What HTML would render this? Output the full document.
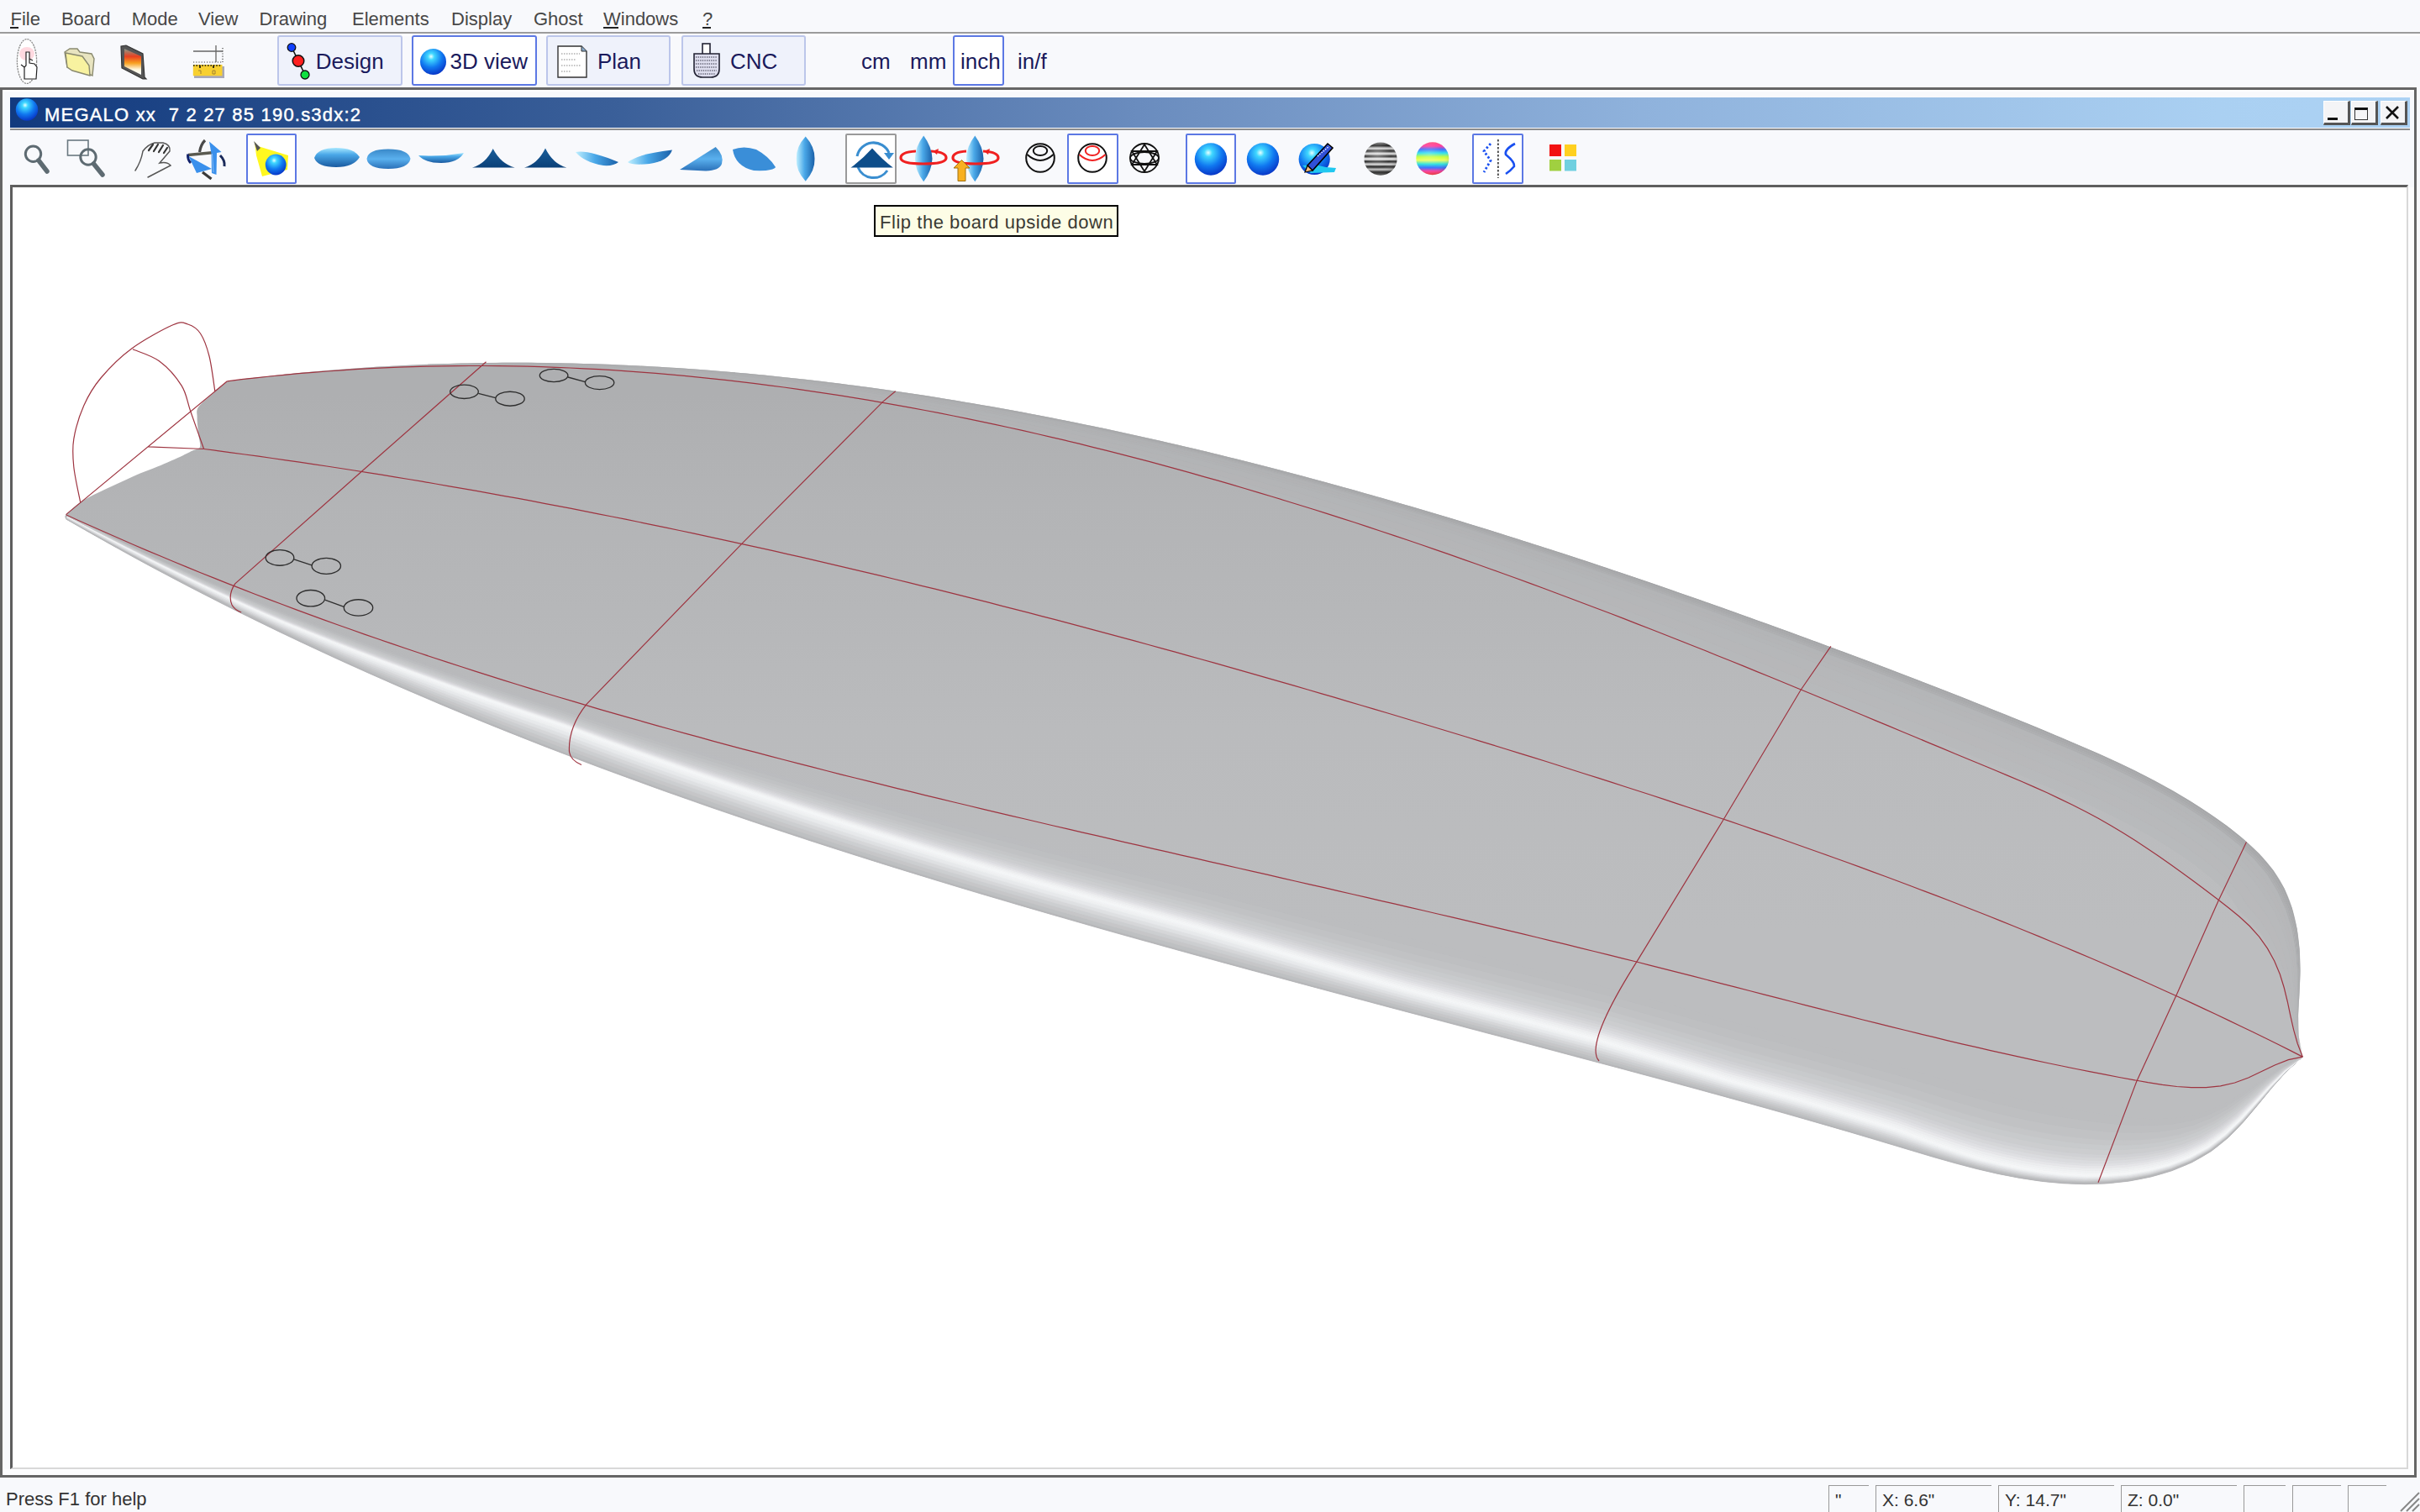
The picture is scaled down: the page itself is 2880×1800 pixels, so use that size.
<!DOCTYPE html>
<html><head><meta charset="utf-8"><style>
html,body{margin:0;padding:0;}
body{width:2880px;height:1800px;overflow:hidden;position:relative;background:#f8f9fc;font-family:"Liberation Sans", sans-serif;}
.t{position:absolute;white-space:pre;font-family:"Liberation Sans", sans-serif;}
</style></head><body>
<div class="t" style="left:12.5px;top:11.9px;font-size:22px;line-height:22px;color:#474747;">File</div><div class="t" style="left:72.9px;top:11.9px;font-size:22px;line-height:22px;color:#474747;">Board</div><div class="t" style="left:156.8px;top:11.9px;font-size:22px;line-height:22px;color:#474747;">Mode</div><div class="t" style="left:236px;top:11.9px;font-size:22px;line-height:22px;color:#474747;">View</div><div class="t" style="left:308.5px;top:11.9px;font-size:22px;line-height:22px;color:#474747;">Drawing</div><div class="t" style="left:419px;top:11.9px;font-size:22px;line-height:22px;color:#474747;">Elements</div><div class="t" style="left:537px;top:11.9px;font-size:22px;line-height:22px;color:#474747;">Display</div><div class="t" style="left:635px;top:11.9px;font-size:22px;line-height:22px;color:#474747;">Ghost</div><div class="t" style="left:718px;top:11.9px;font-size:22px;line-height:22px;color:#474747;">Windows</div><div class="t" style="left:836px;top:11.9px;font-size:22px;line-height:22px;color:#474747;">?</div><div style="position:absolute;left:12px;top:32px;width:10px;height:2px;background:#222"></div><div style="position:absolute;left:718px;top:32px;width:18px;height:2px;background:#222"></div><div style="position:absolute;left:836px;top:32px;width:10px;height:2px;background:#222"></div><div style="position:absolute;left:0;top:38px;width:2880px;height:2px;background:#9c9c9c"></div><div style="position:absolute;left:0;top:40px;width:2880px;height:3px;background:#fdfdfe"></div><div style="position:absolute;left:330px;top:42px;width:145px;height:56px;border:2px solid #bcc6ea;border-radius:3px;background:#eff2fb"></div><div style="position:absolute;left:490px;top:42px;width:145px;height:56px;border:2px solid #5c78e4;border-radius:3px;background:#ffffff"></div><div style="position:absolute;left:650px;top:42px;width:144px;height:56px;border:2px solid #bcc6ea;border-radius:3px;background:#eff2fb"></div><div style="position:absolute;left:811px;top:42px;width:144px;height:56px;border:2px solid #bcc6ea;border-radius:3px;background:#eff2fb"></div><div style="position:absolute;left:1134px;top:42px;width:57px;height:56px;border:2px solid #5c78e4;border-radius:3px;background:#ffffff"></div><div class="t" style="left:375.8px;top:60.0px;font-size:26px;line-height:26px;color:#1a1a5c;">Design</div><div class="t" style="left:535.5px;top:60.0px;font-size:26px;line-height:26px;color:#1a1a5c;">3D view</div><div class="t" style="left:711px;top:60.0px;font-size:26px;line-height:26px;color:#1a1a5c;">Plan</div><div class="t" style="left:869px;top:60.0px;font-size:26px;line-height:26px;color:#1a1a5c;">CNC</div><div class="t" style="left:1025px;top:60.0px;font-size:26px;line-height:26px;color:#1a1a5c;">cm</div><div class="t" style="left:1083px;top:60.0px;font-size:26px;line-height:26px;color:#1a1a5c;">mm</div><div class="t" style="left:1143px;top:60.0px;font-size:26px;line-height:26px;color:#1a1a5c;">inch</div><div class="t" style="left:1211px;top:60.0px;font-size:26px;line-height:26px;color:#1a1a5c;">in/f</div><div style="position:absolute;left:0;top:104px;width:2876px;height:3px;background:#666"></div><div style="position:absolute;left:0;top:104px;width:3px;height:1655px;background:#666"></div><div style="position:absolute;left:2873px;top:104px;width:3px;height:1655px;background:#666"></div><div style="position:absolute;left:0;top:1756px;width:2876px;height:3px;background:#666"></div><div style="position:absolute;left:3px;top:107px;width:2870px;height:2px;background:#fff"></div><div style="position:absolute;left:3px;top:107px;width:2px;height:1649px;background:#fff"></div><div style="position:absolute;left:3px;top:1749px;width:2870px;height:7px;background:#fdfdfe"></div><div style="position:absolute;left:2866px;top:223px;width:7px;height:1533px;background:#fdfdfe"></div><div style="position:absolute;left:12px;top:116px;width:2856px;height:36px;background:linear-gradient(to right,#123a7e 0%,#3a5f99 25%,#6a8cbe 47%,#8fb2dc 68%,#aad0f2 92%,#acd2f4 100%)"></div><div class="t" style="left:53px;top:125.7px;font-size:22px;line-height:22px;color:#ffffff;letter-spacing:1.2px;-webkit-text-stroke:0.45px #fff;">MEGALO xx&nbsp; 7 2 27 85 190.s3dx:2</div><div style="position:absolute;left:2765px;top:120px;width:28px;height:25px;background:#f4f4f6;border-right:3px solid #555;border-bottom:3px solid #555;border-top:1px solid #fff;border-left:1px solid #fff"></div><div style="position:absolute;left:2798px;top:120px;width:28px;height:25px;background:#f4f4f6;border-right:3px solid #555;border-bottom:3px solid #555;border-top:1px solid #fff;border-left:1px solid #fff"></div><div style="position:absolute;left:2833px;top:120px;width:28px;height:25px;background:#f4f4f6;border-right:3px solid #555;border-bottom:3px solid #555;border-top:1px solid #fff;border-left:1px solid #fff"></div><div style="position:absolute;left:2770px;top:140px;width:12px;height:3px;background:#111"></div><div style="position:absolute;left:2802px;top:128px;width:16px;height:15px;border:1.5px solid #333;border-top:3px solid #111;box-sizing:border-box"></div><svg style="position:absolute;left:2838px;top:125px" width="18" height="18"><path d="M2,2 L16,16 M16,2 L2,16" stroke="#111" stroke-width="2.6"/></svg><div style="position:absolute;left:12px;top:153px;width:2856px;height:2px;background:#8e8e8e"></div><div style="position:absolute;left:293px;top:159px;width:56px;height:56px;border:2px solid #5c78e4;border-radius:2px;background:#fff"></div><div style="position:absolute;left:1006px;top:159px;width:57px;height:56px;border:2px solid #9a9a9a;border-radius:2px;background:#fff"></div><div style="position:absolute;left:1270px;top:159px;width:57px;height:56px;border:2px solid #5c78e4;border-radius:2px;background:#fff"></div><div style="position:absolute;left:1411px;top:159px;width:56px;height:56px;border:2px solid #5c78e4;border-radius:2px;background:#fff"></div><div style="position:absolute;left:1752px;top:159px;width:57px;height:56px;border:2px solid #5c78e4;border-radius:2px;background:#fff"></div><div style="position:absolute;left:12px;top:220px;width:2854px;height:1529px;background:#fff;border-top:3px solid #5e5e5e;border-left:3px solid #5e5e5e;border-right:2px solid #d8d8d8;border-bottom:2px solid #d8d8d8;box-sizing:border-box"></div><div class="t" style="left:7px;top:1774.4px;font-size:22px;line-height:22px;color:#333;">Press F1 for help</div><div style="position:absolute;left:2176px;top:1768px;width:48px;height:32px;border-left:1.5px solid #999;border-top:1.5px solid #999;box-sizing:border-box"></div><div class="t" style="left:2184px;top:1775.2px;font-size:21px;line-height:21px;color:#333;">"</div><div style="position:absolute;left:2232px;top:1768px;width:138px;height:32px;border-left:1.5px solid #999;border-top:1.5px solid #999;box-sizing:border-box"></div><div class="t" style="left:2240px;top:1775.2px;font-size:21px;line-height:21px;color:#333;">X: 6.6"</div><div style="position:absolute;left:2378px;top:1768px;width:138px;height:32px;border-left:1.5px solid #999;border-top:1.5px solid #999;box-sizing:border-box"></div><div class="t" style="left:2386px;top:1775.2px;font-size:21px;line-height:21px;color:#333;">Y: 14.7"</div><div style="position:absolute;left:2524px;top:1768px;width:138px;height:32px;border-left:1.5px solid #999;border-top:1.5px solid #999;box-sizing:border-box"></div><div class="t" style="left:2532px;top:1775.2px;font-size:21px;line-height:21px;color:#333;">Z: 0.0"</div><div style="position:absolute;left:2670px;top:1768px;width:50px;height:32px;border-left:1.5px solid #999;border-top:1.5px solid #999;box-sizing:border-box"></div><div style="position:absolute;left:2728px;top:1768px;width:58px;height:32px;border-left:1.5px solid #999;border-top:1.5px solid #999;box-sizing:border-box"></div><div style="position:absolute;left:2794px;top:1768px;width:46px;height:32px;border-left:1.5px solid #999;border-top:1.5px solid #999;box-sizing:border-box"></div><svg style="position:absolute;left:2852px;top:1772px" width="28" height="28"><path d="M27,5 L5,27 M27,12 L12,27 M27,19 L19,27" stroke="#888" stroke-width="2"/></svg>
<svg style="position:absolute;left:0;top:0" width="2880" height="1800" viewBox="0 0 2880 1800">
<clipPath id="vp"><rect x="15" y="223" width="2849" height="1524"/></clipPath>
<g clip-path="url(#vp)"><defs><linearGradient id="deck" gradientUnits="userSpaceOnUse" x1="0" y1="470" x2="0" y2="1110"><stop offset="0" stop-color="#aeafb1"/><stop offset="0.2" stop-color="#b3b4b6"/><stop offset="0.4" stop-color="#b6b7b9"/><stop offset="0.62" stop-color="#babbbd"/><stop offset="1" stop-color="#bcbdbf"/></linearGradient></defs><path d="M270.4,453.8 277.4,452.9 284.3,452.0 291.3,451.1 298.3,450.3 305.3,449.5 312.2,448.7 319.2,447.9 326.2,447.1 333.1,446.4 340.1,445.6 347.1,444.9 354.1,444.2 361.0,443.6 368.0,442.9 375.0,442.3 381.9,441.7 388.9,441.1 395.9,440.5 402.8,439.9 409.8,439.4 416.8,438.9 423.7,438.4 430.7,437.9 437.7,437.4 444.6,437.0 451.6,436.6 458.5,436.2 465.5,435.8 472.5,435.4 479.4,435.1 486.4,434.7 493.3,434.4 500.3,434.1 507.3,433.8 514.2,433.6 521.2,433.3 528.1,433.1 535.1,432.9 542.0,432.7 549.0,432.5 555.9,432.4 562.9,432.2 569.8,432.1 576.8,432.0 583.7,431.9 590.7,431.9 597.6,431.8 604.6,431.8 611.5,431.8 618.5,431.8 625.4,431.8 632.4,431.8 639.3,431.9 646.2,432.0 653.2,432.0 660.1,432.2 667.1,432.3 674.0,432.4 680.9,432.6 687.9,432.7 694.8,432.9 701.7,433.1 708.7,433.3 715.6,433.6 722.5,433.8 729.5,434.1 736.4,434.4 743.3,434.7 750.3,435.0 757.2,435.3 764.1,435.7 771.0,436.1 778.0,436.4 784.9,436.8 791.8,437.2 798.7,437.7 805.6,438.1 812.6,438.6 819.5,439.1 826.4,439.5 833.3,440.0 840.2,440.6 847.1,441.1 854.0,441.7 860.9,442.2 867.9,442.8 874.8,443.4 881.7,444.0 888.6,444.6 895.5,445.3 902.4,445.9 909.3,446.6 916.2,447.3 923.1,448.0 930.0,448.7 936.9,449.4 943.8,450.2 950.7,450.9 957.6,451.7 964.5,452.5 971.3,453.3 978.2,454.1 985.1,454.9 992.0,455.8 998.9,456.6 1005.8,457.5 1012.7,458.4 1019.5,459.3 1026.4,460.2 1033.3,461.1 1040.2,462.1 1047.1,463.0 1053.9,464.0 1060.8,465.0 1067.7,466.0 1074.5,467.0 1081.4,468.0 1088.3,469.0 1095.1,470.1 1102.0,471.1 1108.9,472.2 1115.7,473.3 1122.6,474.4 1129.4,475.5 1136.3,476.6 1143.2,477.7 1150.0,478.9 1156.9,480.1 1163.7,481.2 1170.6,482.4 1177.4,483.6 1184.3,484.8 1191.1,486.1 1197.9,487.3 1204.8,488.5 1211.6,489.8 1218.5,491.1 1225.3,492.4 1232.1,493.7 1239.0,495.0 1245.8,496.3 1252.6,497.6 1259.4,499.0 1266.3,500.3 1273.1,501.7 1279.9,503.1 1286.7,504.5 1293.6,505.9 1300.4,507.3 1307.2,508.7 1314.0,510.1 1320.8,511.6 1327.6,513.0 1334.4,514.5 1341.2,516.0 1348.0,517.5 1354.8,519.0 1361.6,520.5 1368.4,522.0 1375.2,523.6 1382.0,525.1 1388.8,526.7 1395.6,528.2 1402.4,529.8 1409.2,531.4 1416.0,533.0 1422.8,534.6 1429.5,536.2 1436.3,537.8 1443.1,539.5 1449.9,541.1 1456.7,542.8 1463.4,544.5 1470.2,546.1 1477.0,547.8 1483.7,549.5 1490.5,551.2 1497.3,553.0 1504.0,554.7 1510.8,556.4 1517.5,558.2 1524.3,559.9 1531.0,561.7 1537.8,563.5 1544.5,565.3 1551.3,567.1 1558.0,568.9 1564.8,570.7 1571.5,572.5 1578.2,574.3 1585.0,576.2 1591.7,578.0 1598.4,579.9 1605.2,581.7 1611.9,583.6 1618.6,585.5 1625.3,587.4 1632.1,589.3 1638.8,591.2 1645.5,593.1 1652.2,595.1 1658.9,597.0 1665.6,598.9 1672.3,600.9 1679.0,602.8 1685.7,604.8 1692.4,606.8 1699.1,608.8 1705.8,610.8 1712.5,612.8 1719.2,614.8 1725.9,616.8 1732.6,618.8 1739.3,620.8 1745.9,622.9 1752.6,624.9 1759.3,627.0 1766.0,629.0 1772.6,631.1 1779.3,633.2 1786.0,635.3 1792.6,637.4 1799.3,639.5 1806.0,641.6 1812.6,643.7 1819.3,645.8 1825.9,647.9 1832.6,650.0 1839.2,652.2 1845.9,654.3 1852.5,656.5 1859.1,658.6 1865.8,660.8 1872.4,663.0 1879.0,665.2 1885.7,667.3 1892.3,669.5 1898.9,671.7 1905.5,673.9 1912.2,676.1 1918.8,678.4 1925.4,680.6 1932.0,682.8 1938.6,685.0 1945.2,687.3 1951.8,689.5 1958.4,691.8 1965.0,694.0 1971.6,696.3 1978.2,698.6 1984.8,700.8 1991.4,703.1 1998.0,705.4 2004.5,707.7 2011.1,710.0 2017.7,712.3 2024.3,714.6 2030.8,716.9 2037.4,719.2 2044.0,721.5 2050.5,723.8 2057.1,726.2 2063.6,728.5 2070.2,730.9 2076.7,733.2 2083.3,735.5 2089.8,737.9 2096.4,740.3 2102.9,742.6 2109.5,745.0 2116.0,747.4 2122.5,749.7 2129.0,752.1 2135.6,754.5 2142.1,756.9 2148.6,759.3 2155.1,761.7 2161.6,764.1 2168.1,766.5 2174.7,768.9 2181.2,771.3 2187.7,773.7 2194.2,776.1 2200.6,778.5 2207.1,781.0 2213.6,783.4 2220.1,785.8 2226.6,788.3 2233.1,790.7 2239.6,793.2 2246.0,795.6 2252.5,798.1 2259.0,800.5 2265.4,803.0 2271.9,805.5 2278.4,808.0 2284.8,810.5 2291.3,813.0 2297.7,815.5 2304.2,818.0 2310.6,820.5 2317.1,823.0 2323.5,825.5 2329.9,828.0 2336.4,830.6 2342.8,833.1 2349.2,835.7 2355.7,838.2 2362.1,840.8 2368.5,843.4 2374.9,845.9 2381.4,848.5 2387.8,851.1 2394.2,853.7 2400.6,856.3 2407.0,859.0 2413.4,861.6 2419.8,864.2 2426.2,866.9 2432.6,869.5 2439.0,872.2 2445.4,874.9 2451.8,877.5 2458.2,880.2 2464.5,882.9 2470.9,885.7 2477.3,888.4 2483.6,891.2 2490.0,893.9 2496.3,896.7 2502.7,899.6 2509.0,902.5 2515.3,905.4 2521.6,908.3 2527.9,911.3 2534.2,914.3 2540.4,917.3 2546.7,920.4 2552.9,923.6 2559.1,926.8 2565.3,930.0 2571.4,933.3 2577.6,936.7 2583.7,940.1 2589.8,943.6 2595.9,947.2 2601.9,950.8 2607.9,954.5 2613.9,958.2 2619.9,962.1 2625.8,966.0 2631.7,970.0 2637.6,974.1 2643.4,978.2 2649.2,982.5 2655.0,986.8 2660.7,991.3 2666.3,995.8 2671.7,1000.4 2677.1,1005.2 2682.3,1010.0 2687.4,1015.0 2692.2,1020.1 2696.9,1025.3 2701.3,1030.7 2705.5,1036.2 2709.4,1041.8 2713.1,1047.6 2716.4,1053.5 2719.5,1059.6 2722.3,1065.8 2724.8,1072.1 2727.0,1078.5 2729.0,1085.1 2730.8,1091.7 2732.3,1098.4 2733.6,1105.2 2734.7,1112.0 2735.6,1118.9 2736.3,1125.9 2736.9,1132.9 2737.2,1139.9 2737.4,1147.0 2737.5,1154.0 2737.4,1161.1 2737.2,1168.1 2736.9,1175.2 2736.5,1182.2 2736.1,1189.2 2735.7,1196.1 2735.3,1203.1 2735.0,1210.0 2734.9,1216.9 2735.0,1223.8 2735.3,1230.7 2736.0,1237.6 2737.0,1244.4 2738.4,1251.3 2740.3,1258.1 2734.8,1262.5 2729.5,1267.3 2724.4,1272.2 2719.4,1277.3 2714.5,1282.5 2709.7,1287.9 2705.1,1293.3 2700.4,1298.9 2695.8,1304.4 2691.3,1310.1 2686.7,1315.7 2682.2,1321.3 2677.6,1326.8 2672.9,1332.3 2668.2,1337.6 2663.4,1342.9 2658.4,1348.0 2653.4,1352.9 2648.2,1357.6 2642.8,1362.1 2637.2,1366.4 2631.5,1370.5 2625.7,1374.3 2619.6,1377.9 2613.5,1381.3 2607.2,1384.4 2600.8,1387.4 2594.2,1390.1 2587.6,1392.7 2580.9,1395.1 2574.1,1397.2 2567.2,1399.2 2560.2,1401.0 2553.2,1402.6 2546.1,1404.0 2539.0,1405.3 2531.8,1406.4 2524.6,1407.3 2517.4,1408.1 2510.2,1408.7 2503.0,1409.2 2495.8,1409.5 2488.6,1409.7 2481.4,1409.7 2474.2,1409.7 2467.1,1409.4 2459.9,1409.1 2452.8,1408.6 2445.7,1408.1 2438.6,1407.4 2431.5,1406.6 2424.4,1405.7 2417.4,1404.7 2410.3,1403.6 2403.3,1402.4 2396.2,1401.1 2389.2,1399.8 2382.2,1398.4 2375.2,1396.9 2368.2,1395.3 2361.2,1393.7 2354.2,1392.0 2347.2,1390.2 2340.3,1388.4 2333.3,1386.6 2326.4,1384.7 2319.4,1382.7 2312.5,1380.8 2305.5,1378.8 2298.6,1376.8 2291.7,1374.7 2284.8,1372.7 2277.8,1370.6 2270.9,1368.5 2264.0,1366.4 2257.1,1364.3 2250.2,1362.2 2243.3,1360.2 2236.4,1358.1 2229.5,1356.1 2222.6,1354.0 2215.7,1352.0 2208.8,1349.9 2201.9,1347.9 2195.0,1345.9 2188.1,1343.9 2181.2,1341.9 2174.3,1339.9 2167.5,1337.9 2160.6,1335.9 2153.7,1333.9 2146.8,1332.0 2139.9,1330.0 2133.0,1328.0 2126.2,1326.1 2119.3,1324.1 2112.4,1322.2 2105.5,1320.3 2098.6,1318.3 2091.8,1316.4 2084.9,1314.5 2078.0,1312.6 2071.1,1310.7 2064.3,1308.8 2057.4,1306.9 2050.5,1305.0 2043.6,1303.1 2036.8,1301.2 2029.9,1299.3 2023.0,1297.5 2016.1,1295.6 2009.3,1293.7 2002.4,1291.9 1995.5,1290.0 1988.6,1288.1 1981.8,1286.3 1974.9,1284.4 1968.0,1282.6 1961.1,1280.7 1954.2,1278.9 1947.4,1277.0 1940.5,1275.2 1933.6,1273.3 1926.7,1271.5 1919.8,1269.7 1913.0,1267.8 1906.1,1266.0 1899.2,1264.2 1892.3,1262.3 1885.4,1260.5 1878.5,1258.7 1871.6,1256.8 1864.7,1255.0 1857.8,1253.2 1851.0,1251.3 1844.1,1249.5 1837.2,1247.7 1830.3,1245.9 1823.4,1244.0 1816.5,1242.2 1809.6,1240.4 1802.7,1238.6 1795.8,1236.7 1788.9,1234.9 1782.0,1233.1 1775.1,1231.3 1768.2,1229.4 1761.2,1227.6 1754.3,1225.8 1747.4,1224.0 1740.5,1222.1 1733.6,1220.3 1726.7,1218.5 1719.8,1216.7 1712.9,1214.8 1706.0,1213.0 1699.1,1211.2 1692.2,1209.3 1685.3,1207.5 1678.3,1205.7 1671.4,1203.9 1664.5,1202.0 1657.6,1200.2 1650.7,1198.4 1643.8,1196.5 1636.9,1194.7 1630.0,1192.8 1623.0,1191.0 1616.1,1189.2 1609.2,1187.3 1602.3,1185.5 1595.4,1183.6 1588.5,1181.8 1581.6,1179.9 1574.6,1178.1 1567.7,1176.2 1560.8,1174.4 1553.9,1172.5 1547.0,1170.7 1540.1,1168.8 1533.2,1167.0 1526.3,1165.1 1519.3,1163.2 1512.4,1161.4 1505.5,1159.5 1498.6,1157.6 1491.7,1155.8 1484.8,1153.9 1477.9,1152.0 1471.0,1150.1 1464.1,1148.3 1457.1,1146.4 1450.2,1144.5 1443.3,1142.6 1436.4,1140.7 1429.5,1138.8 1422.6,1136.9 1415.7,1135.0 1408.8,1133.1 1401.9,1131.2 1395.0,1129.3 1388.1,1127.4 1381.2,1125.5 1374.3,1123.5 1367.4,1121.6 1360.5,1119.7 1353.6,1117.8 1346.7,1115.8 1339.8,1113.9 1332.9,1111.9 1326.0,1110.0 1319.1,1108.1 1312.2,1106.1 1305.3,1104.2 1298.4,1102.2 1291.5,1100.2 1284.7,1098.3 1277.8,1096.3 1270.9,1094.3 1264.0,1092.3 1257.1,1090.4 1250.2,1088.4 1243.4,1086.4 1236.5,1084.4 1229.6,1082.4 1222.7,1080.4 1215.9,1078.4 1209.0,1076.4 1202.1,1074.3 1195.2,1072.3 1188.4,1070.3 1181.5,1068.3 1174.6,1066.2 1167.8,1064.2 1160.9,1062.1 1154.1,1060.1 1147.2,1058.0 1140.3,1056.0 1133.5,1053.9 1126.6,1051.8 1119.8,1049.7 1112.9,1047.7 1106.1,1045.6 1099.2,1043.5 1092.4,1041.4 1085.6,1039.3 1078.7,1037.2 1071.9,1035.0 1065.0,1032.9 1058.2,1030.8 1051.4,1028.7 1044.5,1026.5 1037.7,1024.4 1030.9,1022.2 1024.1,1020.1 1017.3,1017.9 1010.4,1015.7 1003.6,1013.6 996.8,1011.4 990.0,1009.2 983.2,1007.0 976.4,1004.8 969.6,1002.6 962.8,1000.4 956.0,998.1 949.2,995.9 942.4,993.7 935.6,991.4 928.8,989.2 922.0,986.9 915.2,984.7 908.5,982.4 901.7,980.1 894.9,977.9 888.1,975.6 881.4,973.3 874.6,971.0 867.8,968.6 861.1,966.3 854.3,964.0 847.5,961.7 840.8,959.3 834.0,957.0 827.3,954.6 820.6,952.3 813.8,949.9 807.1,947.5 800.3,945.1 793.6,942.7 786.9,940.3 780.2,937.9 773.4,935.5 766.7,933.0 760.0,930.6 753.3,928.2 746.6,925.7 739.9,923.2 733.2,920.8 726.5,918.3 719.8,915.8 713.1,913.3 706.4,910.8 699.7,908.3 693.0,905.8 686.4,903.2 679.7,900.7 673.0,898.1 666.4,895.6 659.7,893.0 653.0,890.4 646.4,887.9 639.7,885.3 633.1,882.7 626.4,880.0 619.8,877.4 613.2,874.8 606.5,872.2 599.9,869.5 593.3,866.8 586.6,864.2 580.0,861.5 573.4,858.8 566.8,856.1 560.2,853.4 553.6,850.7 547.0,847.9 540.4,845.2 533.8,842.4 527.2,839.7 520.7,836.9 514.1,834.1 507.5,831.3 501.0,828.5 494.4,825.7 487.8,822.9 481.3,820.1 474.7,817.2 468.2,814.4 461.6,811.5 455.1,808.6 448.6,805.8 442.1,802.9 435.5,799.9 429.0,797.0 422.5,794.1 416.0,791.2 409.5,788.2 403.0,785.2 396.5,782.3 390.0,779.3 383.5,776.3 377.1,773.3 370.6,770.2 364.1,767.2 357.6,764.2 351.2,761.1 344.7,758.0 338.3,755.0 331.8,751.9 325.4,748.8 319.0,745.7 312.5,742.5 306.1,739.4 299.7,736.2 293.3,733.1 286.9,729.9 280.5,726.7 274.1,723.5 267.7,720.3 261.3,717.1 254.9,713.8 248.5,710.6 242.2,707.3 235.8,704.0 229.4,700.7 223.1,697.4 216.7,694.1 210.4,690.8 204.1,687.5 197.7,684.1 191.4,680.7 185.1,677.4 178.8,674.0 172.4,670.6 166.1,667.1 159.8,663.7 153.6,660.3 147.3,656.8 141.0,653.3 134.7,649.9 128.4,646.4 122.2,642.8 115.9,639.3 109.7,635.8 103.4,632.2 97.2,628.6 91.0,625.1 84.7,621.5 78.5,617.9 78.3,617.5 77.9,616.9 77.5,616.1 77.3,615.1 77.6,614.0 78.5,612.6 80.4,610.7 83.3,607.9 86.9,604.8 90.8,601.6 94.7,598.6 98.2,596.1 102.0,593.9 106.7,591.4 112.0,588.8 117.4,586.3 122.6,583.8 127.3,581.6 132.3,579.2 138.2,576.4 144.8,573.4 151.3,570.4 157.2,567.7 162.2,565.5 166.8,563.6 172.0,561.5 177.3,559.4 182.5,557.4 187.3,555.5 191.3,553.9 195.1,552.3 199.3,550.5 203.7,548.6 207.9,546.7 211.6,545.1 214.6,543.7 217.2,542.5 219.9,541.1 222.6,539.8 225.2,538.5 227.4,537.3 229.2,536.4 230.9,535.7 232.7,535.2 234.4,534.6 236.0,534.0 237.3,533.2 238.0,532.0 238.2,530.2 238.0,527.7 237.5,524.8 236.9,521.7 236.4,518.7 236.0,516.0 235.7,513.2 235.4,509.7 235.1,506.0 234.8,502.2 234.6,498.9 234.6,496.2 234.5,494.1 234.3,492.0 234.2,490.0 234.5,487.9 235.5,485.5 237.3,482.9 241.1,479.1 247.0,473.7 254.0,467.7 260.9,461.8 266.7,456.9 270.4,453.8Z" fill="url(#deck)"/><path d="M78.5,617.9 101.2,630.9 124.0,643.8 146.9,656.6 169.8,669.2 192.9,681.5 216.1,693.8 239.3,705.8 262.6,717.7 286.0,729.5 309.5,741.0 333.1,752.5 356.7,763.7 380.4,774.8 404.2,785.8 428.1,796.6 452.0,807.2 476.0,817.8 500.0,828.1 524.1,838.4 548.3,848.5 572.5,858.4 596.7,868.2 621.1,877.9 645.4,887.5 669.9,896.9 694.3,906.3 718.8,915.5 743.4,924.5 768.0,933.5 792.6,942.4 817.3,951.1 842.0,959.8 866.8,968.3 891.6,976.7 916.4,985.1 941.3,993.3 966.1,1001.5 991.0,1009.5 1016.0,1017.5 1041.0,1025.4 1065.9,1033.2 1091.0,1040.9 1116.0,1048.6 1141.1,1056.2 1166.1,1063.7 1191.2,1071.1 1216.4,1078.5 1241.5,1085.8 1266.7,1093.1 1291.8,1100.3 1317.0,1107.5 1342.2,1114.6 1367.4,1121.6 1392.7,1128.6 1417.9,1135.6 1443.2,1142.5 1468.4,1149.4 1493.7,1156.3 1519.0,1163.1 1544.2,1169.9 1569.5,1176.7 1594.8,1183.5 1620.1,1190.2 1645.4,1197.0 1670.7,1203.7 1696.1,1210.4 1721.4,1217.1 1746.7,1223.8 1772.0,1230.5 1797.3,1237.1 1822.6,1243.8 1847.9,1250.5 1873.2,1257.3 1898.5,1264.0 1923.8,1270.7 1949.1,1277.5 1974.4,1284.3 1999.7,1291.1 2025.0,1298.0 2050.2,1304.9 2075.5,1311.9 2100.7,1318.9 2125.9,1326.0 2151.1,1333.2 2176.2,1340.4 2201.4,1347.7 2226.5,1355.2 2251.6,1362.7 2276.6,1370.2 2301.7,1377.7 2326.9,1384.8 2352.3,1391.5 2377.8,1397.4 2403.5,1402.4 2429.3,1406.3 2455.4,1408.8 2481.6,1409.7 2507.7,1408.9 2533.8,1406.1 2559.5,1401.1 2584.6,1393.8 2608.7,1383.7 2631.4,1370.6 2651.8,1354.3 2670.0,1335.5 2686.9,1315.5 2703.5,1295.2 2720.9,1275.7 2740.3,1258.1 2740.3,1258.1 2720.8,1275.6 2703.3,1295.0 2686.6,1315.2 2669.7,1335.2 2651.4,1353.9 2631.0,1370.0 2608.4,1383.0 2584.3,1393.0 2559.3,1400.3 2533.6,1405.3 2507.7,1408.0 2481.6,1408.9 2455.5,1408.0 2429.4,1405.5 2403.6,1401.6 2377.9,1396.6 2352.5,1390.7 2327.1,1384.0 2302.0,1376.9 2276.9,1369.4 2251.8,1361.9 2226.7,1354.4 2201.6,1346.9 2176.5,1339.6 2151.3,1332.4 2126.1,1325.2 2100.9,1318.1 2075.7,1311.1 2050.4,1304.1 2025.2,1297.2 1999.9,1290.3 1974.6,1283.5 1949.4,1276.7 1924.1,1269.9 1898.8,1263.2 1873.5,1256.5 1848.1,1249.7 1822.8,1243.0 1797.5,1236.3 1772.2,1229.7 1746.9,1223.0 1721.6,1216.3 1696.3,1209.6 1671.0,1202.9 1645.6,1196.2 1620.3,1189.4 1595.0,1182.7 1569.7,1175.9 1544.5,1169.1 1519.2,1162.3 1493.9,1155.5 1468.6,1148.6 1443.4,1141.7 1418.1,1134.8 1392.9,1127.8 1367.7,1120.8 1342.5,1113.8 1317.3,1106.7 1292.1,1099.5 1266.9,1092.3 1241.7,1085.0 1216.6,1077.7 1191.5,1070.3 1166.4,1062.9 1141.3,1055.4 1116.2,1047.8 1091.2,1040.1 1066.2,1032.4 1041.2,1024.6 1016.2,1016.7 991.3,1008.7 966.4,1000.7 941.5,992.5 916.7,984.3 891.8,975.9 867.1,967.5 842.3,959.0 817.6,950.3 792.9,941.6 768.3,932.7 743.7,923.8 719.1,914.7 694.6,905.5 670.2,896.2 645.7,886.7 621.4,877.2 597.1,867.5 572.8,857.6 548.6,847.7 524.4,837.6 500.3,827.4 476.3,817.0 452.3,806.5 428.4,795.8 404.6,785.0 380.8,774.1 357.1,763.0 333.4,751.7 309.9,740.3 286.4,728.7 263.0,717.0 239.7,705.1 216.4,693.0 193.3,680.9 170.2,668.5 147.2,656.0 124.3,643.4 101.4,630.5 78.7,617.6Z" fill="#b4b4b6" stroke="#b4b4b6" stroke-width="0.8"/><path d="M78.7,617.6 101.4,630.5 124.3,643.4 147.2,656.0 170.2,668.5 193.3,680.9 216.4,693.0 239.7,705.1 263.0,717.0 286.4,728.7 309.9,740.3 333.4,751.7 357.1,763.0 380.8,774.1 404.6,785.0 428.4,795.8 452.3,806.5 476.3,817.0 500.3,827.4 524.4,837.6 548.6,847.7 572.8,857.6 597.1,867.5 621.4,877.2 645.7,886.7 670.2,896.2 694.6,905.5 719.1,914.7 743.7,923.8 768.3,932.7 792.9,941.6 817.6,950.3 842.3,959.0 867.1,967.5 891.8,975.9 916.7,984.3 941.5,992.5 966.4,1000.7 991.3,1008.7 1016.2,1016.7 1041.2,1024.6 1066.2,1032.4 1091.2,1040.1 1116.2,1047.8 1141.3,1055.4 1166.4,1062.9 1191.5,1070.3 1216.6,1077.7 1241.7,1085.0 1266.9,1092.3 1292.1,1099.5 1317.3,1106.7 1342.5,1113.8 1367.7,1120.8 1392.9,1127.8 1418.1,1134.8 1443.4,1141.7 1468.6,1148.6 1493.9,1155.5 1519.2,1162.3 1544.5,1169.1 1569.7,1175.9 1595.0,1182.7 1620.3,1189.4 1645.6,1196.2 1671.0,1202.9 1696.3,1209.6 1721.6,1216.3 1746.9,1223.0 1772.2,1229.7 1797.5,1236.3 1822.8,1243.0 1848.1,1249.7 1873.5,1256.5 1898.8,1263.2 1924.1,1269.9 1949.4,1276.7 1974.6,1283.5 1999.9,1290.3 2025.2,1297.2 2050.4,1304.1 2075.7,1311.1 2100.9,1318.1 2126.1,1325.2 2151.3,1332.4 2176.5,1339.6 2201.6,1346.9 2226.7,1354.4 2251.8,1361.9 2276.9,1369.4 2302.0,1376.9 2327.1,1384.0 2352.5,1390.7 2377.9,1396.6 2403.6,1401.6 2429.4,1405.5 2455.5,1408.0 2481.6,1408.9 2507.7,1408.0 2533.6,1405.3 2559.3,1400.3 2584.3,1393.0 2608.4,1383.0 2631.0,1370.0 2651.4,1353.9 2669.7,1335.2 2686.6,1315.2 2703.3,1295.0 2720.8,1275.6 2740.3,1258.1 2740.3,1258.1 2720.7,1275.5 2703.1,1294.8 2686.3,1315.0 2669.3,1334.9 2651.0,1353.4 2630.6,1369.5 2608.1,1382.4 2584.0,1392.3 2559.1,1399.5 2533.5,1404.4 2507.6,1407.2 2481.6,1408.1 2455.5,1407.1 2429.5,1404.7 2403.7,1400.8 2378.1,1395.8 2352.7,1389.9 2327.4,1383.2 2302.2,1376.1 2277.1,1368.6 2252.1,1361.1 2227.0,1353.6 2201.8,1346.1 2176.7,1338.8 2151.5,1331.6 2126.3,1324.4 2101.1,1317.3 2075.9,1310.3 2050.7,1303.3 2025.4,1296.4 2000.1,1289.5 1974.9,1282.7 1949.6,1275.9 1924.3,1269.1 1899.0,1262.4 1873.7,1255.7 1848.4,1248.9 1823.0,1242.2 1797.7,1235.5 1772.4,1228.8 1747.1,1222.2 1721.8,1215.5 1696.5,1208.8 1671.2,1202.1 1645.9,1195.3 1620.6,1188.6 1595.3,1181.9 1570.0,1175.1 1544.7,1168.3 1519.4,1161.5 1494.1,1154.7 1468.9,1147.8 1443.6,1140.9 1418.3,1134.0 1393.1,1127.0 1367.9,1120.0 1342.7,1113.0 1317.5,1105.9 1292.3,1098.7 1267.1,1091.5 1242.0,1084.2 1216.8,1076.9 1191.7,1069.5 1166.6,1062.1 1141.5,1054.6 1116.5,1047.0 1091.5,1039.3 1066.4,1031.6 1041.5,1023.8 1016.5,1015.9 991.6,1007.9 966.7,999.9 941.8,991.7 916.9,983.5 892.1,975.2 867.3,966.7 842.6,958.2 817.9,949.5 793.2,940.8 768.6,931.9 744.0,923.0 719.4,913.9 694.9,904.7 670.5,895.4 646.0,885.9 621.7,876.4 597.4,866.7 573.1,856.9 548.9,846.9 524.7,836.8 500.6,826.6 476.6,816.2 452.6,805.7 428.7,795.1 404.9,784.3 381.1,773.3 357.4,762.2 333.8,751.0 310.2,739.5 286.8,728.0 263.4,716.2 240.1,704.4 216.8,692.3 193.6,680.2 170.5,667.9 147.5,655.5 124.5,642.9 101.7,630.1 78.9,617.2Z" fill="#b6b8ba" stroke="#b6b8ba" stroke-width="0.8"/><path d="M78.9,617.2 101.7,630.1 124.5,642.9 147.5,655.5 170.5,667.9 193.6,680.2 216.8,692.3 240.1,704.4 263.4,716.2 286.8,728.0 310.2,739.5 333.8,751.0 357.4,762.2 381.1,773.3 404.9,784.3 428.7,795.1 452.6,805.7 476.6,816.2 500.6,826.6 524.7,836.8 548.9,846.9 573.1,856.9 597.4,866.7 621.7,876.4 646.0,885.9 670.5,895.4 694.9,904.7 719.4,913.9 744.0,923.0 768.6,931.9 793.2,940.8 817.9,949.5 842.6,958.2 867.3,966.7 892.1,975.2 916.9,983.5 941.8,991.7 966.7,999.9 991.6,1007.9 1016.5,1015.9 1041.5,1023.8 1066.4,1031.6 1091.5,1039.3 1116.5,1047.0 1141.5,1054.6 1166.6,1062.1 1191.7,1069.5 1216.8,1076.9 1242.0,1084.2 1267.1,1091.5 1292.3,1098.7 1317.5,1105.9 1342.7,1113.0 1367.9,1120.0 1393.1,1127.0 1418.3,1134.0 1443.6,1140.9 1468.9,1147.8 1494.1,1154.7 1519.4,1161.5 1544.7,1168.3 1570.0,1175.1 1595.3,1181.9 1620.6,1188.6 1645.9,1195.3 1671.2,1202.1 1696.5,1208.8 1721.8,1215.5 1747.1,1222.2 1772.4,1228.8 1797.7,1235.5 1823.0,1242.2 1848.4,1248.9 1873.7,1255.7 1899.0,1262.4 1924.3,1269.1 1949.6,1275.9 1974.9,1282.7 2000.1,1289.5 2025.4,1296.4 2050.7,1303.3 2075.9,1310.3 2101.1,1317.3 2126.3,1324.4 2151.5,1331.6 2176.7,1338.8 2201.8,1346.1 2227.0,1353.6 2252.1,1361.1 2277.1,1368.6 2302.2,1376.1 2327.4,1383.2 2352.7,1389.9 2378.1,1395.8 2403.7,1400.8 2429.5,1404.7 2455.5,1407.1 2481.6,1408.1 2507.6,1407.2 2533.5,1404.4 2559.1,1399.5 2584.0,1392.3 2608.1,1382.4 2630.6,1369.5 2651.0,1353.4 2669.3,1334.9 2686.3,1315.0 2703.1,1294.8 2720.7,1275.5 2740.3,1258.1 2740.3,1258.1 2720.6,1275.4 2702.9,1294.7 2686.0,1314.7 2669.0,1334.5 2650.7,1353.0 2630.3,1369.0 2607.7,1381.7 2583.8,1391.5 2558.9,1398.7 2533.4,1403.6 2507.6,1406.4 2481.6,1407.2 2455.6,1406.3 2429.6,1403.8 2403.9,1400.0 2378.3,1395.0 2352.9,1389.0 2327.6,1382.4 2302.4,1375.3 2277.4,1367.8 2252.3,1360.3 2227.2,1352.8 2202.1,1345.3 2176.9,1338.0 2151.8,1330.8 2126.6,1323.6 2101.4,1316.5 2076.1,1309.5 2050.9,1302.5 2025.6,1295.6 2000.4,1288.7 1975.1,1281.9 1949.8,1275.1 1924.5,1268.3 1899.2,1261.6 1873.9,1254.8 1848.6,1248.1 1823.3,1241.4 1797.9,1234.7 1772.6,1228.0 1747.3,1221.3 1722.0,1214.7 1696.7,1208.0 1671.4,1201.3 1646.1,1194.5 1620.8,1187.8 1595.5,1181.1 1570.2,1174.3 1544.9,1167.5 1519.6,1160.7 1494.3,1153.9 1469.1,1147.0 1443.8,1140.1 1418.6,1133.2 1393.3,1126.2 1368.1,1119.2 1342.9,1112.2 1317.7,1105.1 1292.5,1097.9 1267.4,1090.7 1242.2,1083.4 1217.1,1076.1 1192.0,1068.7 1166.9,1061.3 1141.8,1053.8 1116.7,1046.2 1091.7,1038.5 1066.7,1030.8 1041.7,1023.0 1016.7,1015.1 991.8,1007.1 966.9,999.1 942.0,990.9 917.2,982.7 892.4,974.4 867.6,965.9 842.9,957.4 818.2,948.8 793.5,940.0 768.9,931.2 744.3,922.2 719.7,913.1 695.2,903.9 670.8,894.6 646.3,885.2 622.0,875.6 597.7,865.9 573.4,856.1 549.2,846.1 525.1,836.1 501.0,825.8 476.9,815.5 453.0,805.0 429.1,794.3 405.2,783.5 381.5,772.6 357.8,761.5 334.2,750.2 310.6,738.8 287.1,727.2 263.7,715.5 240.4,703.6 217.2,691.6 194.0,679.5 170.8,667.3 147.8,654.9 124.8,642.4 101.9,629.7 79.1,616.9Z" fill="#bababc" stroke="#bababc" stroke-width="0.8"/><path d="M79.1,616.9 101.9,629.7 124.8,642.4 147.8,654.9 170.8,667.3 194.0,679.5 217.2,691.6 240.4,703.6 263.7,715.5 287.1,727.2 310.6,738.8 334.2,750.2 357.8,761.5 381.5,772.6 405.2,783.5 429.1,794.3 453.0,805.0 476.9,815.5 501.0,825.8 525.1,836.1 549.2,846.1 573.4,856.1 597.7,865.9 622.0,875.6 646.3,885.2 670.8,894.6 695.2,903.9 719.7,913.1 744.3,922.2 768.9,931.2 793.5,940.0 818.2,948.8 842.9,957.4 867.6,965.9 892.4,974.4 917.2,982.7 942.0,990.9 966.9,999.1 991.8,1007.1 1016.7,1015.1 1041.7,1023.0 1066.7,1030.8 1091.7,1038.5 1116.7,1046.2 1141.8,1053.8 1166.9,1061.3 1192.0,1068.7 1217.1,1076.1 1242.2,1083.4 1267.4,1090.7 1292.5,1097.9 1317.7,1105.1 1342.9,1112.2 1368.1,1119.2 1393.3,1126.2 1418.6,1133.2 1443.8,1140.1 1469.1,1147.0 1494.3,1153.9 1519.6,1160.7 1544.9,1167.5 1570.2,1174.3 1595.5,1181.1 1620.8,1187.8 1646.1,1194.5 1671.4,1201.3 1696.7,1208.0 1722.0,1214.7 1747.3,1221.3 1772.6,1228.0 1797.9,1234.7 1823.3,1241.4 1848.6,1248.1 1873.9,1254.8 1899.2,1261.6 1924.5,1268.3 1949.8,1275.1 1975.1,1281.9 2000.4,1288.7 2025.6,1295.6 2050.9,1302.5 2076.1,1309.5 2101.4,1316.5 2126.6,1323.6 2151.8,1330.8 2176.9,1338.0 2202.1,1345.3 2227.2,1352.8 2252.3,1360.3 2277.4,1367.8 2302.4,1375.3 2327.6,1382.4 2352.9,1389.0 2378.3,1395.0 2403.9,1400.0 2429.6,1403.8 2455.6,1406.3 2481.6,1407.2 2507.6,1406.4 2533.4,1403.6 2558.9,1398.7 2583.8,1391.5 2607.7,1381.7 2630.3,1369.0 2650.7,1353.0 2669.0,1334.5 2686.0,1314.7 2702.9,1294.7 2720.6,1275.4 2740.3,1258.1 2740.3,1258.1 2720.6,1275.3 2702.8,1294.6 2685.9,1314.6 2668.8,1334.4 2650.5,1352.8 2630.1,1368.7 2607.6,1381.4 2583.6,1391.1 2558.8,1398.3 2533.3,1403.1 2507.5,1405.7 2481.6,1406.5 2455.6,1405.5 2429.8,1403.0 2404.0,1399.0 2378.5,1394.0 2353.1,1388.0 2327.9,1381.2 2302.9,1373.8 2277.9,1366.1 2252.9,1358.4 2227.8,1350.8 2202.7,1343.3 2177.5,1336.0 2152.4,1328.7 2127.2,1321.5 2101.9,1314.4 2076.7,1307.4 2051.5,1300.4 2026.2,1293.3 2001.0,1286.3 1975.8,1279.4 1950.5,1272.4 1925.2,1265.5 1900.0,1258.6 1874.7,1251.9 1849.4,1245.2 1824.0,1238.5 1798.7,1231.8 1773.4,1225.1 1748.1,1218.4 1722.8,1211.7 1697.5,1205.0 1672.2,1198.3 1646.9,1191.5 1621.6,1184.7 1596.3,1177.8 1571.1,1171.0 1545.8,1164.1 1520.6,1157.2 1495.3,1150.3 1470.1,1143.3 1444.9,1136.3 1419.7,1129.3 1394.4,1122.3 1369.2,1115.3 1344.0,1108.2 1318.8,1101.2 1293.6,1094.0 1268.5,1086.8 1243.3,1079.6 1218.2,1072.3 1193.1,1064.9 1168.0,1057.5 1142.9,1050.0 1117.9,1042.4 1092.9,1034.7 1067.9,1027.0 1042.9,1019.2 1018.0,1011.3 993.1,1003.3 968.2,995.2 943.3,987.0 918.5,978.8 893.7,970.5 868.9,962.1 844.2,953.5 819.5,944.9 794.8,936.2 770.2,927.4 745.7,918.4 721.1,909.4 696.6,900.2 672.2,890.9 647.7,881.6 623.3,872.2 599.0,862.7 574.6,853.1 550.4,843.3 526.2,833.4 502.0,823.4 477.9,813.2 453.9,802.9 429.9,792.5 406.0,781.9 382.1,771.2 358.3,760.3 334.6,749.2 311.0,738.0 287.5,726.5 264.1,714.9 240.7,703.1 217.4,691.2 194.2,679.1 171.0,667.0 147.9,654.7 124.9,642.2 102.0,629.5 79.2,616.7Z" fill="#bec0c2" stroke="#bec0c2" stroke-width="0.8"/><path d="M79.2,616.7 102.0,629.5 124.9,642.2 147.9,654.7 171.0,667.0 194.2,679.1 217.4,691.2 240.7,703.1 264.1,714.9 287.5,726.5 311.0,738.0 334.6,749.2 358.3,760.3 382.1,771.2 406.0,781.9 429.9,792.5 453.9,802.9 477.9,813.2 502.0,823.4 526.2,833.4 550.4,843.3 574.6,853.1 599.0,862.7 623.3,872.2 647.7,881.6 672.2,890.9 696.6,900.2 721.1,909.4 745.7,918.4 770.2,927.4 794.8,936.2 819.5,944.9 844.2,953.5 868.9,962.1 893.7,970.5 918.5,978.8 943.3,987.0 968.2,995.2 993.1,1003.3 1018.0,1011.3 1042.9,1019.2 1067.9,1027.0 1092.9,1034.7 1117.9,1042.4 1142.9,1050.0 1168.0,1057.5 1193.1,1064.9 1218.2,1072.3 1243.3,1079.6 1268.5,1086.8 1293.6,1094.0 1318.8,1101.2 1344.0,1108.2 1369.2,1115.3 1394.4,1122.3 1419.7,1129.3 1444.9,1136.3 1470.1,1143.3 1495.3,1150.3 1520.6,1157.2 1545.8,1164.1 1571.1,1171.0 1596.3,1177.8 1621.6,1184.7 1646.9,1191.5 1672.2,1198.3 1697.5,1205.0 1722.8,1211.7 1748.1,1218.4 1773.4,1225.1 1798.7,1231.8 1824.0,1238.5 1849.4,1245.2 1874.7,1251.9 1900.0,1258.6 1925.2,1265.5 1950.5,1272.4 1975.8,1279.4 2001.0,1286.3 2026.2,1293.3 2051.5,1300.4 2076.7,1307.4 2101.9,1314.4 2127.2,1321.5 2152.4,1328.7 2177.5,1336.0 2202.7,1343.3 2227.8,1350.8 2252.9,1358.4 2277.9,1366.1 2302.9,1373.8 2327.9,1381.2 2353.1,1388.0 2378.5,1394.0 2404.0,1399.0 2429.8,1403.0 2455.6,1405.5 2481.6,1406.5 2507.5,1405.7 2533.3,1403.1 2558.8,1398.3 2583.6,1391.1 2607.6,1381.4 2630.1,1368.7 2650.5,1352.8 2668.8,1334.4 2685.9,1314.6 2702.8,1294.6 2720.6,1275.3 2740.3,1258.1 2740.3,1258.1 2720.5,1275.3 2702.7,1294.5 2685.7,1314.5 2668.6,1334.2 2650.3,1352.5 2629.9,1368.4 2607.4,1381.1 2583.5,1390.8 2558.6,1397.8 2533.2,1402.5 2507.5,1405.1 2481.6,1405.8 2455.7,1404.7 2429.9,1402.1 2404.2,1398.1 2378.7,1393.0 2353.4,1386.9 2328.3,1379.9 2303.3,1372.3 2278.4,1364.5 2253.4,1356.5 2228.4,1348.8 2203.3,1341.3 2178.1,1333.9 2153.0,1326.6 2127.8,1319.4 2102.5,1312.3 2077.3,1305.3 2052.0,1298.3 2026.9,1291.1 2001.7,1283.9 1976.4,1276.8 1951.2,1269.7 1926.0,1262.7 1900.8,1255.6 1875.5,1248.9 1850.1,1242.2 1824.8,1235.5 1799.5,1228.8 1774.2,1222.1 1748.9,1215.4 1723.6,1208.7 1698.3,1202.0 1673.0,1195.3 1647.7,1188.5 1622.4,1181.6 1597.2,1174.6 1572.0,1167.7 1546.7,1160.7 1521.5,1153.7 1496.3,1146.6 1471.1,1139.6 1445.9,1132.5 1420.7,1125.3 1395.5,1118.3 1370.3,1111.3 1345.1,1104.3 1319.9,1097.3 1294.7,1090.1 1269.6,1083.0 1244.4,1075.7 1219.3,1068.5 1194.2,1061.1 1169.1,1053.7 1144.1,1046.1 1119.1,1038.5 1094.1,1030.9 1069.1,1023.1 1044.1,1015.3 1019.2,1007.4 994.3,999.4 969.4,991.3 944.6,983.2 919.8,974.9 895.0,966.6 870.3,958.2 845.5,949.7 820.9,941.1 796.2,932.4 771.6,923.6 747.0,914.6 722.5,905.6 698.0,896.5 673.6,887.2 649.1,878.0 624.7,868.8 600.2,859.5 575.9,850.1 551.5,840.5 527.3,830.8 503.0,821.0 478.9,811.0 454.8,800.9 430.7,790.7 406.7,780.3 382.8,769.8 358.9,759.1 335.1,748.2 311.4,737.1 287.8,725.8 264.4,714.3 241.0,702.6 217.6,690.8 194.4,678.8 171.2,666.7 148.1,654.4 125.1,641.9 102.2,629.3 79.3,616.5Z" fill="#c6c6c8" stroke="#c6c6c8" stroke-width="0.8"/><path d="M79.3,616.5 102.2,629.3 125.1,641.9 148.1,654.4 171.2,666.7 194.4,678.8 217.6,690.8 241.0,702.6 264.4,714.3 287.8,725.8 311.4,737.1 335.1,748.2 358.9,759.1 382.8,769.8 406.7,780.3 430.7,790.7 454.8,800.9 478.9,811.0 503.0,821.0 527.3,830.8 551.5,840.5 575.9,850.1 600.2,859.5 624.7,868.8 649.1,878.0 673.6,887.2 698.0,896.5 722.5,905.6 747.0,914.6 771.6,923.6 796.2,932.4 820.9,941.1 845.5,949.7 870.3,958.2 895.0,966.6 919.8,974.9 944.6,983.2 969.4,991.3 994.3,999.4 1019.2,1007.4 1044.1,1015.3 1069.1,1023.1 1094.1,1030.9 1119.1,1038.5 1144.1,1046.1 1169.1,1053.7 1194.2,1061.1 1219.3,1068.5 1244.4,1075.7 1269.6,1083.0 1294.7,1090.1 1319.9,1097.3 1345.1,1104.3 1370.3,1111.3 1395.5,1118.3 1420.7,1125.3 1445.9,1132.5 1471.1,1139.6 1496.3,1146.6 1521.5,1153.7 1546.7,1160.7 1572.0,1167.7 1597.2,1174.6 1622.4,1181.6 1647.7,1188.5 1673.0,1195.3 1698.3,1202.0 1723.6,1208.7 1748.9,1215.4 1774.2,1222.1 1799.5,1228.8 1824.8,1235.5 1850.1,1242.2 1875.5,1248.9 1900.8,1255.6 1926.0,1262.7 1951.2,1269.7 1976.4,1276.8 2001.7,1283.9 2026.9,1291.1 2052.0,1298.3 2077.3,1305.3 2102.5,1312.3 2127.8,1319.4 2153.0,1326.6 2178.1,1333.9 2203.3,1341.3 2228.4,1348.8 2253.4,1356.5 2278.4,1364.5 2303.3,1372.3 2328.3,1379.9 2353.4,1386.9 2378.7,1393.0 2404.2,1398.1 2429.9,1402.1 2455.7,1404.7 2481.6,1405.8 2507.5,1405.1 2533.2,1402.5 2558.6,1397.8 2583.5,1390.8 2607.4,1381.1 2629.9,1368.4 2650.3,1352.5 2668.6,1334.2 2685.7,1314.5 2702.7,1294.5 2720.5,1275.3 2740.3,1258.1 2740.3,1258.1 2720.5,1275.2 2702.6,1294.4 2685.6,1314.4 2668.4,1334.1 2650.1,1352.3 2629.7,1368.1 2607.3,1380.7 2583.4,1390.4 2558.5,1397.3 2533.1,1401.9 2507.4,1404.5 2481.6,1405.1 2455.7,1403.9 2430.0,1401.2 2404.4,1397.2 2378.9,1392.0 2353.7,1385.8 2328.6,1378.7 2303.7,1370.9 2278.9,1362.8 2254.0,1354.6 2229.0,1346.9 2203.8,1339.3 2178.7,1331.9 2153.5,1324.5 2128.3,1317.3 2103.1,1310.2 2077.9,1303.2 2052.6,1296.2 2027.5,1288.9 2002.3,1281.6 1977.1,1274.3 1951.9,1267.1 1926.8,1259.8 1901.6,1252.7 1876.2,1246.0 1850.9,1239.2 1825.6,1232.5 1800.3,1225.8 1775.0,1219.1 1749.7,1212.5 1724.4,1205.8 1699.0,1199.1 1673.7,1192.4 1648.5,1185.5 1623.3,1178.4 1598.1,1171.4 1572.9,1164.3 1547.7,1157.2 1522.5,1150.1 1497.3,1143.0 1472.1,1135.8 1447.0,1128.6 1421.8,1121.4 1396.6,1114.4 1371.4,1107.4 1346.2,1100.4 1321.0,1093.4 1295.8,1086.3 1270.7,1079.1 1245.6,1071.9 1220.4,1064.6 1195.3,1057.3 1170.3,1049.9 1145.2,1042.3 1120.2,1034.7 1095.2,1027.0 1070.3,1019.3 1045.3,1011.4 1020.4,1003.5 995.6,995.5 970.7,987.4 945.9,979.3 921.1,971.0 896.3,962.7 871.6,954.3 846.9,945.8 822.2,937.3 797.6,928.6 773.0,919.8 748.4,910.9 723.9,901.9 699.4,892.7 675.0,883.5 650.5,874.4 626.0,865.4 601.5,856.3 577.1,847.1 552.7,837.7 528.4,828.2 504.1,818.6 479.9,808.8 455.7,798.9 431.5,788.9 407.4,778.7 383.4,768.4 359.5,757.9 335.6,747.2 311.8,736.3 288.2,725.1 264.7,713.7 241.2,702.1 217.8,690.4 194.6,678.4 171.3,666.4 148.2,654.1 125.2,641.7 102.3,629.1 79.4,616.3Z" fill="#ccced0" stroke="#ccced0" stroke-width="0.8"/><path d="M79.4,616.3 102.3,629.1 125.2,641.7 148.2,654.1 171.3,666.4 194.6,678.4 217.8,690.4 241.2,702.1 264.7,713.7 288.2,725.1 311.8,736.3 335.6,747.2 359.5,757.9 383.4,768.4 407.4,778.7 431.5,788.9 455.7,798.9 479.9,808.8 504.1,818.6 528.4,828.2 552.7,837.7 577.1,847.1 601.5,856.3 626.0,865.4 650.5,874.4 675.0,883.5 699.4,892.7 723.9,901.9 748.4,910.9 773.0,919.8 797.6,928.6 822.2,937.3 846.9,945.8 871.6,954.3 896.3,962.7 921.1,971.0 945.9,979.3 970.7,987.4 995.6,995.5 1020.4,1003.5 1045.3,1011.4 1070.3,1019.3 1095.2,1027.0 1120.2,1034.7 1145.2,1042.3 1170.3,1049.9 1195.3,1057.3 1220.4,1064.6 1245.6,1071.9 1270.7,1079.1 1295.8,1086.3 1321.0,1093.4 1346.2,1100.4 1371.4,1107.4 1396.6,1114.4 1421.8,1121.4 1447.0,1128.6 1472.1,1135.8 1497.3,1143.0 1522.5,1150.1 1547.7,1157.2 1572.9,1164.3 1598.1,1171.4 1623.3,1178.4 1648.5,1185.5 1673.7,1192.4 1699.0,1199.1 1724.4,1205.8 1749.7,1212.5 1775.0,1219.1 1800.3,1225.8 1825.6,1232.5 1850.9,1239.2 1876.2,1246.0 1901.6,1252.7 1926.8,1259.8 1951.9,1267.1 1977.1,1274.3 2002.3,1281.6 2027.5,1288.9 2052.6,1296.2 2077.9,1303.2 2103.1,1310.2 2128.3,1317.3 2153.5,1324.5 2178.7,1331.9 2203.8,1339.3 2229.0,1346.9 2254.0,1354.6 2278.9,1362.8 2303.7,1370.9 2328.6,1378.7 2353.7,1385.8 2378.9,1392.0 2404.4,1397.2 2430.0,1401.2 2455.7,1403.9 2481.6,1405.1 2507.4,1404.5 2533.1,1401.9 2558.5,1397.3 2583.4,1390.4 2607.3,1380.7 2629.7,1368.1 2650.1,1352.3 2668.4,1334.1 2685.6,1314.4 2702.6,1294.4 2720.5,1275.2 2740.3,1258.1 2740.3,1258.1 2720.4,1275.1 2702.3,1294.2 2685.2,1314.1 2668.0,1333.7 2649.6,1351.8 2629.3,1367.5 2606.9,1380.0 2583.1,1389.5 2558.3,1396.3 2533.0,1400.9 2507.3,1403.3 2481.6,1403.9 2455.8,1402.7 2430.1,1399.9 2404.6,1395.8 2379.2,1390.5 2354.0,1384.4 2329.1,1377.1 2304.2,1369.1 2279.4,1360.9 2254.6,1352.5 2229.6,1344.7 2204.5,1337.2 2179.3,1329.7 2154.2,1322.3 2129.0,1315.1 2103.7,1308.0 2078.5,1301.0 2053.2,1294.0 2028.1,1286.5 2003.0,1279.1 1977.8,1271.7 1952.7,1264.3 1927.5,1257.0 1902.3,1249.8 1877.0,1243.0 1851.7,1236.3 1826.4,1229.6 1801.1,1222.9 1775.8,1216.2 1750.4,1209.5 1725.1,1202.8 1699.8,1196.1 1674.5,1189.4 1649.3,1182.5 1624.1,1175.4 1598.9,1168.3 1573.7,1161.1 1548.5,1153.9 1523.4,1146.8 1498.2,1139.5 1473.1,1132.3 1448.0,1125.0 1422.8,1117.7 1397.6,1110.7 1372.4,1103.7 1347.2,1096.7 1322.1,1089.7 1296.9,1082.6 1271.7,1075.5 1246.6,1068.3 1221.5,1061.0 1196.4,1053.7 1171.3,1046.3 1146.3,1038.7 1121.3,1031.1 1096.3,1023.4 1071.4,1015.7 1046.5,1007.8 1021.6,999.9 996.7,991.9 971.9,983.8 947.1,975.6 922.3,967.4 897.6,959.0 872.8,950.7 848.1,942.2 823.5,933.7 798.8,925.0 774.3,916.2 749.7,907.3 725.2,898.3 700.8,889.2 676.4,880.0 651.9,871.0 627.3,862.2 602.8,853.3 578.3,844.2 553.9,835.0 529.5,825.6 505.1,816.1 480.9,806.5 456.6,796.7 432.4,786.9 408.3,776.9 384.2,766.7 360.2,756.4 336.2,745.9 312.4,735.1 288.8,723.9 265.2,712.6 241.7,701.1 218.3,689.5 195.0,677.6 171.7,665.6 148.6,653.5 125.5,641.1 102.5,628.6 79.6,615.9Z" fill="#d5d6d8" stroke="#d5d6d8" stroke-width="0.8"/><path d="M79.6,615.9 102.5,628.6 125.5,641.1 148.6,653.5 171.7,665.6 195.0,677.6 218.3,689.5 241.7,701.1 265.2,712.6 288.8,723.9 312.4,735.1 336.2,745.9 360.2,756.4 384.2,766.7 408.3,776.9 432.4,786.9 456.6,796.7 480.9,806.5 505.1,816.1 529.5,825.6 553.9,835.0 578.3,844.2 602.8,853.3 627.3,862.2 651.9,871.0 676.4,880.0 700.8,889.2 725.2,898.3 749.7,907.3 774.3,916.2 798.8,925.0 823.5,933.7 848.1,942.2 872.8,950.7 897.6,959.0 922.3,967.4 947.1,975.6 971.9,983.8 996.7,991.9 1021.6,999.9 1046.5,1007.8 1071.4,1015.7 1096.3,1023.4 1121.3,1031.1 1146.3,1038.7 1171.3,1046.3 1196.4,1053.7 1221.5,1061.0 1246.6,1068.3 1271.7,1075.5 1296.9,1082.6 1322.1,1089.7 1347.2,1096.7 1372.4,1103.7 1397.6,1110.7 1422.8,1117.7 1448.0,1125.0 1473.1,1132.3 1498.2,1139.5 1523.4,1146.8 1548.5,1153.9 1573.7,1161.1 1598.9,1168.3 1624.1,1175.4 1649.3,1182.5 1674.5,1189.4 1699.8,1196.1 1725.1,1202.8 1750.4,1209.5 1775.8,1216.2 1801.1,1222.9 1826.4,1229.6 1851.7,1236.3 1877.0,1243.0 1902.3,1249.8 1927.5,1257.0 1952.7,1264.3 1977.8,1271.7 2003.0,1279.1 2028.1,1286.5 2053.2,1294.0 2078.5,1301.0 2103.7,1308.0 2129.0,1315.1 2154.2,1322.3 2179.3,1329.7 2204.5,1337.2 2229.6,1344.7 2254.6,1352.5 2279.4,1360.9 2304.2,1369.1 2329.1,1377.1 2354.0,1384.4 2379.2,1390.5 2404.6,1395.8 2430.1,1399.9 2455.8,1402.7 2481.6,1403.9 2507.3,1403.3 2533.0,1400.9 2558.3,1396.3 2583.1,1389.5 2606.9,1380.0 2629.3,1367.5 2649.6,1351.8 2668.0,1333.7 2685.2,1314.1 2702.3,1294.2 2720.4,1275.1 2740.3,1258.1 2740.3,1258.1 2720.2,1275.0 2702.1,1294.0 2684.9,1313.8 2667.6,1333.3 2649.1,1351.3 2628.8,1366.9 2606.5,1379.2 2582.7,1388.6 2558.1,1395.4 2532.8,1399.8 2507.3,1402.2 2481.6,1402.7 2455.9,1401.4 2430.3,1398.6 2404.8,1394.4 2379.5,1389.1 2354.4,1382.9 2329.5,1375.5 2304.7,1367.3 2280.0,1358.9 2255.3,1350.4 2230.2,1342.6 2205.1,1335.0 2180.0,1327.5 2154.8,1320.1 2129.6,1312.9 2104.4,1305.8 2079.1,1298.7 2053.9,1291.7 2028.8,1284.2 2003.6,1276.6 1978.5,1269.1 1953.4,1261.6 1928.3,1254.2 1903.1,1246.8 1877.8,1240.1 1852.5,1233.4 1827.2,1226.7 1801.9,1220.0 1776.5,1213.3 1751.2,1206.6 1725.9,1199.9 1700.6,1193.2 1675.3,1186.5 1650.1,1179.5 1624.9,1172.3 1599.7,1165.1 1574.6,1157.9 1549.4,1150.7 1524.3,1143.4 1499.2,1136.1 1474.0,1128.8 1448.9,1121.4 1423.9,1114.0 1398.7,1107.0 1373.5,1100.0 1348.3,1093.1 1323.1,1086.0 1297.9,1079.0 1272.8,1071.8 1247.6,1064.7 1222.5,1057.4 1197.4,1050.1 1172.4,1042.7 1147.4,1035.1 1122.4,1027.5 1097.5,1019.8 1072.5,1012.1 1047.6,1004.2 1022.7,996.3 997.9,988.3 973.1,980.2 948.3,972.0 923.5,963.7 898.8,955.4 874.1,947.0 849.4,938.6 824.7,930.1 800.1,921.4 775.6,912.7 751.0,903.8 726.5,894.8 702.1,885.7 677.7,876.5 653.2,867.6 628.6,859.0 604.0,850.2 579.5,841.2 555.0,832.2 530.6,823.0 506.2,813.6 481.9,804.1 457.6,794.6 433.3,784.9 409.1,775.0 385.0,765.0 360.9,754.9 336.9,744.5 313.0,733.9 289.3,722.8 265.7,711.6 242.2,700.2 218.8,688.6 195.4,676.8 172.1,664.9 148.9,652.8 125.8,640.6 102.8,628.1 79.9,615.5Z" fill="#dee0e2" stroke="#dee0e2" stroke-width="0.8"/><path d="M79.9,615.5 102.8,628.1 125.8,640.6 148.9,652.8 172.1,664.9 195.4,676.8 218.8,688.6 242.2,700.2 265.7,711.6 289.3,722.8 313.0,733.9 336.9,744.5 360.9,754.9 385.0,765.0 409.1,775.0 433.3,784.9 457.6,794.6 481.9,804.1 506.2,813.6 530.6,823.0 555.0,832.2 579.5,841.2 604.0,850.2 628.6,859.0 653.2,867.6 677.7,876.5 702.1,885.7 726.5,894.8 751.0,903.8 775.6,912.7 800.1,921.4 824.7,930.1 849.4,938.6 874.1,947.0 898.8,955.4 923.5,963.7 948.3,972.0 973.1,980.2 997.9,988.3 1022.7,996.3 1047.6,1004.2 1072.5,1012.1 1097.5,1019.8 1122.4,1027.5 1147.4,1035.1 1172.4,1042.7 1197.4,1050.1 1222.5,1057.4 1247.6,1064.7 1272.8,1071.8 1297.9,1079.0 1323.1,1086.0 1348.3,1093.1 1373.5,1100.0 1398.7,1107.0 1423.9,1114.0 1448.9,1121.4 1474.0,1128.8 1499.2,1136.1 1524.3,1143.4 1549.4,1150.7 1574.6,1157.9 1599.7,1165.1 1624.9,1172.3 1650.1,1179.5 1675.3,1186.5 1700.6,1193.2 1725.9,1199.9 1751.2,1206.6 1776.5,1213.3 1801.9,1220.0 1827.2,1226.7 1852.5,1233.4 1877.8,1240.1 1903.1,1246.8 1928.3,1254.2 1953.4,1261.6 1978.5,1269.1 2003.6,1276.6 2028.8,1284.2 2053.9,1291.7 2079.1,1298.7 2104.4,1305.8 2129.6,1312.9 2154.8,1320.1 2180.0,1327.5 2205.1,1335.0 2230.2,1342.6 2255.3,1350.4 2280.0,1358.9 2304.7,1367.3 2329.5,1375.5 2354.4,1382.9 2379.5,1389.1 2404.8,1394.4 2430.3,1398.6 2455.9,1401.4 2481.6,1402.7 2507.3,1402.2 2532.8,1399.8 2558.1,1395.4 2582.7,1388.6 2606.5,1379.2 2628.8,1366.9 2649.1,1351.3 2667.6,1333.3 2684.9,1313.8 2702.1,1294.0 2720.2,1275.0 2740.3,1258.1 2740.3,1258.1 2720.1,1274.9 2701.8,1293.8 2684.6,1313.5 2667.2,1332.9 2648.7,1350.8 2628.4,1366.2 2606.1,1378.5 2582.4,1387.8 2557.8,1394.4 2532.7,1398.7 2507.2,1401.0 2481.6,1401.4 2456.0,1400.1 2430.5,1397.3 2405.1,1393.1 2379.8,1387.7 2354.7,1381.5 2329.9,1373.9 2305.3,1365.6 2280.6,1357.0 2255.9,1348.3 2230.9,1340.4 2205.8,1332.8 2180.6,1325.3 2155.5,1317.8 2130.2,1310.6 2105.0,1303.5 2079.7,1296.5 2054.5,1289.5 2029.4,1281.8 2004.3,1274.1 1979.2,1266.5 1954.1,1258.9 1929.0,1251.4 1903.9,1243.9 1878.6,1237.2 1853.3,1230.4 1827.9,1223.7 1802.6,1217.0 1777.3,1210.3 1752.0,1203.7 1726.7,1197.0 1701.4,1190.3 1676.1,1183.6 1650.9,1176.5 1625.7,1169.3 1600.6,1162.0 1575.4,1154.7 1550.3,1147.4 1525.2,1140.0 1500.1,1132.6 1475.0,1125.2 1449.9,1117.8 1424.9,1110.3 1399.7,1103.3 1374.5,1096.3 1349.3,1089.4 1324.1,1082.4 1299.0,1075.3 1273.8,1068.2 1248.7,1061.0 1223.6,1053.8 1198.5,1046.5 1173.5,1039.1 1148.5,1031.6 1123.5,1023.9 1098.6,1016.2 1073.6,1008.4 1048.7,1000.6 1023.9,992.7 999.1,984.6 974.3,976.5 949.5,968.4 924.7,960.1 900.0,951.7 875.3,943.4 850.6,935.0 826.0,926.5 801.4,917.8 776.8,909.1 752.3,900.2 727.9,891.3 703.4,882.2 679.0,873.0 654.5,864.2 629.8,855.7 605.2,847.1 580.7,838.3 556.2,829.4 531.7,820.3 507.3,811.1 482.9,801.8 458.5,792.4 434.2,782.9 410.0,773.2 385.8,763.4 361.6,753.3 337.5,743.2 313.6,732.6 289.9,721.7 266.3,710.5 242.7,699.2 219.2,687.7 195.8,676.0 172.5,664.2 149.3,652.2 126.2,640.0 103.1,627.6 80.1,615.1Z" fill="#e7e9eb" stroke="#e7e9eb" stroke-width="0.8"/><path d="M80.1,615.1 103.1,627.6 126.2,640.0 149.3,652.2 172.5,664.2 195.8,676.0 219.2,687.7 242.7,699.2 266.3,710.5 289.9,721.7 313.6,732.6 337.5,743.2 361.6,753.3 385.8,763.4 410.0,773.2 434.2,782.9 458.5,792.4 482.9,801.8 507.3,811.1 531.7,820.3 556.2,829.4 580.7,838.3 605.2,847.1 629.8,855.7 654.5,864.2 679.0,873.0 703.4,882.2 727.9,891.3 752.3,900.2 776.8,909.1 801.4,917.8 826.0,926.5 850.6,935.0 875.3,943.4 900.0,951.7 924.7,960.1 949.5,968.4 974.3,976.5 999.1,984.6 1023.9,992.7 1048.7,1000.6 1073.6,1008.4 1098.6,1016.2 1123.5,1023.9 1148.5,1031.6 1173.5,1039.1 1198.5,1046.5 1223.6,1053.8 1248.7,1061.0 1273.8,1068.2 1299.0,1075.3 1324.1,1082.4 1349.3,1089.4 1374.5,1096.3 1399.7,1103.3 1424.9,1110.3 1449.9,1117.8 1475.0,1125.2 1500.1,1132.6 1525.2,1140.0 1550.3,1147.4 1575.4,1154.7 1600.6,1162.0 1625.7,1169.3 1650.9,1176.5 1676.1,1183.6 1701.4,1190.3 1726.7,1197.0 1752.0,1203.7 1777.3,1210.3 1802.6,1217.0 1827.9,1223.7 1853.3,1230.4 1878.6,1237.2 1903.9,1243.9 1929.0,1251.4 1954.1,1258.9 1979.2,1266.5 2004.3,1274.1 2029.4,1281.8 2054.5,1289.5 2079.7,1296.5 2105.0,1303.5 2130.2,1310.6 2155.5,1317.8 2180.6,1325.3 2205.8,1332.8 2230.9,1340.4 2255.9,1348.3 2280.6,1357.0 2305.3,1365.6 2329.9,1373.9 2354.7,1381.5 2379.8,1387.7 2405.1,1393.1 2430.5,1397.3 2456.0,1400.1 2481.6,1401.4 2507.2,1401.0 2532.7,1398.7 2557.8,1394.4 2582.4,1387.8 2606.1,1378.5 2628.4,1366.2 2648.7,1350.8 2667.2,1332.9 2684.6,1313.5 2701.8,1293.8 2720.1,1274.9 2740.3,1258.1 2740.3,1258.1 2720.1,1274.8 2701.7,1293.7 2684.4,1313.4 2667.0,1332.7 2648.4,1350.5 2628.2,1365.9 2605.9,1378.0 2582.3,1387.3 2557.7,1393.8 2532.6,1398.1 2507.1,1400.4 2481.6,1400.8 2456.0,1399.4 2430.5,1396.5 2405.2,1392.3 2380.0,1386.9 2354.9,1380.6 2330.2,1372.9 2305.5,1364.6 2280.9,1355.9 2256.3,1347.1 2231.2,1339.2 2206.1,1331.6 2181.0,1324.0 2155.8,1316.5 2130.6,1309.3 2105.4,1302.2 2080.1,1295.2 2054.8,1288.2 2029.8,1280.4 2004.7,1272.7 1979.6,1265.0 1954.5,1257.4 1929.4,1249.8 1904.3,1242.2 1879.0,1235.5 1853.7,1228.8 1828.4,1222.1 1803.1,1215.4 1777.8,1208.7 1752.4,1202.0 1727.1,1195.3 1701.8,1188.6 1676.5,1181.9 1651.3,1174.8 1626.2,1167.5 1601.0,1160.2 1575.9,1152.8 1550.8,1145.5 1525.7,1138.1 1500.6,1130.7 1475.6,1123.2 1450.5,1115.7 1425.4,1108.2 1400.3,1101.1 1375.1,1094.2 1349.9,1087.3 1324.7,1080.3 1299.6,1073.2 1274.4,1066.1 1249.3,1059.0 1224.2,1051.8 1199.1,1044.5 1174.1,1037.1 1149.1,1029.5 1124.1,1021.9 1099.2,1014.2 1074.3,1006.4 1049.4,998.5 1024.5,990.6 999.7,982.6 974.9,974.5 950.2,966.3 925.4,958.0 900.7,949.7 876.0,941.3 851.4,932.9 826.7,924.4 802.1,915.8 777.6,907.1 753.1,898.2 728.6,889.3 704.2,880.2 679.8,871.0 655.3,862.3 630.6,853.9 605.9,845.3 581.4,836.6 556.8,827.8 532.3,818.8 507.9,809.7 483.5,800.5 459.1,791.2 434.7,781.8 410.4,772.2 386.2,762.4 362.0,752.5 337.9,742.4 314.0,731.9 290.2,721.0 266.6,709.9 243.0,698.6 219.5,687.2 196.1,675.6 172.7,663.8 149.5,651.8 126.3,639.7 103.3,627.3 80.2,614.9Z" fill="#eef0f1" stroke="#eef0f1" stroke-width="0.8"/><path d="M80.2,614.9 103.3,627.3 126.3,639.7 149.5,651.8 172.7,663.8 196.1,675.6 219.5,687.2 243.0,698.6 266.6,709.9 290.2,721.0 314.0,731.9 337.9,742.4 362.0,752.5 386.2,762.4 410.4,772.2 434.7,781.8 459.1,791.2 483.5,800.5 507.9,809.7 532.3,818.8 556.8,827.8 581.4,836.6 605.9,845.3 630.6,853.9 655.3,862.3 679.8,871.0 704.2,880.2 728.6,889.3 753.1,898.2 777.6,907.1 802.1,915.8 826.7,924.4 851.4,932.9 876.0,941.3 900.7,949.7 925.4,958.0 950.2,966.3 974.9,974.5 999.7,982.6 1024.5,990.6 1049.4,998.5 1074.3,1006.4 1099.2,1014.2 1124.1,1021.9 1149.1,1029.5 1174.1,1037.1 1199.1,1044.5 1224.2,1051.8 1249.3,1059.0 1274.4,1066.1 1299.6,1073.2 1324.7,1080.3 1349.9,1087.3 1375.1,1094.2 1400.3,1101.1 1425.4,1108.2 1450.5,1115.7 1475.6,1123.2 1500.6,1130.7 1525.7,1138.1 1550.8,1145.5 1575.9,1152.8 1601.0,1160.2 1626.2,1167.5 1651.3,1174.8 1676.5,1181.9 1701.8,1188.6 1727.1,1195.3 1752.4,1202.0 1777.8,1208.7 1803.1,1215.4 1828.4,1222.1 1853.7,1228.8 1879.0,1235.5 1904.3,1242.2 1929.4,1249.8 1954.5,1257.4 1979.6,1265.0 2004.7,1272.7 2029.8,1280.4 2054.8,1288.2 2080.1,1295.2 2105.4,1302.2 2130.6,1309.3 2155.8,1316.5 2181.0,1324.0 2206.1,1331.6 2231.2,1339.2 2256.3,1347.1 2280.9,1355.9 2305.5,1364.6 2330.2,1372.9 2354.9,1380.6 2380.0,1386.9 2405.2,1392.3 2430.5,1396.5 2456.0,1399.4 2481.6,1400.8 2507.1,1400.4 2532.6,1398.1 2557.7,1393.8 2582.3,1387.3 2605.9,1378.0 2628.2,1365.9 2648.4,1350.5 2667.0,1332.7 2684.4,1313.4 2701.7,1293.7 2720.1,1274.8 2740.3,1258.1 2740.3,1258.1 2720.0,1274.7 2701.5,1293.5 2684.2,1313.2 2666.7,1332.5 2648.1,1350.2 2627.9,1365.5 2605.7,1377.6 2582.1,1386.8 2557.5,1393.2 2532.5,1397.5 2507.1,1399.7 2481.6,1400.1 2456.1,1398.7 2430.6,1395.7 2405.3,1391.5 2380.2,1386.1 2355.1,1379.8 2330.4,1372.0 2305.8,1363.6 2281.3,1354.8 2256.6,1345.9 2231.6,1338.0 2206.5,1330.3 2181.4,1322.7 2156.2,1315.2 2131.0,1308.0 2105.7,1300.9 2080.5,1293.9 2055.2,1286.9 2030.1,1279.1 2005.1,1271.3 1980.0,1263.5 1955.0,1255.8 1929.9,1248.1 1904.8,1240.5 1879.5,1233.8 1854.2,1227.1 1828.8,1220.4 1803.5,1213.7 1778.2,1207.0 1752.9,1200.3 1727.6,1193.6 1702.3,1186.9 1677.0,1180.2 1651.8,1173.1 1626.6,1165.8 1601.5,1158.4 1576.4,1151.0 1551.3,1143.6 1526.2,1136.2 1501.2,1128.7 1476.1,1121.2 1451.1,1113.7 1426.0,1106.1 1400.9,1099.0 1375.7,1092.1 1350.5,1085.2 1325.3,1078.2 1300.2,1071.2 1275.0,1064.1 1249.9,1056.9 1224.8,1049.7 1199.7,1042.4 1174.7,1035.0 1149.7,1027.5 1124.8,1019.8 1099.8,1012.1 1074.9,1004.3 1050.0,996.5 1025.2,988.5 1000.4,980.5 975.6,972.4 950.9,964.2 926.1,955.9 901.4,947.6 876.7,939.3 852.1,930.9 827.4,922.4 802.9,913.8 778.3,905.0 753.8,896.2 729.4,887.3 704.9,878.2 680.6,869.0 656.0,860.4 631.3,852.0 606.7,843.6 582.0,835.0 557.5,826.2 533.0,817.3 508.5,808.3 484.0,799.1 459.6,790.0 435.2,780.6 410.9,771.1 386.6,761.4 362.4,751.6 338.3,741.6 314.3,731.2 290.6,720.4 266.9,709.3 243.3,698.1 219.8,686.7 196.3,675.1 173.0,663.4 149.7,651.4 126.5,639.4 103.4,627.1 80.4,614.6Z" fill="#f1f2f4" stroke="#f1f2f4" stroke-width="0.8"/><path d="M80.4,614.6 103.4,627.1 126.5,639.4 149.7,651.4 173.0,663.4 196.3,675.1 219.8,686.7 243.3,698.1 266.9,709.3 290.6,720.4 314.3,731.2 338.3,741.6 362.4,751.6 386.6,761.4 410.9,771.1 435.2,780.6 459.6,790.0 484.0,799.1 508.5,808.3 533.0,817.3 557.5,826.2 582.0,835.0 606.7,843.6 631.3,852.0 656.0,860.4 680.6,869.0 704.9,878.2 729.4,887.3 753.8,896.2 778.3,905.0 802.9,913.8 827.4,922.4 852.1,930.9 876.7,939.3 901.4,947.6 926.1,955.9 950.9,964.2 975.6,972.4 1000.4,980.5 1025.2,988.5 1050.0,996.5 1074.9,1004.3 1099.8,1012.1 1124.8,1019.8 1149.7,1027.5 1174.7,1035.0 1199.7,1042.4 1224.8,1049.7 1249.9,1056.9 1275.0,1064.1 1300.2,1071.2 1325.3,1078.2 1350.5,1085.2 1375.7,1092.1 1400.9,1099.0 1426.0,1106.1 1451.1,1113.7 1476.1,1121.2 1501.2,1128.7 1526.2,1136.2 1551.3,1143.6 1576.4,1151.0 1601.5,1158.4 1626.6,1165.8 1651.8,1173.1 1677.0,1180.2 1702.3,1186.9 1727.6,1193.6 1752.9,1200.3 1778.2,1207.0 1803.5,1213.7 1828.8,1220.4 1854.2,1227.1 1879.5,1233.8 1904.8,1240.5 1929.9,1248.1 1955.0,1255.8 1980.0,1263.5 2005.1,1271.3 2030.1,1279.1 2055.2,1286.9 2080.5,1293.9 2105.7,1300.9 2131.0,1308.0 2156.2,1315.2 2181.4,1322.7 2206.5,1330.3 2231.6,1338.0 2256.6,1345.9 2281.3,1354.8 2305.8,1363.6 2330.4,1372.0 2355.1,1379.8 2380.2,1386.1 2405.3,1391.5 2430.6,1395.7 2456.1,1398.7 2481.6,1400.1 2507.1,1399.7 2532.5,1397.5 2557.5,1393.2 2582.1,1386.8 2605.7,1377.6 2627.9,1365.5 2648.1,1350.2 2666.7,1332.5 2684.2,1313.2 2701.5,1293.5 2720.0,1274.7 2740.3,1258.1 2740.3,1258.1 2719.9,1274.7 2701.4,1293.4 2684.0,1313.0 2666.5,1332.3 2647.9,1349.9 2627.7,1365.2 2605.5,1377.2 2581.9,1386.3 2557.4,1392.7 2532.4,1396.9 2507.0,1399.1 2481.6,1399.4 2456.1,1397.9 2430.7,1395.0 2405.5,1390.7 2380.4,1385.3 2355.4,1379.0 2330.7,1371.1 2306.1,1362.6 2281.6,1353.7 2257.0,1344.7 2232.0,1336.7 2206.9,1329.1 2181.7,1321.5 2156.6,1314.0 2131.3,1306.8 2106.1,1299.7 2080.8,1292.6 2055.5,1285.6 2030.5,1277.7 2005.5,1269.9 1980.4,1262.1 1955.4,1254.3 1930.3,1246.5 1905.2,1238.9 1879.9,1232.1 1854.6,1225.4 1829.3,1218.7 1804.0,1212.0 1778.6,1205.3 1753.3,1198.6 1728.0,1191.9 1702.7,1185.2 1677.4,1178.5 1652.2,1171.4 1627.1,1164.0 1602.0,1156.6 1576.9,1149.2 1551.8,1141.7 1526.8,1134.2 1501.7,1126.7 1476.7,1119.2 1451.6,1111.6 1426.6,1104.0 1401.5,1096.9 1376.3,1090.0 1351.1,1083.1 1325.9,1076.1 1300.7,1069.1 1275.6,1062.0 1250.5,1054.9 1225.4,1047.7 1200.3,1040.4 1175.3,1033.0 1150.3,1025.4 1125.4,1017.8 1100.5,1010.0 1075.6,1002.3 1050.7,994.4 1025.9,986.4 1001.1,978.4 976.3,970.3 951.5,962.1 926.8,953.8 902.1,945.5 877.4,937.2 852.8,928.8 828.2,920.3 803.6,911.7 779.1,903.0 754.6,894.2 730.1,885.2 705.7,876.2 681.3,867.0 656.8,858.4 632.0,850.2 607.4,841.8 582.7,833.3 558.1,824.6 533.6,815.8 509.1,806.9 484.6,797.8 460.2,788.7 435.7,779.5 411.4,770.1 387.1,760.5 362.8,750.8 338.6,740.9 314.6,730.5 290.9,719.7 267.2,708.7 243.6,697.5 220.0,686.2 196.6,674.7 173.2,663.0 149.9,651.1 126.7,639.0 103.6,626.8 80.5,614.4Z" fill="#f4f6f7" stroke="#f4f6f7" stroke-width="0.8"/><path d="M80.5,614.4 103.6,626.8 126.7,639.0 149.9,651.1 173.2,663.0 196.6,674.7 220.0,686.2 243.6,697.5 267.2,708.7 290.9,719.7 314.6,730.5 338.6,740.9 362.8,750.8 387.1,760.5 411.4,770.1 435.7,779.5 460.2,788.7 484.6,797.8 509.1,806.9 533.6,815.8 558.1,824.6 582.7,833.3 607.4,841.8 632.0,850.2 656.8,858.4 681.3,867.0 705.7,876.2 730.1,885.2 754.6,894.2 779.1,903.0 803.6,911.7 828.2,920.3 852.8,928.8 877.4,937.2 902.1,945.5 926.8,953.8 951.5,962.1 976.3,970.3 1001.1,978.4 1025.9,986.4 1050.7,994.4 1075.6,1002.3 1100.5,1010.0 1125.4,1017.8 1150.3,1025.4 1175.3,1033.0 1200.3,1040.4 1225.4,1047.7 1250.5,1054.9 1275.6,1062.0 1300.7,1069.1 1325.9,1076.1 1351.1,1083.1 1376.3,1090.0 1401.5,1096.9 1426.6,1104.0 1451.6,1111.6 1476.7,1119.2 1501.7,1126.7 1526.8,1134.2 1551.8,1141.7 1576.9,1149.2 1602.0,1156.6 1627.1,1164.0 1652.2,1171.4 1677.4,1178.5 1702.7,1185.2 1728.0,1191.9 1753.3,1198.6 1778.6,1205.3 1804.0,1212.0 1829.3,1218.7 1854.6,1225.4 1879.9,1232.1 1905.2,1238.9 1930.3,1246.5 1955.4,1254.3 1980.4,1262.1 2005.5,1269.9 2030.5,1277.7 2055.5,1285.6 2080.8,1292.6 2106.1,1299.7 2131.3,1306.8 2156.6,1314.0 2181.7,1321.5 2206.9,1329.1 2232.0,1336.7 2257.0,1344.7 2281.6,1353.7 2306.1,1362.6 2330.7,1371.1 2355.4,1379.0 2380.4,1385.3 2405.5,1390.7 2430.7,1395.0 2456.1,1397.9 2481.6,1399.4 2507.0,1399.1 2532.4,1396.9 2557.4,1392.7 2581.9,1386.3 2605.5,1377.2 2627.7,1365.2 2647.9,1349.9 2666.5,1332.3 2684.0,1313.0 2701.4,1293.4 2719.9,1274.7 2740.3,1258.1 2740.3,1258.1 2719.8,1274.5 2701.2,1293.2 2683.6,1312.7 2666.0,1331.8 2647.3,1349.2 2627.0,1364.2 2604.9,1376.0 2581.4,1384.8 2557.0,1391.0 2532.1,1395.0 2506.9,1397.1 2481.6,1397.3 2456.3,1395.8 2431.0,1392.9 2405.8,1388.6 2380.8,1383.2 2355.9,1376.9 2331.2,1369.1 2306.7,1360.6 2282.2,1351.8 2257.5,1342.8 2232.5,1334.9 2207.4,1327.2 2182.2,1319.7 2157.1,1312.2 2131.8,1305.0 2106.6,1297.9 2081.3,1290.8 2056.0,1283.9 2031.0,1276.0 2005.9,1268.2 1980.9,1260.4 1955.8,1252.6 1930.8,1244.9 1905.7,1237.2 1880.3,1230.5 1855.0,1223.8 1829.7,1217.1 1804.4,1210.4 1779.1,1203.7 1753.7,1197.0 1728.4,1190.4 1703.1,1183.7 1677.8,1177.0 1652.6,1169.9 1627.5,1162.5 1602.4,1155.1 1577.3,1147.7 1552.2,1140.3 1527.1,1132.8 1502.1,1125.4 1477.0,1117.8 1452.0,1110.3 1427.0,1102.7 1401.8,1095.7 1376.6,1088.8 1351.4,1081.9 1326.2,1074.9 1301.1,1067.9 1275.9,1060.8 1250.8,1053.7 1225.7,1046.5 1200.6,1039.3 1175.6,1031.9 1150.6,1024.4 1125.7,1016.7 1100.8,1009.1 1075.9,1001.3 1051.0,993.5 1026.1,985.6 1001.3,977.6 976.6,969.5 951.8,961.3 927.1,953.0 902.4,944.8 877.7,936.5 853.0,928.1 828.4,919.6 803.8,911.1 779.3,902.4 754.8,893.6 730.3,884.7 705.9,875.7 681.5,866.5 656.9,858.0 632.2,849.7 607.5,841.4 582.9,832.9 558.3,824.2 533.8,815.4 509.2,806.5 484.8,797.5 460.3,788.4 435.9,779.1 411.5,769.7 387.2,760.2 363.0,750.5 338.8,740.6 314.8,730.3 291.0,719.5 267.3,708.5 243.7,697.3 220.1,686.0 196.6,674.5 173.3,662.8 150.0,651.0 126.7,639.0 103.6,626.8 80.5,614.4Z" fill="#f5f6f7" stroke="#f5f6f7" stroke-width="0.8"/><path d="M80.5,614.4 103.6,626.8 126.7,639.0 150.0,651.0 173.3,662.8 196.6,674.5 220.1,686.0 243.7,697.3 267.3,708.5 291.0,719.5 314.8,730.3 338.8,740.6 363.0,750.5 387.2,760.2 411.5,769.7 435.9,779.1 460.3,788.4 484.8,797.5 509.2,806.5 533.8,815.4 558.3,824.2 582.9,832.9 607.5,841.4 632.2,849.7 656.9,858.0 681.5,866.5 705.9,875.7 730.3,884.7 754.8,893.6 779.3,902.4 803.8,911.1 828.4,919.6 853.0,928.1 877.7,936.5 902.4,944.8 927.1,953.0 951.8,961.3 976.6,969.5 1001.3,977.6 1026.1,985.6 1051.0,993.5 1075.9,1001.3 1100.8,1009.1 1125.7,1016.7 1150.6,1024.4 1175.6,1031.9 1200.6,1039.3 1225.7,1046.5 1250.8,1053.7 1275.9,1060.8 1301.1,1067.9 1326.2,1074.9 1351.4,1081.9 1376.6,1088.8 1401.8,1095.7 1427.0,1102.7 1452.0,1110.3 1477.0,1117.8 1502.1,1125.4 1527.1,1132.8 1552.2,1140.3 1577.3,1147.7 1602.4,1155.1 1627.5,1162.5 1652.6,1169.9 1677.8,1177.0 1703.1,1183.7 1728.4,1190.4 1753.7,1197.0 1779.1,1203.7 1804.4,1210.4 1829.7,1217.1 1855.0,1223.8 1880.3,1230.5 1905.7,1237.2 1930.8,1244.9 1955.8,1252.6 1980.9,1260.4 2005.9,1268.2 2031.0,1276.0 2056.0,1283.9 2081.3,1290.8 2106.6,1297.9 2131.8,1305.0 2157.1,1312.2 2182.2,1319.7 2207.4,1327.2 2232.5,1334.9 2257.5,1342.8 2282.2,1351.8 2306.7,1360.6 2331.2,1369.1 2355.9,1376.9 2380.8,1383.2 2405.8,1388.6 2431.0,1392.9 2456.3,1395.8 2481.6,1397.3 2506.9,1397.1 2532.1,1395.0 2557.0,1391.0 2581.4,1384.8 2604.9,1376.0 2627.0,1364.2 2647.3,1349.2 2666.0,1331.8 2683.6,1312.7 2701.2,1293.2 2719.8,1274.5 2740.3,1258.1 2740.3,1258.1 2719.7,1274.4 2700.9,1293.0 2683.2,1312.4 2665.4,1331.3 2646.6,1348.5 2626.4,1363.2 2604.3,1374.7 2580.9,1383.4 2556.6,1389.4 2531.8,1393.2 2506.8,1395.2 2481.6,1395.3 2456.4,1393.8 2431.3,1390.8 2406.2,1386.5 2381.3,1381.1 2356.4,1374.8 2331.8,1367.1 2307.3,1358.6 2282.7,1349.8 2258.1,1340.9 2233.1,1333.0 2207.9,1325.4 2182.8,1317.9 2157.6,1310.4 2132.3,1303.2 2107.1,1296.1 2081.8,1289.1 2056.5,1282.1 2031.5,1274.3 2006.4,1266.4 1981.3,1258.7 1956.3,1250.9 1931.2,1243.2 1906.1,1235.6 1880.8,1228.9 1855.5,1222.2 1830.1,1215.5 1804.8,1208.8 1779.5,1202.1 1754.2,1195.5 1728.8,1188.8 1703.5,1182.1 1678.2,1175.5 1653.0,1168.4 1627.9,1161.0 1602.8,1153.7 1577.7,1146.3 1552.6,1138.9 1527.5,1131.4 1502.4,1124.0 1477.4,1116.5 1452.3,1109.0 1427.3,1101.5 1402.2,1094.4 1376.9,1087.6 1351.8,1080.7 1326.6,1073.7 1301.4,1066.7 1276.3,1059.7 1251.2,1052.6 1226.0,1045.4 1201.0,1038.2 1175.9,1030.8 1151.0,1023.3 1126.0,1015.7 1101.1,1008.1 1076.2,1000.3 1051.3,992.5 1026.4,984.7 1001.6,976.7 976.8,968.6 952.1,960.5 927.4,952.3 902.6,944.0 877.9,935.8 853.3,927.4 828.6,919.0 804.0,910.4 779.5,901.8 755.0,893.0 730.5,884.2 706.1,875.2 681.7,866.1 657.1,857.5 632.4,849.3 607.7,840.9 583.1,832.4 558.5,823.8 533.9,815.0 509.4,806.1 484.9,797.1 460.5,788.0 436.1,778.8 411.7,769.4 387.4,759.9 363.1,750.2 338.9,740.3 314.9,730.0 291.1,719.2 267.4,708.3 243.8,697.1 220.2,685.8 196.7,674.4 173.3,662.7 150.0,650.9 126.8,638.9 103.6,626.7 80.5,614.4Z" fill="#f2f4f5" stroke="#f2f4f5" stroke-width="0.8"/><path d="M80.5,614.4 103.6,626.7 126.8,638.9 150.0,650.9 173.3,662.7 196.7,674.4 220.2,685.8 243.8,697.1 267.4,708.3 291.1,719.2 314.9,730.0 338.9,740.3 363.1,750.2 387.4,759.9 411.7,769.4 436.1,778.8 460.5,788.0 484.9,797.1 509.4,806.1 533.9,815.0 558.5,823.8 583.1,832.4 607.7,840.9 632.4,849.3 657.1,857.5 681.7,866.1 706.1,875.2 730.5,884.2 755.0,893.0 779.5,901.8 804.0,910.4 828.6,919.0 853.3,927.4 877.9,935.8 902.6,944.0 927.4,952.3 952.1,960.5 976.8,968.6 1001.6,976.7 1026.4,984.7 1051.3,992.5 1076.2,1000.3 1101.1,1008.1 1126.0,1015.7 1151.0,1023.3 1175.9,1030.8 1201.0,1038.2 1226.0,1045.4 1251.2,1052.6 1276.3,1059.7 1301.4,1066.7 1326.6,1073.7 1351.8,1080.7 1376.9,1087.6 1402.2,1094.4 1427.3,1101.5 1452.3,1109.0 1477.4,1116.5 1502.4,1124.0 1527.5,1131.4 1552.6,1138.9 1577.7,1146.3 1602.8,1153.7 1627.9,1161.0 1653.0,1168.4 1678.2,1175.5 1703.5,1182.1 1728.8,1188.8 1754.2,1195.5 1779.5,1202.1 1804.8,1208.8 1830.1,1215.5 1855.5,1222.2 1880.8,1228.9 1906.1,1235.6 1931.2,1243.2 1956.3,1250.9 1981.3,1258.7 2006.4,1266.4 2031.5,1274.3 2056.5,1282.1 2081.8,1289.1 2107.1,1296.1 2132.3,1303.2 2157.6,1310.4 2182.8,1317.9 2207.9,1325.4 2233.1,1333.0 2258.1,1340.9 2282.7,1349.8 2307.3,1358.6 2331.8,1367.1 2356.4,1374.8 2381.3,1381.1 2406.2,1386.5 2431.3,1390.8 2456.4,1393.8 2481.6,1395.3 2506.8,1395.2 2531.8,1393.2 2556.6,1389.4 2580.9,1383.4 2604.3,1374.7 2626.4,1363.2 2646.6,1348.5 2665.4,1331.3 2683.2,1312.4 2700.9,1293.0 2719.7,1274.4 2740.3,1258.1 2740.3,1258.1 2719.5,1274.3 2700.6,1292.8 2682.8,1312.1 2664.9,1330.9 2646.0,1347.8 2625.7,1362.3 2603.7,1373.5 2580.4,1381.9 2556.2,1387.7 2531.6,1391.4 2506.6,1393.2 2481.6,1393.3 2456.5,1391.7 2431.5,1388.6 2406.6,1384.4 2381.7,1379.0 2356.9,1372.7 2332.3,1365.0 2307.9,1356.6 2283.3,1347.9 2258.7,1339.1 2233.6,1331.2 2208.5,1323.6 2183.3,1316.1 2158.1,1308.6 2132.8,1301.4 2107.6,1294.3 2082.3,1287.3 2057.0,1280.4 2031.9,1272.5 2006.9,1264.7 1981.8,1257.0 1956.7,1249.3 1931.6,1241.6 1906.5,1234.0 1881.2,1227.3 1855.9,1220.6 1830.6,1213.9 1805.2,1207.2 1779.9,1200.5 1754.6,1193.9 1729.3,1187.2 1703.9,1180.6 1678.6,1173.9 1653.4,1166.9 1628.3,1159.5 1603.2,1152.2 1578.1,1144.8 1553.0,1137.5 1527.9,1130.1 1502.8,1122.6 1477.7,1115.2 1452.7,1107.7 1427.7,1100.2 1402.5,1093.2 1377.3,1086.3 1352.1,1079.4 1326.9,1072.5 1301.8,1065.5 1276.6,1058.5 1251.5,1051.5 1226.4,1044.3 1201.3,1037.1 1176.3,1029.8 1151.3,1022.3 1126.3,1014.7 1101.4,1007.1 1076.5,999.4 1051.6,991.6 1026.7,983.8 1001.9,975.8 977.1,967.8 952.3,959.7 927.6,951.5 902.9,943.3 878.2,935.0 853.5,926.7 828.9,918.3 804.3,909.8 779.7,901.2 755.2,892.5 730.7,883.6 706.3,874.7 681.9,865.6 657.3,857.1 632.6,848.8 607.9,840.5 583.2,832.0 558.6,823.4 534.1,814.6 509.6,805.7 485.1,796.7 460.6,787.7 436.2,778.4 411.8,769.1 387.5,759.5 363.3,749.9 339.1,740.0 315.0,729.7 291.2,719.0 267.5,708.1 243.9,696.9 220.3,685.7 196.8,674.2 173.4,662.6 150.1,650.8 126.8,638.8 103.6,626.7 80.5,614.4Z" fill="#f0f1f3" stroke="#f0f1f3" stroke-width="0.8"/><path d="M80.5,614.4 103.6,626.7 126.8,638.8 150.1,650.8 173.4,662.6 196.8,674.2 220.3,685.7 243.9,696.9 267.5,708.1 291.2,719.0 315.0,729.7 339.1,740.0 363.3,749.9 387.5,759.5 411.8,769.1 436.2,778.4 460.6,787.7 485.1,796.7 509.6,805.7 534.1,814.6 558.6,823.4 583.2,832.0 607.9,840.5 632.6,848.8 657.3,857.1 681.9,865.6 706.3,874.7 730.7,883.6 755.2,892.5 779.7,901.2 804.3,909.8 828.9,918.3 853.5,926.7 878.2,935.0 902.9,943.3 927.6,951.5 952.3,959.7 977.1,967.8 1001.9,975.8 1026.7,983.8 1051.6,991.6 1076.5,999.4 1101.4,1007.1 1126.3,1014.7 1151.3,1022.3 1176.3,1029.8 1201.3,1037.1 1226.4,1044.3 1251.5,1051.5 1276.6,1058.5 1301.8,1065.5 1326.9,1072.5 1352.1,1079.4 1377.3,1086.3 1402.5,1093.2 1427.7,1100.2 1452.7,1107.7 1477.7,1115.2 1502.8,1122.6 1527.9,1130.1 1553.0,1137.5 1578.1,1144.8 1603.2,1152.2 1628.3,1159.5 1653.4,1166.9 1678.6,1173.9 1703.9,1180.6 1729.3,1187.2 1754.6,1193.9 1779.9,1200.5 1805.2,1207.2 1830.6,1213.9 1855.9,1220.6 1881.2,1227.3 1906.5,1234.0 1931.6,1241.6 1956.7,1249.3 1981.8,1257.0 2006.9,1264.7 2031.9,1272.5 2057.0,1280.4 2082.3,1287.3 2107.6,1294.3 2132.8,1301.4 2158.1,1308.6 2183.3,1316.1 2208.5,1323.6 2233.6,1331.2 2258.7,1339.1 2283.3,1347.9 2307.9,1356.6 2332.3,1365.0 2356.9,1372.7 2381.7,1379.0 2406.6,1384.4 2431.5,1388.6 2456.5,1391.7 2481.6,1393.3 2506.6,1393.2 2531.6,1391.4 2556.2,1387.7 2580.4,1381.9 2603.7,1373.5 2625.7,1362.3 2646.0,1347.8 2664.9,1330.9 2682.8,1312.1 2700.6,1292.8 2719.5,1274.3 2740.3,1258.1 2740.3,1258.1 2719.3,1274.1 2700.3,1292.5 2682.3,1311.6 2664.2,1330.2 2645.1,1346.9 2624.8,1360.9 2602.8,1371.8 2579.6,1379.9 2555.6,1385.4 2531.2,1388.9 2506.4,1390.5 2481.6,1390.4 2456.7,1388.7 2431.9,1385.7 2407.1,1381.4 2382.3,1376.0 2357.6,1369.8 2333.1,1362.2 2308.7,1353.9 2284.1,1345.2 2259.5,1336.4 2234.4,1328.6 2209.2,1321.0 2184.0,1313.5 2158.8,1306.1 2133.6,1298.9 2108.3,1291.9 2083.0,1284.8 2057.7,1277.9 2032.6,1270.1 2007.5,1262.3 1982.4,1254.6 1957.3,1246.9 1932.3,1239.3 1907.1,1231.7 1881.8,1225.0 1856.5,1218.3 1831.1,1211.6 1805.8,1205.0 1780.5,1198.3 1755.2,1191.7 1729.8,1185.0 1704.5,1178.4 1679.2,1171.7 1654.0,1164.7 1628.9,1157.4 1603.7,1150.1 1578.6,1142.8 1553.5,1135.5 1528.4,1128.1 1503.3,1120.7 1478.3,1113.3 1453.2,1105.9 1428.2,1098.4 1403.0,1091.4 1377.8,1084.6 1352.6,1077.7 1327.4,1070.8 1302.2,1063.9 1277.1,1056.9 1251.9,1049.9 1226.8,1042.8 1201.7,1035.6 1176.7,1028.3 1151.7,1020.8 1126.7,1013.3 1101.8,1005.7 1076.9,998.1 1052.0,990.3 1027.1,982.5 1002.3,974.6 977.5,966.6 952.7,958.6 928.0,950.4 903.3,942.2 878.5,934.0 853.8,925.8 829.2,917.4 804.6,908.9 780.0,900.3 755.5,891.7 731.0,882.9 706.6,873.9 682.2,864.9 657.5,856.4 632.8,848.2 608.1,839.9 583.5,831.4 558.9,822.8 534.3,814.1 509.8,805.2 485.3,796.2 460.8,787.2 436.4,778.0 412.0,768.6 387.7,759.1 363.5,749.4 339.3,739.6 315.2,729.4 291.4,718.6 267.7,707.7 244.0,696.7 220.4,685.4 196.9,674.0 173.5,662.5 150.1,650.7 126.9,638.7 103.7,626.6 80.5,614.4Z" fill="#ecedef" stroke="#ecedef" stroke-width="0.8"/><path d="M80.5,614.4 103.7,626.6 126.9,638.7 150.1,650.7 173.5,662.5 196.9,674.0 220.4,685.4 244.0,696.7 267.7,707.7 291.4,718.6 315.2,729.4 339.3,739.6 363.5,749.4 387.7,759.1 412.0,768.6 436.4,778.0 460.8,787.2 485.3,796.2 509.8,805.2 534.3,814.1 558.9,822.8 583.5,831.4 608.1,839.9 632.8,848.2 657.5,856.4 682.2,864.9 706.6,873.9 731.0,882.9 755.5,891.7 780.0,900.3 804.6,908.9 829.2,917.4 853.8,925.8 878.5,934.0 903.3,942.2 928.0,950.4 952.7,958.6 977.5,966.6 1002.3,974.6 1027.1,982.5 1052.0,990.3 1076.9,998.1 1101.8,1005.7 1126.7,1013.3 1151.7,1020.8 1176.7,1028.3 1201.7,1035.6 1226.8,1042.8 1251.9,1049.9 1277.1,1056.9 1302.2,1063.9 1327.4,1070.8 1352.6,1077.7 1377.8,1084.6 1403.0,1091.4 1428.2,1098.4 1453.2,1105.9 1478.3,1113.3 1503.3,1120.7 1528.4,1128.1 1553.5,1135.5 1578.6,1142.8 1603.7,1150.1 1628.9,1157.4 1654.0,1164.7 1679.2,1171.7 1704.5,1178.4 1729.8,1185.0 1755.2,1191.7 1780.5,1198.3 1805.8,1205.0 1831.1,1211.6 1856.5,1218.3 1881.8,1225.0 1907.1,1231.7 1932.3,1239.3 1957.3,1246.9 1982.4,1254.6 2007.5,1262.3 2032.6,1270.1 2057.7,1277.9 2083.0,1284.8 2108.3,1291.9 2133.6,1298.9 2158.8,1306.1 2184.0,1313.5 2209.2,1321.0 2234.4,1328.6 2259.5,1336.4 2284.1,1345.2 2308.7,1353.9 2333.1,1362.2 2357.6,1369.8 2382.3,1376.0 2407.1,1381.4 2431.9,1385.7 2456.7,1388.7 2481.6,1390.4 2506.4,1390.5 2531.2,1388.9 2555.6,1385.4 2579.6,1379.9 2602.8,1371.8 2624.8,1360.9 2645.1,1346.9 2664.2,1330.2 2682.3,1311.6 2700.3,1292.5 2719.3,1274.1 2740.3,1258.1 2740.3,1258.1 2719.1,1273.9 2699.9,1292.2 2681.7,1311.2 2663.4,1329.5 2644.2,1345.9 2623.9,1359.6 2602.0,1370.1 2578.9,1377.8 2555.1,1383.1 2530.8,1386.3 2506.3,1387.8 2481.6,1387.6 2456.9,1385.8 2432.2,1382.7 2407.6,1378.4 2383.0,1373.1 2358.3,1366.9 2333.9,1359.4 2309.5,1351.1 2284.9,1342.6 2260.2,1333.8 2235.1,1326.0 2210.0,1318.5 2184.8,1311.0 2159.5,1303.6 2134.3,1296.4 2109.0,1289.4 2083.7,1282.4 2058.3,1275.4 2033.3,1267.7 2008.2,1259.9 1983.1,1252.2 1958.0,1244.6 1932.9,1237.0 1907.8,1229.4 1882.4,1222.7 1857.1,1216.0 1831.7,1209.4 1806.4,1202.7 1781.1,1196.1 1755.7,1189.5 1730.4,1182.8 1705.1,1176.2 1679.8,1169.6 1654.6,1162.6 1629.4,1155.3 1604.3,1148.1 1579.2,1140.8 1554.0,1133.5 1528.9,1126.2 1503.8,1118.8 1478.8,1111.4 1453.7,1104.1 1428.6,1096.6 1403.5,1089.7 1378.3,1082.9 1353.0,1076.0 1327.9,1069.2 1302.7,1062.3 1277.5,1055.3 1252.4,1048.3 1227.3,1041.2 1202.2,1034.1 1177.1,1026.8 1152.1,1019.4 1127.2,1011.9 1102.2,1004.3 1077.3,996.7 1052.4,989.0 1027.5,981.2 1002.7,973.4 977.9,965.4 953.1,957.4 928.3,949.3 903.6,941.2 878.9,933.0 854.2,924.8 829.5,916.5 804.9,908.0 780.3,899.5 755.8,890.9 731.3,882.1 706.8,873.2 682.4,864.2 657.8,855.8 633.1,847.6 608.4,839.3 583.7,830.8 559.1,822.3 534.5,813.5 510.0,804.7 485.5,795.7 461.1,786.7 436.6,777.5 412.3,768.2 387.9,758.7 363.7,749.0 339.4,739.2 315.4,729.0 291.6,718.3 267.8,707.4 244.1,696.4 220.5,685.2 197.0,673.8 173.6,662.3 150.2,650.5 126.9,638.7 103.7,626.6 80.5,614.3Z" fill="#e6e6e9" stroke="#e6e6e9" stroke-width="0.8"/><path d="M80.5,614.3 103.7,626.6 126.9,638.7 150.2,650.5 173.6,662.3 197.0,673.8 220.5,685.2 244.1,696.4 267.8,707.4 291.6,718.3 315.4,729.0 339.4,739.2 363.7,749.0 387.9,758.7 412.3,768.2 436.6,777.5 461.1,786.7 485.5,795.7 510.0,804.7 534.5,813.5 559.1,822.3 583.7,830.8 608.4,839.3 633.1,847.6 657.8,855.8 682.4,864.2 706.8,873.2 731.3,882.1 755.8,890.9 780.3,899.5 804.9,908.0 829.5,916.5 854.2,924.8 878.9,933.0 903.6,941.2 928.3,949.3 953.1,957.4 977.9,965.4 1002.7,973.4 1027.5,981.2 1052.4,989.0 1077.3,996.7 1102.2,1004.3 1127.2,1011.9 1152.1,1019.4 1177.1,1026.8 1202.2,1034.1 1227.3,1041.2 1252.4,1048.3 1277.5,1055.3 1302.7,1062.3 1327.9,1069.2 1353.0,1076.0 1378.3,1082.9 1403.5,1089.7 1428.6,1096.6 1453.7,1104.1 1478.8,1111.4 1503.8,1118.8 1528.9,1126.2 1554.0,1133.5 1579.2,1140.8 1604.3,1148.1 1629.4,1155.3 1654.6,1162.6 1679.8,1169.6 1705.1,1176.2 1730.4,1182.8 1755.7,1189.5 1781.1,1196.1 1806.4,1202.7 1831.7,1209.4 1857.1,1216.0 1882.4,1222.7 1907.8,1229.4 1932.9,1237.0 1958.0,1244.6 1983.1,1252.2 2008.2,1259.9 2033.3,1267.7 2058.3,1275.4 2083.7,1282.4 2109.0,1289.4 2134.3,1296.4 2159.5,1303.6 2184.8,1311.0 2210.0,1318.5 2235.1,1326.0 2260.2,1333.8 2284.9,1342.6 2309.5,1351.1 2333.9,1359.4 2358.3,1366.9 2383.0,1373.1 2407.6,1378.4 2432.2,1382.7 2456.9,1385.8 2481.6,1387.6 2506.3,1387.8 2530.8,1386.3 2555.1,1383.1 2578.9,1377.8 2602.0,1370.1 2623.9,1359.6 2644.2,1345.9 2663.4,1329.5 2681.7,1311.2 2699.9,1292.2 2719.1,1273.9 2740.3,1258.1 2740.3,1258.1 2719.0,1273.7 2699.6,1291.8 2681.2,1310.7 2662.7,1328.8 2643.3,1344.9 2623.0,1358.2 2601.1,1368.4 2578.2,1375.8 2554.5,1380.8 2530.4,1383.8 2506.1,1385.0 2481.6,1384.7 2457.1,1382.9 2432.6,1379.7 2408.1,1375.5 2383.6,1370.1 2359.1,1364.0 2334.7,1356.5 2310.3,1348.4 2285.7,1339.9 2261.0,1331.2 2235.9,1323.5 2210.7,1315.9 2185.5,1308.5 2160.3,1301.1 2135.0,1293.9 2109.7,1286.9 2084.3,1279.9 2059.0,1273.0 2033.9,1265.2 2008.8,1257.5 1983.7,1249.9 1958.6,1242.2 1933.5,1234.6 1908.4,1227.1 1883.0,1220.4 1857.7,1213.8 1832.3,1207.1 1807.0,1200.5 1781.7,1193.9 1756.3,1187.3 1731.0,1180.6 1705.7,1174.0 1680.4,1167.4 1655.1,1160.5 1630.0,1153.2 1604.8,1146.0 1579.7,1138.8 1554.6,1131.5 1529.5,1124.2 1504.4,1116.9 1479.3,1109.6 1454.2,1102.2 1429.1,1094.8 1404.0,1087.9 1378.7,1081.1 1353.5,1074.3 1328.3,1067.5 1303.2,1060.6 1278.0,1053.7 1252.9,1046.7 1227.7,1039.7 1202.6,1032.6 1177.6,1025.3 1152.6,1017.9 1127.6,1010.5 1102.6,1003.0 1077.7,995.4 1052.8,987.7 1027.9,980.0 1003.1,972.2 978.2,964.3 953.5,956.3 928.7,948.2 904.0,940.1 879.2,932.0 854.5,923.8 829.8,915.5 805.2,907.2 780.6,898.7 756.1,890.1 731.6,881.3 707.1,872.5 682.7,863.6 658.1,855.1 633.3,847.0 608.6,838.7 584.0,830.3 559.3,821.7 534.8,813.0 510.3,804.1 485.8,795.2 461.3,786.2 436.8,777.0 412.5,767.7 388.1,758.2 363.9,748.6 339.6,738.8 315.6,728.6 291.7,718.0 268.0,707.1 244.3,696.1 220.7,685.0 197.1,673.7 173.6,662.1 150.3,650.4 127.0,638.6 103.7,626.5 80.6,614.3Z" fill="#dfe0e3" stroke="#dfe0e3" stroke-width="0.8"/><path d="M80.6,614.3 103.7,626.5 127.0,638.6 150.3,650.4 173.6,662.1 197.1,673.7 220.7,685.0 244.3,696.1 268.0,707.1 291.7,718.0 315.6,728.6 339.6,738.8 363.9,748.6 388.1,758.2 412.5,767.7 436.8,777.0 461.3,786.2 485.8,795.2 510.3,804.1 534.8,813.0 559.3,821.7 584.0,830.3 608.6,838.7 633.3,847.0 658.1,855.1 682.7,863.6 707.1,872.5 731.6,881.3 756.1,890.1 780.6,898.7 805.2,907.2 829.8,915.5 854.5,923.8 879.2,932.0 904.0,940.1 928.7,948.2 953.5,956.3 978.2,964.3 1003.1,972.2 1027.9,980.0 1052.8,987.7 1077.7,995.4 1102.6,1003.0 1127.6,1010.5 1152.6,1017.9 1177.6,1025.3 1202.6,1032.6 1227.7,1039.7 1252.9,1046.7 1278.0,1053.7 1303.2,1060.6 1328.3,1067.5 1353.5,1074.3 1378.7,1081.1 1404.0,1087.9 1429.1,1094.8 1454.2,1102.2 1479.3,1109.6 1504.4,1116.9 1529.5,1124.2 1554.6,1131.5 1579.7,1138.8 1604.8,1146.0 1630.0,1153.2 1655.1,1160.5 1680.4,1167.4 1705.7,1174.0 1731.0,1180.6 1756.3,1187.3 1781.7,1193.9 1807.0,1200.5 1832.3,1207.1 1857.7,1213.8 1883.0,1220.4 1908.4,1227.1 1933.5,1234.6 1958.6,1242.2 1983.7,1249.9 2008.8,1257.5 2033.9,1265.2 2059.0,1273.0 2084.3,1279.9 2109.7,1286.9 2135.0,1293.9 2160.3,1301.1 2185.5,1308.5 2210.7,1315.9 2235.9,1323.5 2261.0,1331.2 2285.7,1339.9 2310.3,1348.4 2334.7,1356.5 2359.1,1364.0 2383.6,1370.1 2408.1,1375.5 2432.6,1379.7 2457.1,1382.9 2481.6,1384.7 2506.1,1385.0 2530.4,1383.8 2554.5,1380.8 2578.2,1375.8 2601.1,1368.4 2623.0,1358.2 2643.3,1344.9 2662.7,1328.8 2681.2,1310.7 2699.6,1291.8 2719.0,1273.7 2740.3,1258.1 2740.3,1258.1 2718.7,1273.5 2699.1,1291.4 2680.5,1310.1 2661.7,1328.0 2642.2,1343.7 2621.8,1356.5 2600.1,1366.2 2577.3,1373.2 2553.8,1377.8 2529.9,1380.5 2505.8,1381.5 2481.6,1381.0 2457.4,1379.1 2433.1,1375.9 2408.8,1371.6 2384.4,1366.4 2360.0,1360.3 2335.7,1352.9 2311.3,1344.8 2286.8,1336.4 2262.0,1327.8 2236.9,1320.1 2211.7,1312.6 2186.4,1305.2 2161.2,1297.9 2135.9,1290.7 2110.5,1283.7 2085.2,1276.7 2059.9,1269.8 2034.8,1262.1 2009.7,1254.4 1984.5,1246.8 1959.4,1239.2 1934.3,1231.7 1909.1,1224.2 1883.8,1217.5 1858.5,1210.9 1833.1,1204.2 1807.8,1197.6 1782.4,1191.0 1757.1,1184.4 1731.7,1177.8 1706.4,1171.2 1681.1,1164.6 1655.9,1157.7 1630.7,1150.5 1605.5,1143.3 1580.4,1136.2 1555.3,1128.9 1530.1,1121.7 1505.0,1114.5 1479.9,1107.2 1454.8,1099.9 1429.8,1092.6 1404.6,1085.7 1379.4,1078.9 1354.1,1072.2 1328.9,1065.4 1303.8,1058.5 1278.6,1051.6 1253.4,1044.7 1228.3,1037.7 1203.2,1030.6 1178.2,1023.4 1153.1,1016.1 1128.1,1008.7 1103.2,1001.2 1078.2,993.7 1053.3,986.1 1028.4,978.4 1003.6,970.6 978.7,962.8 953.9,954.8 929.2,946.8 904.4,938.8 879.7,930.7 854.9,922.6 830.3,914.4 805.6,906.0 781.0,897.6 756.4,889.0 731.9,880.4 707.4,871.6 683.0,862.7 658.4,854.3 633.6,846.2 608.9,837.9 584.3,829.5 559.7,821.0 535.1,812.3 510.6,803.5 486.1,794.5 461.6,785.5 437.1,776.4 412.7,767.1 388.4,757.7 364.1,748.1 339.9,738.3 315.8,728.1 292.0,717.5 268.2,706.8 244.5,695.8 220.8,684.7 197.2,673.4 173.7,661.9 150.4,650.2 127.0,638.5 103.7,626.5 80.6,614.3Z" fill="#dadbde" stroke="#dadbde" stroke-width="0.8"/><path d="M80.6,614.3 103.7,626.5 127.0,638.5 150.4,650.2 173.7,661.9 197.2,673.4 220.8,684.7 244.5,695.8 268.2,706.8 292.0,717.5 315.8,728.1 339.9,738.3 364.1,748.1 388.4,757.7 412.7,767.1 437.1,776.4 461.6,785.5 486.1,794.5 510.6,803.5 535.1,812.3 559.7,821.0 584.3,829.5 608.9,837.9 633.6,846.2 658.4,854.3 683.0,862.7 707.4,871.6 731.9,880.4 756.4,889.0 781.0,897.6 805.6,906.0 830.3,914.4 854.9,922.6 879.7,930.7 904.4,938.8 929.2,946.8 953.9,954.8 978.7,962.8 1003.6,970.6 1028.4,978.4 1053.3,986.1 1078.2,993.7 1103.2,1001.2 1128.1,1008.7 1153.1,1016.1 1178.2,1023.4 1203.2,1030.6 1228.3,1037.7 1253.4,1044.7 1278.6,1051.6 1303.8,1058.5 1328.9,1065.4 1354.1,1072.2 1379.4,1078.9 1404.6,1085.7 1429.8,1092.6 1454.8,1099.9 1479.9,1107.2 1505.0,1114.5 1530.1,1121.7 1555.3,1128.9 1580.4,1136.2 1605.5,1143.3 1630.7,1150.5 1655.9,1157.7 1681.1,1164.6 1706.4,1171.2 1731.7,1177.8 1757.1,1184.4 1782.4,1191.0 1807.8,1197.6 1833.1,1204.2 1858.5,1210.9 1883.8,1217.5 1909.1,1224.2 1934.3,1231.7 1959.4,1239.2 1984.5,1246.8 2009.7,1254.4 2034.8,1262.1 2059.9,1269.8 2085.2,1276.7 2110.5,1283.7 2135.9,1290.7 2161.2,1297.9 2186.4,1305.2 2211.7,1312.6 2236.9,1320.1 2262.0,1327.8 2286.8,1336.4 2311.3,1344.8 2335.7,1352.9 2360.0,1360.3 2384.4,1366.4 2408.8,1371.6 2433.1,1375.9 2457.4,1379.1 2481.6,1381.0 2505.8,1381.5 2529.9,1380.5 2553.8,1377.8 2577.3,1373.2 2600.1,1366.2 2621.8,1356.5 2642.2,1343.7 2661.7,1328.0 2680.5,1310.1 2699.1,1291.4 2718.7,1273.5 2740.3,1258.1 2740.3,1258.1 2718.5,1273.2 2698.6,1291.1 2679.8,1309.5 2660.8,1327.1 2641.1,1342.4 2620.6,1354.8 2599.0,1364.0 2576.3,1370.6 2553.1,1374.9 2529.4,1377.2 2505.6,1378.0 2481.6,1377.4 2457.6,1375.3 2433.5,1372.1 2409.4,1367.8 2385.2,1362.6 2360.9,1356.6 2336.7,1349.2 2312.3,1341.3 2287.8,1333.0 2263.0,1324.5 2237.9,1316.8 2212.6,1309.4 2187.4,1302.0 2162.1,1294.6 2136.8,1287.5 2111.4,1280.5 2086.1,1273.6 2060.8,1266.6 2035.6,1259.0 2010.5,1251.3 1985.4,1243.8 1960.2,1236.2 1935.1,1228.7 1909.9,1221.2 1884.6,1214.6 1859.2,1208.0 1833.9,1201.3 1808.5,1194.7 1783.2,1188.1 1757.8,1181.6 1732.5,1175.0 1707.2,1168.4 1681.8,1161.9 1656.6,1155.0 1631.4,1147.8 1606.2,1140.7 1581.1,1133.6 1555.9,1126.4 1530.8,1119.2 1505.7,1112.0 1480.6,1104.8 1455.5,1097.5 1430.4,1090.3 1405.2,1083.4 1380.0,1076.7 1354.8,1070.0 1329.5,1063.2 1304.4,1056.4 1279.2,1049.5 1254.0,1042.6 1228.9,1035.7 1203.8,1028.7 1178.7,1021.5 1153.7,1014.2 1128.7,1006.9 1103.7,999.4 1078.8,991.9 1053.8,984.4 1028.9,976.8 1004.1,969.0 979.2,961.2 954.4,953.4 929.6,945.4 904.9,937.4 880.1,929.4 855.4,921.4 830.7,913.2 806.0,904.9 781.4,896.5 756.8,888.0 732.3,879.4 707.8,870.7 683.3,861.8 658.7,853.5 634.0,845.4 609.3,837.1 584.6,828.7 560.0,820.2 535.4,811.6 510.8,802.8 486.3,793.9 461.8,784.9 437.4,775.8 413.0,766.5 388.7,757.1 364.4,747.5 340.1,737.8 316.0,727.7 292.2,717.1 268.4,706.4 244.6,695.4 221.0,684.4 197.4,673.2 173.9,661.7 150.5,650.1 127.1,638.3 103.8,626.4 80.6,614.3Z" fill="#d5d6d8" stroke="#d5d6d8" stroke-width="0.8"/><path d="M80.6,614.3 103.8,626.4 127.1,638.3 150.5,650.1 173.9,661.7 197.4,673.2 221.0,684.4 244.6,695.4 268.4,706.4 292.2,717.1 316.0,727.7 340.1,737.8 364.4,747.5 388.7,757.1 413.0,766.5 437.4,775.8 461.8,784.9 486.3,793.9 510.8,802.8 535.4,811.6 560.0,820.2 584.6,828.7 609.3,837.1 634.0,845.4 658.7,853.5 683.3,861.8 707.8,870.7 732.3,879.4 756.8,888.0 781.4,896.5 806.0,904.9 830.7,913.2 855.4,921.4 880.1,929.4 904.9,937.4 929.6,945.4 954.4,953.4 979.2,961.2 1004.1,969.0 1028.9,976.8 1053.8,984.4 1078.8,991.9 1103.7,999.4 1128.7,1006.9 1153.7,1014.2 1178.7,1021.5 1203.8,1028.7 1228.9,1035.7 1254.0,1042.6 1279.2,1049.5 1304.4,1056.4 1329.5,1063.2 1354.8,1070.0 1380.0,1076.7 1405.2,1083.4 1430.4,1090.3 1455.5,1097.5 1480.6,1104.8 1505.7,1112.0 1530.8,1119.2 1555.9,1126.4 1581.1,1133.6 1606.2,1140.7 1631.4,1147.8 1656.6,1155.0 1681.8,1161.9 1707.2,1168.4 1732.5,1175.0 1757.8,1181.6 1783.2,1188.1 1808.5,1194.7 1833.9,1201.3 1859.2,1208.0 1884.6,1214.6 1909.9,1221.2 1935.1,1228.7 1960.2,1236.2 1985.4,1243.8 2010.5,1251.3 2035.6,1259.0 2060.8,1266.6 2086.1,1273.6 2111.4,1280.5 2136.8,1287.5 2162.1,1294.6 2187.4,1302.0 2212.6,1309.4 2237.9,1316.8 2263.0,1324.5 2287.8,1333.0 2312.3,1341.3 2336.7,1349.2 2360.9,1356.6 2385.2,1362.6 2409.4,1367.8 2433.5,1372.1 2457.6,1375.3 2481.6,1377.4 2505.6,1378.0 2529.4,1377.2 2553.1,1374.9 2576.3,1370.6 2599.0,1364.0 2620.6,1354.8 2641.1,1342.4 2660.8,1327.1 2679.8,1309.5 2698.6,1291.1 2718.5,1273.2 2740.3,1258.1 2740.3,1258.1 2718.2,1273.0 2698.2,1290.7 2679.1,1309.0 2659.8,1326.3 2639.9,1341.2 2619.4,1353.1 2597.9,1361.8 2575.4,1368.0 2552.4,1371.9 2529.0,1374.0 2505.3,1374.5 2481.6,1373.7 2457.9,1371.6 2434.0,1368.3 2410.1,1364.0 2386.0,1358.8 2361.8,1352.8 2337.6,1345.6 2313.4,1337.7 2288.8,1329.5 2264.1,1321.1 2238.9,1313.5 2213.6,1306.1 2188.3,1298.7 2163.0,1291.4 2137.7,1284.3 2112.3,1277.3 2087.0,1270.4 2061.6,1263.5 2036.5,1255.8 2011.3,1248.3 1986.2,1240.7 1961.0,1233.2 1935.9,1225.7 1910.7,1218.3 1885.4,1211.7 1860.0,1205.0 1834.6,1198.4 1809.3,1191.9 1783.9,1185.3 1758.6,1178.7 1733.2,1172.2 1707.9,1165.6 1682.6,1159.1 1657.3,1152.2 1632.1,1145.1 1607.0,1138.0 1581.8,1130.9 1556.6,1123.8 1531.5,1116.7 1506.4,1109.5 1481.2,1102.4 1456.1,1095.2 1431.0,1088.0 1405.8,1081.1 1380.6,1074.5 1355.4,1067.8 1330.2,1061.1 1305.0,1054.3 1279.8,1047.5 1254.6,1040.6 1229.5,1033.7 1204.4,1026.7 1179.3,1019.6 1154.3,1012.3 1129.3,1005.0 1104.3,997.7 1079.3,990.2 1054.4,982.7 1029.5,975.1 1004.6,967.5 979.7,959.7 954.9,951.9 930.1,944.0 905.3,936.1 880.6,928.1 855.8,920.1 831.1,912.0 806.4,903.7 781.8,895.4 757.2,887.0 732.6,878.4 708.1,869.7 683.7,861.0 659.0,852.6 634.3,844.5 609.6,836.3 584.9,828.0 560.3,819.5 535.7,810.9 511.1,802.1 486.6,793.2 462.1,784.3 437.7,775.2 413.3,765.9 388.9,756.5 364.6,747.0 340.4,737.3 316.3,727.2 292.4,716.7 268.6,706.0 244.8,695.1 221.1,684.1 197.5,672.9 174.0,661.5 150.5,649.9 127.1,638.2 103.8,626.4 80.6,614.3Z" fill="#d0d1d4" stroke="#d0d1d4" stroke-width="0.8"/><path d="M80.6,614.3 103.8,626.4 127.1,638.2 150.5,649.9 174.0,661.5 197.5,672.9 221.1,684.1 244.8,695.1 268.6,706.0 292.4,716.7 316.3,727.2 340.4,737.3 364.6,747.0 388.9,756.5 413.3,765.9 437.7,775.2 462.1,784.3 486.6,793.2 511.1,802.1 535.7,810.9 560.3,819.5 584.9,828.0 609.6,836.3 634.3,844.5 659.0,852.6 683.7,861.0 708.1,869.7 732.6,878.4 757.2,887.0 781.8,895.4 806.4,903.7 831.1,912.0 855.8,920.1 880.6,928.1 905.3,936.1 930.1,944.0 954.9,951.9 979.7,959.7 1004.6,967.5 1029.5,975.1 1054.4,982.7 1079.3,990.2 1104.3,997.7 1129.3,1005.0 1154.3,1012.3 1179.3,1019.6 1204.4,1026.7 1229.5,1033.7 1254.6,1040.6 1279.8,1047.5 1305.0,1054.3 1330.2,1061.1 1355.4,1067.8 1380.6,1074.5 1405.8,1081.1 1431.0,1088.0 1456.1,1095.2 1481.2,1102.4 1506.4,1109.5 1531.5,1116.7 1556.6,1123.8 1581.8,1130.9 1607.0,1138.0 1632.1,1145.1 1657.3,1152.2 1682.6,1159.1 1707.9,1165.6 1733.2,1172.2 1758.6,1178.7 1783.9,1185.3 1809.3,1191.9 1834.6,1198.4 1860.0,1205.0 1885.4,1211.7 1910.7,1218.3 1935.9,1225.7 1961.0,1233.2 1986.2,1240.7 2011.3,1248.3 2036.5,1255.8 2061.6,1263.5 2087.0,1270.4 2112.3,1277.3 2137.7,1284.3 2163.0,1291.4 2188.3,1298.7 2213.6,1306.1 2238.9,1313.5 2264.1,1321.1 2288.8,1329.5 2313.4,1337.7 2337.6,1345.6 2361.8,1352.8 2386.0,1358.8 2410.1,1364.0 2434.0,1368.3 2457.9,1371.6 2481.6,1373.7 2505.3,1374.5 2529.0,1374.0 2552.4,1371.9 2575.4,1368.0 2597.9,1361.8 2619.4,1353.1 2639.9,1341.2 2659.8,1326.3 2679.1,1309.0 2698.2,1290.7 2718.2,1273.0 2740.3,1258.1 2740.3,1258.1 2717.8,1272.6 2697.4,1290.0 2677.9,1308.0 2658.2,1324.8 2638.1,1339.1 2617.5,1350.2 2596.1,1358.2 2573.9,1363.6 2551.2,1366.9 2528.1,1368.5 2504.9,1368.7 2481.6,1367.6 2458.3,1365.3 2434.8,1362.0 2411.2,1357.7 2387.4,1352.5 2363.4,1346.6 2339.3,1339.5 2315.1,1331.8 2290.6,1323.7 2265.7,1315.5 2240.5,1308.0 2215.2,1300.6 2189.9,1293.3 2164.6,1286.0 2139.2,1279.0 2113.8,1272.0 2088.4,1265.1 2063.1,1258.2 2037.9,1250.6 2012.7,1243.1 1987.5,1235.6 1962.4,1228.2 1937.2,1220.8 1912.0,1213.4 1886.6,1206.8 1861.3,1200.2 1835.9,1193.6 1810.6,1187.1 1785.2,1180.5 1759.8,1174.0 1734.5,1167.5 1709.1,1161.0 1683.8,1154.5 1658.5,1147.7 1633.3,1140.6 1608.1,1133.6 1583.0,1126.6 1557.8,1119.6 1532.6,1112.5 1507.5,1105.5 1482.3,1098.4 1457.2,1091.3 1432.1,1084.2 1406.9,1077.4 1381.6,1070.8 1356.4,1064.2 1331.2,1057.5 1306.0,1050.8 1280.8,1044.0 1255.6,1037.2 1230.5,1030.3 1205.3,1023.4 1180.2,1016.4 1155.2,1009.2 1130.2,1002.0 1105.2,994.7 1080.2,987.4 1055.2,979.9 1030.3,972.5 1005.4,964.9 980.5,957.2 955.7,949.5 930.9,941.7 906.1,933.8 881.3,926.0 856.5,918.0 831.8,910.0 807.1,901.8 782.5,893.6 757.8,885.3 733.3,876.8 708.7,868.2 684.2,859.5 659.6,851.3 634.8,843.2 610.1,835.0 585.4,826.7 560.8,818.3 536.2,809.7 511.6,800.9 487.1,792.1 462.6,783.2 438.1,774.2 413.7,764.9 389.4,755.6 365.0,746.1 340.8,736.4 316.7,726.4 292.7,716.0 268.9,705.3 245.1,694.5 221.4,683.6 197.7,672.5 174.2,661.2 150.7,649.6 127.3,638.0 103.9,626.2 80.6,614.2Z" fill="#cccdcf" stroke="#cccdcf" stroke-width="0.8"/><path d="M80.6,614.2 103.9,626.2 127.3,638.0 150.7,649.6 174.2,661.2 197.7,672.5 221.4,683.6 245.1,694.5 268.9,705.3 292.7,716.0 316.7,726.4 340.8,736.4 365.0,746.1 389.4,755.6 413.7,764.9 438.1,774.2 462.6,783.2 487.1,792.1 511.6,800.9 536.2,809.7 560.8,818.3 585.4,826.7 610.1,835.0 634.8,843.2 659.6,851.3 684.2,859.5 708.7,868.2 733.3,876.8 757.8,885.3 782.5,893.6 807.1,901.8 831.8,910.0 856.5,918.0 881.3,926.0 906.1,933.8 930.9,941.7 955.7,949.5 980.5,957.2 1005.4,964.9 1030.3,972.5 1055.2,979.9 1080.2,987.4 1105.2,994.7 1130.2,1002.0 1155.2,1009.2 1180.2,1016.4 1205.3,1023.4 1230.5,1030.3 1255.6,1037.2 1280.8,1044.0 1306.0,1050.8 1331.2,1057.5 1356.4,1064.2 1381.6,1070.8 1406.9,1077.4 1432.1,1084.2 1457.2,1091.3 1482.3,1098.4 1507.5,1105.5 1532.6,1112.5 1557.8,1119.6 1583.0,1126.6 1608.1,1133.6 1633.3,1140.6 1658.5,1147.7 1683.8,1154.5 1709.1,1161.0 1734.5,1167.5 1759.8,1174.0 1785.2,1180.5 1810.6,1187.1 1835.9,1193.6 1861.3,1200.2 1886.6,1206.8 1912.0,1213.4 1937.2,1220.8 1962.4,1228.2 1987.5,1235.6 2012.7,1243.1 2037.9,1250.6 2063.1,1258.2 2088.4,1265.1 2113.8,1272.0 2139.2,1279.0 2164.6,1286.0 2189.9,1293.3 2215.2,1300.6 2240.5,1308.0 2265.7,1315.5 2290.6,1323.7 2315.1,1331.8 2339.3,1339.5 2363.4,1346.6 2387.4,1352.5 2411.2,1357.7 2434.8,1362.0 2458.3,1365.3 2481.6,1367.6 2504.9,1368.7 2528.1,1368.5 2551.2,1366.9 2573.9,1363.6 2596.1,1358.2 2617.5,1350.2 2638.1,1339.1 2658.2,1324.8 2677.9,1308.0 2697.4,1290.0 2717.8,1272.6 2740.3,1258.1 2740.3,1258.1 2717.4,1272.2 2696.6,1289.3 2676.7,1307.0 2656.6,1323.4 2636.2,1337.0 2615.5,1347.3 2594.3,1354.5 2572.3,1359.3 2550.0,1362.0 2527.3,1363.1 2504.5,1362.8 2481.6,1361.5 2458.7,1359.0 2435.6,1355.6 2412.3,1351.3 2388.7,1346.2 2364.9,1340.4 2341.0,1333.4 2316.8,1325.9 2292.3,1318.0 2267.4,1309.9 2242.2,1302.4 2216.8,1295.1 2191.5,1287.9 2166.1,1280.7 2140.7,1273.7 2115.3,1266.7 2089.9,1259.8 2064.5,1252.9 2039.3,1245.4 2014.1,1238.0 1988.9,1230.5 1963.7,1223.2 1938.5,1215.8 1913.3,1208.5 1887.9,1201.9 1862.6,1195.3 1837.2,1188.8 1811.8,1182.3 1786.5,1175.7 1761.1,1169.2 1735.7,1162.8 1710.4,1156.3 1685.0,1149.8 1659.7,1143.1 1634.5,1136.1 1609.3,1129.2 1584.1,1122.3 1558.9,1115.3 1533.7,1108.4 1508.6,1101.4 1483.4,1094.4 1458.3,1087.4 1433.1,1080.3 1407.9,1073.6 1382.7,1067.1 1357.4,1060.5 1332.2,1053.9 1307.0,1047.2 1281.8,1040.5 1256.6,1033.8 1231.4,1027.0 1206.3,1020.2 1181.2,1013.2 1156.1,1006.1 1131.1,999.0 1106.1,991.8 1081.1,984.5 1056.1,977.2 1031.2,969.8 1006.3,962.3 981.4,954.7 956.5,947.1 931.7,939.4 906.8,931.6 882.0,923.8 857.2,916.0 832.5,908.0 807.8,899.9 783.1,891.8 758.5,883.5 733.9,875.2 709.3,866.7 684.8,858.1 660.1,849.9 635.3,841.9 610.6,833.7 585.9,825.4 561.3,817.0 536.7,808.5 512.1,799.8 487.6,791.0 463.1,782.2 438.6,773.1 414.2,764.0 389.8,754.7 365.5,745.2 341.2,735.5 317.1,725.6 293.1,715.2 269.2,704.7 245.4,693.9 221.7,683.1 197.9,672.1 174.3,660.8 150.9,649.4 127.4,637.8 103.9,626.1 80.6,614.2Z" fill="#c8cacc" stroke="#c8cacc" stroke-width="0.8"/><path d="M80.6,614.2 103.9,626.1 127.4,637.8 150.9,649.4 174.3,660.8 197.9,672.1 221.7,683.1 245.4,693.9 269.2,704.7 293.1,715.2 317.1,725.6 341.2,735.5 365.5,745.2 389.8,754.7 414.2,764.0 438.6,773.1 463.1,782.2 487.6,791.0 512.1,799.8 536.7,808.5 561.3,817.0 585.9,825.4 610.6,833.7 635.3,841.9 660.1,849.9 684.8,858.1 709.3,866.7 733.9,875.2 758.5,883.5 783.1,891.8 807.8,899.9 832.5,908.0 857.2,916.0 882.0,923.8 906.8,931.6 931.7,939.4 956.5,947.1 981.4,954.7 1006.3,962.3 1031.2,969.8 1056.1,977.2 1081.1,984.5 1106.1,991.8 1131.1,999.0 1156.1,1006.1 1181.2,1013.2 1206.3,1020.2 1231.4,1027.0 1256.6,1033.8 1281.8,1040.5 1307.0,1047.2 1332.2,1053.9 1357.4,1060.5 1382.7,1067.1 1407.9,1073.6 1433.1,1080.3 1458.3,1087.4 1483.4,1094.4 1508.6,1101.4 1533.7,1108.4 1558.9,1115.3 1584.1,1122.3 1609.3,1129.2 1634.5,1136.1 1659.7,1143.1 1685.0,1149.8 1710.4,1156.3 1735.7,1162.8 1761.1,1169.2 1786.5,1175.7 1811.8,1182.3 1837.2,1188.8 1862.6,1195.3 1887.9,1201.9 1913.3,1208.5 1938.5,1215.8 1963.7,1223.2 1988.9,1230.5 2014.1,1238.0 2039.3,1245.4 2064.5,1252.9 2089.9,1259.8 2115.3,1266.7 2140.7,1273.7 2166.1,1280.7 2191.5,1287.9 2216.8,1295.1 2242.2,1302.4 2267.4,1309.9 2292.3,1318.0 2316.8,1325.9 2341.0,1333.4 2364.9,1340.4 2388.7,1346.2 2412.3,1351.3 2435.6,1355.6 2458.7,1359.0 2481.6,1361.5 2504.5,1362.8 2527.3,1363.1 2550.0,1362.0 2572.3,1359.3 2594.3,1354.5 2615.5,1347.3 2636.2,1337.0 2656.6,1323.4 2676.7,1307.0 2696.6,1289.3 2717.4,1272.2 2740.3,1258.1 2740.3,1258.1 2717.0,1271.8 2695.9,1288.7 2675.5,1306.0 2655.1,1322.0 2634.3,1334.9 2613.6,1344.4 2592.5,1350.9 2570.8,1354.9 2548.8,1357.0 2526.5,1357.6 2504.1,1357.0 2481.6,1355.4 2459.1,1352.7 2436.3,1349.3 2413.4,1344.9 2390.1,1339.9 2366.4,1334.1 2342.6,1327.3 2318.5,1320.0 2294.0,1312.2 2269.1,1304.3 2243.8,1296.9 2218.4,1289.7 2193.0,1282.5 2167.6,1275.3 2142.2,1268.3 2116.8,1261.4 2091.4,1254.5 2066.0,1247.7 2040.7,1240.2 2015.5,1232.8 1990.3,1225.5 1965.1,1218.1 1939.8,1210.8 1914.6,1203.6 1889.2,1197.0 1863.9,1190.5 1838.5,1184.0 1813.1,1177.5 1787.7,1171.0 1762.3,1164.5 1737.0,1158.0 1711.6,1151.6 1686.2,1145.2 1661.0,1138.5 1635.7,1131.6 1610.5,1124.8 1585.3,1117.9 1560.1,1111.1 1534.9,1104.2 1509.7,1097.3 1484.5,1090.4 1459.3,1083.5 1434.2,1076.5 1408.9,1069.9 1383.7,1063.4 1358.4,1056.9 1333.2,1050.3 1308.0,1043.7 1282.8,1037.1 1257.6,1030.4 1232.4,1023.7 1207.3,1016.9 1182.2,1010.0 1157.1,1003.0 1132.0,995.9 1107.0,988.8 1082.0,981.6 1057.0,974.4 1032.0,967.1 1007.1,959.7 982.2,952.2 957.3,944.7 932.4,937.0 907.6,929.3 882.8,921.7 858.0,913.9 833.2,906.0 808.5,898.0 783.8,890.0 759.1,881.8 734.5,873.5 709.9,865.1 685.3,856.7 660.6,848.5 635.9,840.5 611.1,832.4 586.4,824.2 561.8,815.8 537.2,807.3 512.6,798.7 488.1,789.9 463.5,781.1 439.1,772.1 414.6,763.0 390.2,753.7 365.9,744.3 341.6,734.7 317.5,724.8 293.5,714.5 269.5,704.0 245.7,693.4 221.9,682.6 198.2,671.7 174.5,660.5 151.0,649.1 127.5,637.6 104.0,626.0 80.7,614.1Z" fill="#c5c6c8" stroke="#c5c6c8" stroke-width="0.8"/><path d="M80.7,614.1 104.0,626.0 127.5,637.6 151.0,649.1 174.5,660.5 198.2,671.7 221.9,682.6 245.7,693.4 269.5,704.0 293.5,714.5 317.5,724.8 341.6,734.7 365.9,744.3 390.2,753.7 414.6,763.0 439.1,772.1 463.5,781.1 488.1,789.9 512.6,798.7 537.2,807.3 561.8,815.8 586.4,824.2 611.1,832.4 635.9,840.5 660.6,848.5 685.3,856.7 709.9,865.1 734.5,873.5 759.1,881.8 783.8,890.0 808.5,898.0 833.2,906.0 858.0,913.9 882.8,921.7 907.6,929.3 932.4,937.0 957.3,944.7 982.2,952.2 1007.1,959.7 1032.0,967.1 1057.0,974.4 1082.0,981.6 1107.0,988.8 1132.0,995.9 1157.1,1003.0 1182.2,1010.0 1207.3,1016.9 1232.4,1023.7 1257.6,1030.4 1282.8,1037.1 1308.0,1043.7 1333.2,1050.3 1358.4,1056.9 1383.7,1063.4 1408.9,1069.9 1434.2,1076.5 1459.3,1083.5 1484.5,1090.4 1509.7,1097.3 1534.9,1104.2 1560.1,1111.1 1585.3,1117.9 1610.5,1124.8 1635.7,1131.6 1661.0,1138.5 1686.2,1145.2 1711.6,1151.6 1737.0,1158.0 1762.3,1164.5 1787.7,1171.0 1813.1,1177.5 1838.5,1184.0 1863.9,1190.5 1889.2,1197.0 1914.6,1203.6 1939.8,1210.8 1965.1,1218.1 1990.3,1225.5 2015.5,1232.8 2040.7,1240.2 2066.0,1247.7 2091.4,1254.5 2116.8,1261.4 2142.2,1268.3 2167.6,1275.3 2193.0,1282.5 2218.4,1289.7 2243.8,1296.9 2269.1,1304.3 2294.0,1312.2 2318.5,1320.0 2342.6,1327.3 2366.4,1334.1 2390.1,1339.9 2413.4,1344.9 2436.3,1349.3 2459.1,1352.7 2481.6,1355.4 2504.1,1357.0 2526.5,1357.6 2548.8,1357.0 2570.8,1354.9 2592.5,1350.9 2613.6,1344.4 2634.3,1334.9 2655.1,1322.0 2675.5,1306.0 2695.9,1288.7 2717.0,1271.8 2740.3,1258.1 2740.3,1258.1 2716.3,1271.1 2694.5,1287.5 2673.5,1304.3 2652.3,1319.5 2631.0,1331.3 2610.2,1339.4 2589.3,1344.5 2568.1,1347.4 2546.7,1348.5 2525.1,1348.2 2503.4,1346.9 2481.7,1344.8 2459.8,1341.9 2437.7,1338.2 2415.3,1333.9 2392.4,1328.9 2369.1,1323.4 2345.5,1316.8 2321.5,1309.7 2297.0,1302.2 2272.0,1294.5 2246.7,1287.3 2221.2,1280.2 2195.7,1273.1 2170.3,1266.0 2144.8,1259.1 2119.4,1252.2 2093.9,1245.3 2068.5,1238.5 2043.2,1231.2 2017.9,1223.9 1992.7,1216.6 1967.4,1209.4 1942.1,1202.2 1916.9,1195.1 1891.5,1188.6 1866.1,1182.1 1840.7,1175.6 1815.3,1169.1 1789.9,1162.7 1764.5,1156.3 1739.1,1149.9 1713.7,1143.5 1688.4,1137.2 1663.1,1130.6 1637.8,1123.9 1612.5,1117.1 1587.3,1110.4 1562.0,1103.7 1536.8,1097.0 1511.6,1090.2 1486.4,1083.4 1461.2,1076.7 1436.0,1069.9 1410.8,1063.4 1385.5,1057.0 1360.2,1050.6 1335.0,1044.1 1309.7,1037.6 1284.5,1031.1 1259.3,1024.5 1234.1,1017.9 1208.9,1011.2 1183.8,1004.5 1158.7,997.6 1133.6,990.7 1108.6,983.7 1083.5,976.7 1058.5,969.6 1033.5,962.4 1008.5,955.2 983.6,947.8 958.7,940.5 933.8,933.0 908.9,925.5 884.1,917.9 859.2,910.3 834.4,902.6 809.6,894.8 784.9,886.8 760.2,878.8 735.5,870.7 710.9,862.5 686.3,854.2 661.6,846.1 636.8,838.2 612.1,830.1 587.3,822.0 562.7,813.7 538.0,805.3 513.5,796.7 488.9,788.0 464.3,779.3 439.8,770.3 415.4,761.3 391.0,752.1 366.6,742.8 342.3,733.2 318.1,723.4 294.1,713.3 270.1,702.9 246.2,692.4 222.4,681.7 198.6,670.9 174.8,659.9 151.3,648.6 127.7,637.3 104.1,625.9 80.7,614.1Z" fill="#c2c3c5" fill-opacity="0.83"/><path d="M80.7,614.1 104.1,625.9 127.7,637.3 151.3,648.6 174.8,659.9 198.6,670.9 222.4,681.7 246.2,692.4 270.1,702.9 294.1,713.3 318.1,723.4 342.3,733.2 366.6,742.8 391.0,752.1 415.4,761.3 439.8,770.3 464.3,779.3 488.9,788.0 513.5,796.7 538.0,805.3 562.7,813.7 587.3,822.0 612.1,830.1 636.8,838.2 661.6,846.1 686.3,854.2 710.9,862.5 735.5,870.7 760.2,878.8 784.9,886.8 809.6,894.8 834.4,902.6 859.2,910.3 884.1,917.9 908.9,925.5 933.8,933.0 958.7,940.5 983.6,947.8 1008.5,955.2 1033.5,962.4 1058.5,969.6 1083.5,976.7 1108.6,983.7 1133.6,990.7 1158.7,997.6 1183.8,1004.5 1208.9,1011.2 1234.1,1017.9 1259.3,1024.5 1284.5,1031.1 1309.7,1037.6 1335.0,1044.1 1360.2,1050.6 1385.5,1057.0 1410.8,1063.4 1436.0,1069.9 1461.2,1076.7 1486.4,1083.4 1511.6,1090.2 1536.8,1097.0 1562.0,1103.7 1587.3,1110.4 1612.5,1117.1 1637.8,1123.9 1663.1,1130.6 1688.4,1137.2 1713.7,1143.5 1739.1,1149.9 1764.5,1156.3 1789.9,1162.7 1815.3,1169.1 1840.7,1175.6 1866.1,1182.1 1891.5,1188.6 1916.9,1195.1 1942.1,1202.2 1967.4,1209.4 1992.7,1216.6 2017.9,1223.9 2043.2,1231.2 2068.5,1238.5 2093.9,1245.3 2119.4,1252.2 2144.8,1259.1 2170.3,1266.0 2195.7,1273.1 2221.2,1280.2 2246.7,1287.3 2272.0,1294.5 2297.0,1302.2 2321.5,1309.7 2345.5,1316.8 2369.1,1323.4 2392.4,1328.9 2415.3,1333.9 2437.7,1338.2 2459.8,1341.9 2481.7,1344.8 2503.4,1346.9 2525.1,1348.2 2546.7,1348.5 2568.1,1347.4 2589.3,1344.5 2610.2,1339.4 2631.0,1331.3 2652.3,1319.5 2673.5,1304.3 2694.5,1287.5 2716.3,1271.1 2740.3,1258.1 2740.3,1258.1 2715.6,1270.4 2693.2,1286.4 2671.5,1302.7 2649.6,1317.0 2627.7,1327.7 2606.8,1334.4 2586.2,1338.2 2565.4,1339.8 2544.6,1339.9 2523.7,1338.7 2502.7,1336.8 2481.7,1334.2 2460.5,1331.0 2439.0,1327.2 2417.2,1322.9 2394.8,1318.0 2371.8,1312.6 2348.4,1306.3 2324.5,1299.4 2300.0,1292.3 2275.0,1284.8 2249.5,1277.7 2224.0,1270.7 2198.5,1263.7 2173.0,1256.7 2147.5,1249.8 2122.0,1243.0 2096.5,1236.2 2071.0,1229.4 2045.7,1222.1 2020.4,1215.0 1995.0,1207.8 1969.7,1200.7 1944.4,1193.7 1919.1,1186.7 1893.7,1180.1 1868.3,1173.7 1842.9,1167.2 1817.5,1160.8 1792.1,1154.4 1766.7,1148.1 1741.3,1141.7 1715.9,1135.4 1690.5,1129.1 1665.2,1122.7 1639.9,1116.1 1614.6,1109.5 1589.3,1102.9 1564.0,1096.3 1538.8,1089.7 1513.5,1083.1 1488.3,1076.5 1463.0,1069.9 1437.8,1063.3 1412.6,1056.9 1387.3,1050.6 1362.0,1044.3 1336.7,1037.9 1311.5,1031.5 1286.2,1025.1 1261.0,1018.6 1235.8,1012.1 1210.6,1005.6 1185.5,998.9 1160.3,992.2 1135.2,985.4 1110.1,978.6 1085.1,971.7 1060.0,964.8 1035.0,957.7 1010.0,950.6 985.0,943.5 960.1,936.3 935.1,928.9 910.2,921.6 885.3,914.2 860.5,906.7 835.6,899.1 810.8,891.5 786.0,883.7 761.3,875.9 736.6,867.9 711.9,859.8 687.2,851.7 662.5,843.7 637.7,835.9 613.0,827.9 588.2,819.8 563.5,811.6 538.9,803.2 514.3,794.7 489.7,786.1 465.1,777.4 440.6,768.6 416.2,759.6 391.7,750.5 367.4,741.2 343.0,731.7 318.8,722.0 294.7,712.0 270.7,701.8 246.7,691.4 222.8,680.8 198.9,670.2 175.2,659.3 151.5,648.1 127.8,637.0 104.2,625.7 80.7,614.0Z" fill="#c0c1c3" fill-opacity="0.50"/><path d="M80.7,614.0 104.2,625.7 127.8,637.0 151.5,648.1 175.2,659.3 198.9,670.2 222.8,680.8 246.7,691.4 270.7,701.8 294.7,712.0 318.8,722.0 343.0,731.7 367.4,741.2 391.7,750.5 416.2,759.6 440.6,768.6 465.1,777.4 489.7,786.1 514.3,794.7 538.9,803.2 563.5,811.6 588.2,819.8 613.0,827.9 637.7,835.9 662.5,843.7 687.2,851.7 711.9,859.8 736.6,867.9 761.3,875.9 786.0,883.7 810.8,891.5 835.6,899.1 860.5,906.7 885.3,914.2 910.2,921.6 935.1,928.9 960.1,936.3 985.0,943.5 1010.0,950.6 1035.0,957.7 1060.0,964.8 1085.1,971.7 1110.1,978.6 1135.2,985.4 1160.3,992.2 1185.5,998.9 1210.6,1005.6 1235.8,1012.1 1261.0,1018.6 1286.2,1025.1 1311.5,1031.5 1336.7,1037.9 1362.0,1044.3 1387.3,1050.6 1412.6,1056.9 1437.8,1063.3 1463.0,1069.9 1488.3,1076.5 1513.5,1083.1 1538.8,1089.7 1564.0,1096.3 1589.3,1102.9 1614.6,1109.5 1639.9,1116.1 1665.2,1122.7 1690.5,1129.1 1715.9,1135.4 1741.3,1141.7 1766.7,1148.1 1792.1,1154.4 1817.5,1160.8 1842.9,1167.2 1868.3,1173.7 1893.7,1180.1 1919.1,1186.7 1944.4,1193.7 1969.7,1200.7 1995.0,1207.8 2020.4,1215.0 2045.7,1222.1 2071.0,1229.4 2096.5,1236.2 2122.0,1243.0 2147.5,1249.8 2173.0,1256.7 2198.5,1263.7 2224.0,1270.7 2249.5,1277.7 2275.0,1284.8 2300.0,1292.3 2324.5,1299.4 2348.4,1306.3 2371.8,1312.6 2394.8,1318.0 2417.2,1322.9 2439.0,1327.2 2460.5,1331.0 2481.7,1334.2 2502.7,1336.8 2523.7,1338.7 2544.6,1339.9 2565.4,1339.8 2586.2,1338.2 2606.8,1334.4 2627.7,1327.7 2649.6,1317.0 2671.5,1302.7 2693.2,1286.4 2715.6,1270.4 2740.3,1258.1 2740.3,1258.1 2714.9,1269.7 2691.9,1285.3 2669.4,1301.0 2646.8,1314.5 2624.5,1324.1 2603.4,1329.5 2583.0,1331.8 2562.7,1332.3 2542.5,1331.3 2522.3,1329.3 2502.0,1326.6 2481.7,1323.6 2461.2,1320.1 2440.4,1316.2 2419.1,1311.9 2397.1,1307.1 2374.5,1301.8 2351.3,1295.7 2327.4,1289.2 2303.0,1282.3 2277.9,1275.1 2252.4,1268.1 2226.8,1261.2 2201.2,1254.3 2175.6,1247.4 2150.1,1240.5 2124.5,1233.8 2099.0,1227.0 2073.5,1220.2 2048.1,1213.1 2022.8,1206.0 1997.4,1199.0 1972.1,1192.0 1946.7,1185.1 1921.4,1178.2 1896.0,1171.7 1870.5,1165.3 1845.1,1158.9 1819.7,1152.5 1794.3,1146.2 1768.9,1139.9 1743.4,1133.6 1718.0,1127.3 1692.6,1121.1 1667.3,1114.7 1641.9,1108.3 1616.6,1101.8 1591.3,1095.4 1566.0,1088.9 1540.7,1082.5 1515.4,1076.0 1490.2,1069.6 1464.9,1063.1 1439.6,1056.7 1414.4,1050.4 1389.1,1044.2 1363.8,1037.9 1338.5,1031.7 1313.2,1025.4 1288.0,1019.1 1262.7,1012.7 1237.5,1006.4 1212.3,999.9 1187.1,993.4 1161.9,986.8 1136.8,980.2 1111.7,973.5 1086.6,966.7 1061.5,959.9 1036.5,953.1 1011.4,946.1 986.4,939.1 961.4,932.0 936.5,924.9 911.6,917.7 886.6,910.4 861.7,903.1 836.8,895.7 812.0,888.2 787.2,880.6 762.4,872.9 737.6,865.1 712.9,857.2 688.2,849.2 663.4,841.3 638.6,833.5 613.9,825.6 589.1,817.6 564.4,809.5 539.8,801.2 515.1,792.7 490.5,784.2 466.0,775.6 441.4,766.8 417.0,757.9 392.5,748.9 368.1,739.6 343.8,730.2 319.5,720.6 295.3,710.8 271.2,700.7 247.3,690.4 223.3,680.0 199.3,669.5 175.5,658.7 151.8,647.6 128.0,636.6 104.3,625.5 80.8,613.9Z" fill="#bebfc1" fill-opacity="0.17"/><path d="M270.4,453.8 295.7,450.6 321.0,447.7 346.4,445.0 371.7,442.6 397.1,440.4 422.6,438.5 448.0,436.8 473.4,435.4 498.9,434.2 524.4,433.2 549.9,432.5 575.3,432.0 600.8,431.8 626.3,431.8 651.8,432.0 677.3,432.5 702.8,433.2 728.3,434.1 753.7,435.2 779.2,436.5 804.6,438.1 830.1,439.8 855.5,441.8 880.9,443.9 906.3,446.3 931.6,448.9 957.0,451.6 982.3,454.6 1007.6,457.7 1032.8,461.1 1058.1,464.6 1083.3,468.3 1108.5,472.1 1133.7,476.2 1158.8,480.4 1183.9,484.8 1209.0,489.3 1234.1,494.0 1259.1,498.9 1284.1,503.9 1309.0,509.1 1334.0,514.4 1358.9,519.9 1383.7,525.5 1408.6,531.2 1433.4,537.1 1458.1,543.2 1482.9,549.3 1507.6,555.6 1532.3,562.0 1556.9,568.6 1581.5,575.2 1606.1,582.0 1630.6,588.9 1655.1,595.9 1679.6,603.0 1704.0,610.2 1728.5,617.6 1752.8,625.0 1777.2,632.5 1801.5,640.2 1825.8,647.9 1850.1,655.7 1874.3,663.6 1898.5,671.6 1922.7,679.7 1946.8,687.8 1971.0,696.1 1995.1,704.4 2019.1,712.8 2043.2,721.2 2067.2,729.8 2091.2,738.4 2115.2,747.1 2139.1,755.8 2163.0,764.6 2186.9,773.4 2210.8,782.3 2234.7,791.3 2258.5,800.4 2282.3,809.5 2306.1,818.7 2329.8,828.0 2353.5,837.4 2377.2,846.9 2400.8,856.4 2424.4,866.1 2447.9,875.9 2471.4,885.9 2494.8,896.1 2518.0,906.6 2541.0,917.6 2563.7,929.2 2586.0,941.5 2607.9,954.5 2629.3,968.4 2650.1,983.1 2670.0,999.0 2688.7,1016.4 2705.2,1035.8 2718.4,1057.5 2727.8,1081.2 2733.7,1105.9 2736.7,1131.2 2737.5,1156.7 2736.5,1182.2 2735.1,1207.6 2735.6,1233.1 2740.3,1258.1 2740.3,1258.1 2735.5,1233.1 2735.0,1207.6 2736.3,1182.2 2737.1,1156.7 2736.2,1131.3 2733.0,1106.1 2727.0,1081.4 2717.7,1057.9 2704.5,1036.3 2688.1,1017.0 2669.5,999.6 2649.6,983.8 2628.8,969.1 2607.5,955.2 2585.6,942.2 2563.3,929.9 2540.6,918.3 2517.6,907.3 2494.4,896.8 2471.1,886.6 2447.6,876.7 2424.1,866.9 2400.5,857.2 2376.9,847.6 2353.2,838.2 2329.5,828.8 2305.8,819.5 2282.0,810.3 2258.2,801.2 2234.4,792.1 2210.5,783.1 2186.7,774.2 2162.8,765.4 2138.8,756.6 2114.9,747.8 2090.9,739.2 2066.9,730.6 2042.9,722.0 2018.9,713.6 1994.8,705.2 1970.7,696.9 1946.6,688.6 1922.4,680.5 1898.3,672.4 1874.1,664.4 1849.8,656.4 1825.6,648.6 1801.3,640.9 1777.0,633.2 1752.6,625.7 1728.3,618.2 1703.9,610.9 1679.4,603.6 1654.9,596.5 1630.4,589.5 1605.9,582.6 1581.3,575.8 1556.7,569.1 1532.1,562.6 1507.4,556.1 1482.8,549.8 1458.0,543.7 1433.3,537.6 1408.5,531.7 1383.6,525.9 1358.8,520.3 1333.9,514.8 1309.0,509.5 1284.0,504.3 1259.0,499.3 1234.0,494.4 1209.0,489.7 1183.9,485.1 1158.8,480.7 1133.6,476.5 1108.5,472.4 1083.3,468.5 1058.1,464.8 1032.8,461.3 1007.5,458.0 982.3,454.8 956.9,451.8 931.6,449.1 906.2,446.5 880.9,444.1 855.5,441.9 830.0,440.0 804.6,438.2 779.2,436.6 753.7,435.3 728.3,434.2 702.8,433.3 677.3,432.6 651.8,432.1 626.3,431.9 600.8,431.9 575.3,432.1 549.9,432.6 524.4,433.3 498.9,434.2 473.4,435.4 448.0,436.8 422.6,438.5 397.1,440.4 371.7,442.6 346.4,445.0 321.0,447.7 295.7,450.6 270.4,453.8Z" fill="#a0a1a3" fill-opacity="1.0" stroke="none"/><path d="M270.4,453.8 295.7,450.6 321.0,447.7 346.4,445.0 371.7,442.6 397.1,440.4 422.6,438.5 448.0,436.8 473.4,435.4 498.9,434.2 524.4,433.3 549.9,432.6 575.3,432.1 600.8,431.9 626.3,431.9 651.8,432.1 677.3,432.6 702.8,433.3 728.3,434.2 753.7,435.3 779.2,436.6 804.6,438.2 830.0,440.0 855.5,441.9 880.9,444.1 906.2,446.5 931.6,449.1 956.9,451.8 982.3,454.8 1007.5,458.0 1032.8,461.3 1058.1,464.8 1083.3,468.5 1108.5,472.4 1133.6,476.5 1158.8,480.7 1183.9,485.1 1209.0,489.7 1234.0,494.4 1259.0,499.3 1284.0,504.3 1309.0,509.5 1333.9,514.8 1358.8,520.3 1383.6,525.9 1408.5,531.7 1433.3,537.6 1458.0,543.7 1482.8,549.8 1507.4,556.1 1532.1,562.6 1556.7,569.1 1581.3,575.8 1605.9,582.6 1630.4,589.5 1654.9,596.5 1679.4,603.6 1703.9,610.9 1728.3,618.2 1752.6,625.7 1777.0,633.2 1801.3,640.9 1825.6,648.6 1849.8,656.4 1874.1,664.4 1898.3,672.4 1922.4,680.5 1946.6,688.6 1970.7,696.9 1994.8,705.2 2018.9,713.6 2042.9,722.0 2066.9,730.6 2090.9,739.2 2114.9,747.8 2138.8,756.6 2162.8,765.4 2186.7,774.2 2210.5,783.1 2234.4,792.1 2258.2,801.2 2282.0,810.3 2305.8,819.5 2329.5,828.8 2353.2,838.2 2376.9,847.6 2400.5,857.2 2424.1,866.9 2447.6,876.7 2471.1,886.6 2494.4,896.8 2517.6,907.3 2540.6,918.3 2563.3,929.9 2585.6,942.2 2607.5,955.2 2628.8,969.1 2649.6,983.8 2669.5,999.6 2688.1,1017.0 2704.5,1036.3 2717.7,1057.9 2727.0,1081.4 2733.0,1106.1 2736.2,1131.3 2737.1,1156.7 2736.3,1182.2 2735.0,1207.6 2735.5,1233.1 2740.3,1258.1 2740.3,1258.1 2735.4,1233.1 2734.8,1207.6 2736.0,1182.2 2736.7,1156.7 2735.6,1131.3 2732.4,1106.2 2726.3,1081.7 2717.0,1058.2 2703.8,1036.7 2687.5,1017.5 2669.0,1000.2 2649.1,984.5 2628.4,969.7 2607.0,955.9 2585.2,942.9 2562.9,930.7 2540.2,919.1 2517.3,908.1 2494.1,897.6 2470.7,887.4 2447.3,877.5 2423.8,867.7 2400.2,858.0 2376.6,848.4 2352.9,838.9 2329.2,829.5 2305.5,820.3 2281.7,811.1 2257.9,801.9 2234.1,792.9 2210.2,783.9 2186.4,775.0 2162.5,766.1 2138.5,757.4 2114.6,748.6 2090.6,740.0 2066.6,731.4 2042.6,722.8 2018.6,714.4 1994.5,706.0 1970.4,697.6 1946.3,689.4 1922.2,681.2 1898.0,673.1 1873.8,665.1 1849.6,657.2 1825.4,649.3 1801.1,641.6 1776.8,633.9 1752.4,626.4 1728.1,618.9 1703.7,611.5 1679.2,604.3 1654.8,597.1 1630.3,590.1 1605.7,583.2 1581.2,576.4 1556.6,569.7 1532.0,563.1 1507.3,556.7 1482.6,550.3 1457.9,544.1 1433.1,538.1 1408.4,532.2 1383.5,526.4 1358.7,520.7 1333.8,515.2 1308.9,509.9 1283.9,504.7 1258.9,499.6 1233.9,494.7 1208.9,490.0 1183.8,485.4 1158.7,481.0 1133.6,476.8 1108.4,472.7 1083.2,468.8 1058.0,465.1 1032.8,461.6 1007.5,458.2 982.2,455.0 956.9,452.1 931.6,449.3 906.2,446.7 880.8,444.3 855.4,442.1 830.0,440.1 804.6,438.3 779.2,436.8 753.7,435.4 728.3,434.3 702.8,433.4 677.3,432.7 651.8,432.2 626.3,432.0 600.8,432.0 575.3,432.2 549.9,432.6 524.4,433.3 498.9,434.3 473.4,435.4 448.0,436.8 422.6,438.6 397.1,440.5 371.7,442.6 346.4,445.0 321.0,447.8 295.7,450.7 270.4,453.8Z" fill="#a3a4a6" fill-opacity="1.0" stroke="none"/><path d="M270.4,453.8 295.7,450.7 321.0,447.8 346.4,445.0 371.7,442.6 397.1,440.5 422.6,438.6 448.0,436.8 473.4,435.4 498.9,434.3 524.4,433.3 549.9,432.6 575.3,432.2 600.8,432.0 626.3,432.0 651.8,432.2 677.3,432.7 702.8,433.4 728.3,434.3 753.7,435.4 779.2,436.8 804.6,438.3 830.0,440.1 855.4,442.1 880.8,444.3 906.2,446.7 931.6,449.3 956.9,452.1 982.2,455.0 1007.5,458.2 1032.8,461.6 1058.0,465.1 1083.2,468.8 1108.4,472.7 1133.6,476.8 1158.7,481.0 1183.8,485.4 1208.9,490.0 1233.9,494.7 1258.9,499.6 1283.9,504.7 1308.9,509.9 1333.8,515.2 1358.7,520.7 1383.5,526.4 1408.4,532.2 1433.1,538.1 1457.9,544.1 1482.6,550.3 1507.3,556.7 1532.0,563.1 1556.6,569.7 1581.2,576.4 1605.7,583.2 1630.3,590.1 1654.8,597.1 1679.2,604.3 1703.7,611.5 1728.1,618.9 1752.4,626.4 1776.8,633.9 1801.1,641.6 1825.4,649.3 1849.6,657.2 1873.8,665.1 1898.0,673.1 1922.2,681.2 1946.3,689.4 1970.4,697.6 1994.5,706.0 2018.6,714.4 2042.6,722.8 2066.6,731.4 2090.6,740.0 2114.6,748.6 2138.5,757.4 2162.5,766.1 2186.4,775.0 2210.2,783.9 2234.1,792.9 2257.9,801.9 2281.7,811.1 2305.5,820.3 2329.2,829.5 2352.9,838.9 2376.6,848.4 2400.2,858.0 2423.8,867.7 2447.3,877.5 2470.7,887.4 2494.1,897.6 2517.3,908.1 2540.2,919.1 2562.9,930.7 2585.2,942.9 2607.0,955.9 2628.4,969.7 2649.1,984.5 2669.0,1000.2 2687.5,1017.5 2703.8,1036.7 2717.0,1058.2 2726.3,1081.7 2732.4,1106.2 2735.6,1131.3 2736.7,1156.7 2736.0,1182.2 2734.8,1207.6 2735.4,1233.1 2740.3,1258.1 2740.3,1258.1 2735.4,1233.1 2734.6,1207.6 2735.7,1182.1 2736.3,1156.7 2735.1,1131.4 2731.7,1106.3 2725.5,1081.9 2716.2,1058.6 2703.1,1037.2 2686.8,1018.1 2668.4,1000.9 2648.6,985.1 2627.9,970.4 2606.6,956.6 2584.8,943.6 2562.5,931.4 2539.9,919.8 2516.9,908.9 2493.8,898.3 2470.4,888.2 2447.0,878.2 2423.4,868.4 2399.9,858.8 2376.3,849.2 2352.6,839.7 2328.9,830.3 2305.2,821.0 2281.4,811.8 2257.6,802.7 2233.8,793.7 2210.0,784.7 2186.1,775.8 2162.2,766.9 2138.3,758.1 2114.3,749.4 2090.3,740.7 2066.4,732.1 2042.3,723.6 2018.3,715.1 1994.2,706.8 1970.2,698.4 1946.0,690.2 1921.9,682.0 1897.8,673.9 1873.6,665.9 1849.4,657.9 1825.1,650.0 1800.9,642.3 1776.6,634.6 1752.2,627.0 1727.9,619.5 1703.5,612.2 1679.0,604.9 1654.6,597.7 1630.1,590.7 1605.6,583.7 1581.0,576.9 1556.4,570.2 1531.8,563.6 1507.2,557.2 1482.5,550.8 1457.8,544.6 1433.0,538.6 1408.2,532.6 1383.4,526.8 1358.6,521.2 1333.7,515.7 1308.8,510.3 1283.8,505.1 1258.9,500.0 1233.9,495.1 1208.8,490.4 1183.8,485.8 1158.7,481.3 1133.5,477.1 1108.4,473.0 1083.2,469.1 1058.0,465.4 1032.7,461.8 1007.5,458.4 982.2,455.3 956.9,452.3 931.6,449.5 906.2,446.9 880.8,444.5 855.4,442.3 830.0,440.3 804.6,438.5 779.2,436.9 753.7,435.5 728.2,434.4 702.8,433.5 677.3,432.8 651.8,432.3 626.3,432.1 600.8,432.0 575.3,432.2 549.9,432.7 524.4,433.4 498.9,434.3 473.4,435.5 448.0,436.9 422.6,438.6 397.1,440.5 371.7,442.6 346.4,445.1 321.0,447.8 295.7,450.7 270.4,453.8Z" fill="#a6a7a9" fill-opacity="1.0" stroke="none"/><path d="M270.4,453.8 295.7,450.7 321.0,447.8 346.4,445.1 371.7,442.6 397.1,440.5 422.6,438.6 448.0,436.9 473.4,435.5 498.9,434.3 524.4,433.4 549.9,432.7 575.3,432.2 600.8,432.0 626.3,432.1 651.8,432.3 677.3,432.8 702.8,433.5 728.2,434.4 753.7,435.5 779.2,436.9 804.6,438.5 830.0,440.3 855.4,442.3 880.8,444.5 906.2,446.9 931.6,449.5 956.9,452.3 982.2,455.3 1007.5,458.4 1032.7,461.8 1058.0,465.4 1083.2,469.1 1108.4,473.0 1133.5,477.1 1158.7,481.3 1183.8,485.8 1208.8,490.4 1233.9,495.1 1258.9,500.0 1283.8,505.1 1308.8,510.3 1333.7,515.7 1358.6,521.2 1383.4,526.8 1408.2,532.6 1433.0,538.6 1457.8,544.6 1482.5,550.8 1507.2,557.2 1531.8,563.6 1556.4,570.2 1581.0,576.9 1605.6,583.7 1630.1,590.7 1654.6,597.7 1679.0,604.9 1703.5,612.2 1727.9,619.5 1752.2,627.0 1776.6,634.6 1800.9,642.3 1825.1,650.0 1849.4,657.9 1873.6,665.9 1897.8,673.9 1921.9,682.0 1946.0,690.2 1970.2,698.4 1994.2,706.8 2018.3,715.1 2042.3,723.6 2066.4,732.1 2090.3,740.7 2114.3,749.4 2138.3,758.1 2162.2,766.9 2186.1,775.8 2210.0,784.7 2233.8,793.7 2257.6,802.7 2281.4,811.8 2305.2,821.0 2328.9,830.3 2352.6,839.7 2376.3,849.2 2399.9,858.8 2423.4,868.4 2447.0,878.2 2470.4,888.2 2493.8,898.3 2516.9,908.9 2539.9,919.8 2562.5,931.4 2584.8,943.6 2606.6,956.6 2627.9,970.4 2648.6,985.1 2668.4,1000.9 2686.8,1018.1 2703.1,1037.2 2716.2,1058.6 2725.5,1081.9 2731.7,1106.3 2735.1,1131.4 2736.3,1156.7 2735.7,1182.1 2734.6,1207.6 2735.4,1233.1 2740.3,1258.1 2740.3,1258.1 2735.2,1233.1 2734.3,1207.6 2735.2,1182.1 2735.5,1156.7 2734.0,1131.4 2730.3,1106.5 2723.8,1082.4 2714.3,1059.6 2701.4,1038.5 2685.3,1019.6 2667.0,1002.5 2647.3,986.9 2626.7,972.2 2605.5,958.5 2583.7,945.5 2561.5,933.3 2538.9,921.8 2516.0,910.8 2492.9,900.3 2469.6,890.2 2446.1,880.2 2422.6,870.4 2399.1,860.8 2375.4,851.2 2351.8,841.7 2328.1,832.3 2304.4,823.1 2280.6,813.9 2256.9,804.7 2233.0,795.7 2209.2,786.7 2185.3,777.8 2161.4,768.9 2137.5,760.1 2113.6,751.3 2089.7,742.6 2065.7,734.0 2041.7,725.4 2017.7,716.9 1993.7,708.5 1969.6,700.1 1945.5,691.8 1921.4,683.6 1897.2,675.4 1873.1,667.4 1848.9,659.4 1824.7,651.5 1800.4,643.7 1776.1,636.0 1751.8,628.4 1727.5,620.9 1703.1,613.5 1678.7,606.2 1654.2,599.0 1629.8,591.9 1605.3,584.9 1580.7,578.1 1556.2,571.3 1531.5,564.7 1506.9,558.2 1482.2,551.9 1457.5,545.6 1432.8,539.5 1408.0,533.6 1383.2,527.7 1358.4,522.0 1333.5,516.5 1308.6,511.1 1283.7,505.8 1258.7,500.7 1233.7,495.8 1208.7,491.0 1183.6,486.4 1158.6,482.0 1133.4,477.7 1108.3,473.6 1083.1,469.6 1057.9,465.9 1032.7,462.3 1007.4,458.9 982.1,455.7 956.8,452.7 931.5,449.9 906.2,447.2 880.8,444.8 855.4,442.6 830.0,440.6 804.6,438.8 779.1,437.2 753.7,435.8 728.2,434.7 702.8,433.7 677.3,432.9 651.8,432.4 626.3,432.2 600.8,432.2 575.4,432.3 549.9,432.8 524.4,433.5 498.9,434.5 473.5,435.5 448.0,436.9 422.6,438.7 397.2,440.6 371.7,442.7 346.4,445.1 321.0,447.9 295.7,450.8 270.4,453.8Z" fill="#a8a9ab" fill-opacity="1.0" stroke="none"/><path d="M270.4,453.8 295.7,450.8 321.0,447.9 346.4,445.1 371.7,442.7 397.2,440.6 422.6,438.7 448.0,436.9 473.5,435.5 498.9,434.5 524.4,433.5 549.9,432.8 575.4,432.3 600.8,432.2 626.3,432.2 651.8,432.4 677.3,432.9 702.8,433.7 728.2,434.7 753.7,435.8 779.1,437.2 804.6,438.8 830.0,440.6 855.4,442.6 880.8,444.8 906.2,447.2 931.5,449.9 956.8,452.7 982.1,455.7 1007.4,458.9 1032.7,462.3 1057.9,465.9 1083.1,469.6 1108.3,473.6 1133.4,477.7 1158.6,482.0 1183.6,486.4 1208.7,491.0 1233.7,495.8 1258.7,500.7 1283.7,505.8 1308.6,511.1 1333.5,516.5 1358.4,522.0 1383.2,527.7 1408.0,533.6 1432.8,539.5 1457.5,545.6 1482.2,551.9 1506.9,558.2 1531.5,564.7 1556.2,571.3 1580.7,578.1 1605.3,584.9 1629.8,591.9 1654.2,599.0 1678.7,606.2 1703.1,613.5 1727.5,620.9 1751.8,628.4 1776.1,636.0 1800.4,643.7 1824.7,651.5 1848.9,659.4 1873.1,667.4 1897.2,675.4 1921.4,683.6 1945.5,691.8 1969.6,700.1 1993.7,708.5 2017.7,716.9 2041.7,725.4 2065.7,734.0 2089.7,742.6 2113.6,751.3 2137.5,760.1 2161.4,768.9 2185.3,777.8 2209.2,786.7 2233.0,795.7 2256.9,804.7 2280.6,813.9 2304.4,823.1 2328.1,832.3 2351.8,841.7 2375.4,851.2 2399.1,860.8 2422.6,870.4 2446.1,880.2 2469.6,890.2 2492.9,900.3 2516.0,910.8 2538.9,921.8 2561.5,933.3 2583.7,945.5 2605.5,958.5 2626.7,972.2 2647.3,986.9 2667.0,1002.5 2685.3,1019.6 2701.4,1038.5 2714.3,1059.6 2723.8,1082.4 2730.3,1106.5 2734.0,1131.4 2735.5,1156.7 2735.2,1182.1 2734.3,1207.6 2735.2,1233.1 2740.3,1258.1 2740.3,1258.1 2735.1,1233.2 2734.0,1207.6 2734.7,1182.1 2734.7,1156.7 2732.9,1131.5 2728.9,1106.8 2722.1,1083.0 2712.3,1060.5 2699.6,1039.8 2683.7,1021.1 2665.6,1004.2 2646.0,988.6 2625.5,974.0 2604.3,960.3 2582.6,947.4 2560.5,935.2 2537.9,923.7 2515.1,912.8 2492.0,902.3 2468.7,892.1 2445.3,882.2 2421.8,872.4 2398.2,862.8 2374.6,853.2 2351.0,843.7 2327.3,834.4 2303.6,825.1 2279.9,815.9 2256.1,806.8 2232.3,797.7 2208.4,788.7 2184.6,779.8 2160.7,771.0 2136.8,762.1 2112.9,753.3 2089.0,744.5 2065.0,735.8 2041.1,727.2 2017.1,718.6 1993.1,710.2 1969.0,701.7 1944.9,693.4 1920.9,685.2 1896.7,677.0 1872.6,668.9 1848.4,660.9 1824.2,652.9 1800.0,645.1 1775.7,637.4 1751.4,629.7 1727.1,622.2 1702.7,614.7 1678.3,607.4 1653.9,600.2 1629.4,593.1 1604.9,586.1 1580.4,579.2 1555.9,572.4 1531.3,565.8 1506.6,559.3 1482.0,552.9 1457.3,546.6 1432.6,540.5 1407.8,534.5 1383.0,528.6 1358.2,522.9 1333.3,517.3 1308.5,511.9 1283.5,506.6 1258.6,501.5 1233.6,496.5 1208.6,491.7 1183.5,487.1 1158.4,482.6 1133.3,478.3 1108.2,474.2 1083.0,470.2 1057.8,466.4 1032.6,462.8 1007.4,459.4 982.1,456.1 956.8,453.1 931.5,450.3 906.1,447.6 880.8,445.2 855.4,442.9 830.0,440.9 804.6,439.1 779.1,437.4 753.7,436.0 728.2,434.9 702.8,433.9 677.3,433.1 651.8,432.6 626.3,432.4 600.8,432.4 575.4,432.5 549.9,432.9 524.4,433.6 498.9,434.6 473.5,435.6 448.0,437.0 422.6,438.8 397.2,440.7 371.7,442.7 346.4,445.1 321.1,448.0 295.7,450.8 270.4,453.8Z" fill="#abacae" fill-opacity="1.0" stroke="none"/><path d="M270.4,453.8 295.7,450.8 321.1,448.0 346.4,445.1 371.7,442.7 397.2,440.7 422.6,438.8 448.0,437.0 473.5,435.6 498.9,434.6 524.4,433.6 549.9,432.9 575.4,432.5 600.8,432.4 626.3,432.4 651.8,432.6 677.3,433.1 702.8,433.9 728.2,434.9 753.7,436.0 779.1,437.4 804.6,439.1 830.0,440.9 855.4,442.9 880.8,445.2 906.1,447.6 931.5,450.3 956.8,453.1 982.1,456.1 1007.4,459.4 1032.6,462.8 1057.8,466.4 1083.0,470.2 1108.2,474.2 1133.3,478.3 1158.4,482.6 1183.5,487.1 1208.6,491.7 1233.6,496.5 1258.6,501.5 1283.5,506.6 1308.5,511.9 1333.3,517.3 1358.2,522.9 1383.0,528.6 1407.8,534.5 1432.6,540.5 1457.3,546.6 1482.0,552.9 1506.6,559.3 1531.3,565.8 1555.9,572.4 1580.4,579.2 1604.9,586.1 1629.4,593.1 1653.9,600.2 1678.3,607.4 1702.7,614.7 1727.1,622.2 1751.4,629.7 1775.7,637.4 1800.0,645.1 1824.2,652.9 1848.4,660.9 1872.6,668.9 1896.7,677.0 1920.9,685.2 1944.9,693.4 1969.0,701.7 1993.1,710.2 2017.1,718.6 2041.1,727.2 2065.0,735.8 2089.0,744.5 2112.9,753.3 2136.8,762.1 2160.7,771.0 2184.6,779.8 2208.4,788.7 2232.3,797.7 2256.1,806.8 2279.9,815.9 2303.6,825.1 2327.3,834.4 2351.0,843.7 2374.6,853.2 2398.2,862.8 2421.8,872.4 2445.3,882.2 2468.7,892.1 2492.0,902.3 2515.1,912.8 2537.9,923.7 2560.5,935.2 2582.6,947.4 2604.3,960.3 2625.5,974.0 2646.0,988.6 2665.6,1004.2 2683.7,1021.1 2699.6,1039.8 2712.3,1060.5 2722.1,1083.0 2728.9,1106.8 2732.9,1131.5 2734.7,1156.7 2734.7,1182.1 2734.0,1207.6 2735.1,1233.2 2740.3,1258.1 2740.3,1258.1 2735.0,1233.2 2733.6,1207.6 2734.1,1182.1 2733.9,1156.7 2731.9,1131.6 2727.5,1107.0 2720.4,1083.5 2710.4,1061.5 2697.9,1041.0 2682.1,1022.6 2664.2,1005.8 2644.7,990.3 2624.3,975.8 2603.2,962.1 2581.5,949.3 2559.5,937.1 2537.0,925.7 2514.2,914.7 2491.1,904.3 2467.8,894.1 2444.4,884.2 2421.0,874.4 2397.4,864.8 2373.8,855.2 2350.2,845.7 2326.5,836.4 2302.8,827.1 2279.1,817.9 2255.3,808.8 2231.5,799.7 2207.7,790.8 2183.8,781.9 2159.9,773.0 2136.1,764.1 2112.2,755.2 2088.3,746.4 2064.4,737.7 2040.4,729.0 2016.5,720.4 1992.5,711.9 1968.5,703.4 1944.4,695.0 1920.3,686.7 1896.2,678.5 1872.1,670.4 1847.9,662.3 1823.7,654.4 1799.5,646.5 1775.3,638.7 1751.0,631.1 1726.7,623.5 1702.3,616.0 1677.9,608.7 1653.5,601.4 1629.1,594.3 1604.6,587.2 1580.1,580.3 1555.6,573.5 1531.0,566.8 1506.4,560.3 1481.7,553.9 1457.1,547.6 1432.3,541.4 1407.6,535.4 1382.8,529.5 1358.0,523.7 1333.2,518.2 1308.3,512.7 1283.4,507.4 1258.4,502.2 1233.5,497.3 1208.4,492.4 1183.4,487.7 1158.3,483.2 1133.2,478.9 1108.1,474.7 1082.9,470.7 1057.8,466.9 1032.5,463.3 1007.3,459.9 982.0,456.6 956.7,453.5 931.4,450.7 906.1,448.0 880.7,445.5 855.4,443.3 830.0,441.2 804.5,439.3 779.1,437.7 753.7,436.3 728.2,435.1 702.8,434.1 677.3,433.3 651.8,432.8 626.3,432.6 600.8,432.5 575.4,432.6 549.9,433.0 524.4,433.8 498.9,434.7 473.5,435.7 448.0,437.0 422.6,438.9 397.2,440.8 371.8,442.7 346.4,445.2 321.1,448.1 295.7,450.9 270.4,453.8Z" fill="#aeafb1" fill-opacity="1.0" stroke="none"/><path d="M270.4,453.8 295.7,450.9 321.1,448.1 346.4,445.2 371.8,442.7 397.2,440.8 422.6,438.9 448.0,437.0 473.5,435.7 498.9,434.7 524.4,433.8 549.9,433.0 575.4,432.6 600.8,432.5 626.3,432.6 651.8,432.8 677.3,433.3 702.8,434.1 728.2,435.1 753.7,436.3 779.1,437.7 804.5,439.3 830.0,441.2 855.4,443.3 880.7,445.5 906.1,448.0 931.4,450.7 956.7,453.5 982.0,456.6 1007.3,459.9 1032.5,463.3 1057.8,466.9 1082.9,470.7 1108.1,474.7 1133.2,478.9 1158.3,483.2 1183.4,487.7 1208.4,492.4 1233.5,497.3 1258.4,502.2 1283.4,507.4 1308.3,512.7 1333.2,518.2 1358.0,523.7 1382.8,529.5 1407.6,535.4 1432.3,541.4 1457.1,547.6 1481.7,553.9 1506.4,560.3 1531.0,566.8 1555.6,573.5 1580.1,580.3 1604.6,587.2 1629.1,594.3 1653.5,601.4 1677.9,608.7 1702.3,616.0 1726.7,623.5 1751.0,631.1 1775.3,638.7 1799.5,646.5 1823.7,654.4 1847.9,662.3 1872.1,670.4 1896.2,678.5 1920.3,686.7 1944.4,695.0 1968.5,703.4 1992.5,711.9 2016.5,720.4 2040.4,729.0 2064.4,737.7 2088.3,746.4 2112.2,755.2 2136.1,764.1 2159.9,773.0 2183.8,781.9 2207.7,790.8 2231.5,799.7 2255.3,808.8 2279.1,817.9 2302.8,827.1 2326.5,836.4 2350.2,845.7 2373.8,855.2 2397.4,864.8 2421.0,874.4 2444.4,884.2 2467.8,894.1 2491.1,904.3 2514.2,914.7 2537.0,925.7 2559.5,937.1 2581.5,949.3 2603.2,962.1 2624.3,975.8 2644.7,990.3 2664.2,1005.8 2682.1,1022.6 2697.9,1041.0 2710.4,1061.5 2720.4,1083.5 2727.5,1107.0 2731.9,1131.6 2733.9,1156.7 2734.1,1182.1 2733.6,1207.6 2735.0,1233.2 2740.3,1258.1 2740.3,1258.1 2734.6,1233.2 2732.8,1207.6 2732.8,1182.0 2731.9,1156.7 2729.1,1131.8 2724.1,1107.7 2716.3,1084.8 2705.8,1063.8 2693.3,1044.4 2678.0,1026.5 2660.5,1010.1 2641.3,994.8 2621.1,980.5 2600.2,966.9 2578.7,954.2 2556.8,942.2 2534.5,930.7 2511.8,919.9 2488.8,909.5 2465.6,899.3 2442.2,889.5 2418.8,879.7 2395.3,870.0 2371.7,860.5 2348.1,851.0 2324.5,841.6 2300.8,832.3 2277.1,823.1 2253.4,813.9 2229.6,804.7 2205.8,795.7 2182.0,786.6 2158.2,777.6 2134.4,768.7 2110.6,759.7 2086.7,750.8 2062.8,742.0 2038.9,733.3 2015.0,724.6 1991.0,716.0 1967.1,707.5 1943.0,699.0 1919.0,690.7 1894.9,682.3 1870.9,674.1 1846.7,666.0 1822.6,658.0 1798.4,650.0 1774.2,642.2 1749.9,634.5 1725.7,626.8 1701.4,619.3 1677.0,611.8 1652.6,604.5 1628.2,597.3 1603.8,590.2 1579.3,583.2 1554.8,576.3 1530.3,569.5 1505.7,562.9 1481.1,556.4 1456.5,550.0 1431.8,543.8 1407.1,537.7 1382.3,531.7 1357.5,525.9 1332.7,520.2 1307.9,514.7 1283.0,509.3 1258.1,504.1 1233.1,499.1 1208.1,494.1 1183.1,489.4 1158.1,484.8 1133.0,480.5 1107.9,476.2 1082.7,472.1 1057.6,468.2 1032.4,464.6 1007.2,461.0 981.9,457.7 956.6,454.6 931.3,451.7 906.0,448.9 880.7,446.4 855.3,444.1 829.9,442.0 804.5,440.1 779.1,438.3 753.6,436.9 728.2,435.7 702.7,434.7 677.3,433.8 651.8,433.2 626.3,433.0 600.8,432.9 575.4,432.9 549.9,433.2 524.4,434.1 498.9,435.0 473.5,435.9 448.0,437.2 422.6,439.1 397.2,441.0 371.8,442.8 346.4,445.3 321.1,448.4 295.7,451.1 270.4,453.8Z" fill="#b0b1b3" fill-opacity="0.5" stroke="none"/><path d="M270.4,453.8 295.7,451.1 321.1,448.4 346.4,445.3 371.8,442.8 397.2,441.0 422.6,439.1 448.0,437.2 473.5,435.9 498.9,435.0 524.4,434.1 549.9,433.2 575.4,432.9 600.8,432.9 626.3,433.0 651.8,433.2 677.3,433.8 702.7,434.7 728.2,435.7 753.6,436.9 779.1,438.3 804.5,440.1 829.9,442.0 855.3,444.1 880.7,446.4 906.0,448.9 931.3,451.7 956.6,454.6 981.9,457.7 1007.2,461.0 1032.4,464.6 1057.6,468.2 1082.7,472.1 1107.9,476.2 1133.0,480.5 1158.1,484.8 1183.1,489.4 1208.1,494.1 1233.1,499.1 1258.1,504.1 1283.0,509.3 1307.9,514.7 1332.7,520.2 1357.5,525.9 1382.3,531.7 1407.1,537.7 1431.8,543.8 1456.5,550.0 1481.1,556.4 1505.7,562.9 1530.3,569.5 1554.8,576.3 1579.3,583.2 1603.8,590.2 1628.2,597.3 1652.6,604.5 1677.0,611.8 1701.4,619.3 1725.7,626.8 1749.9,634.5 1774.2,642.2 1798.4,650.0 1822.6,658.0 1846.7,666.0 1870.9,674.1 1894.9,682.3 1919.0,690.7 1943.0,699.0 1967.1,707.5 1991.0,716.0 2015.0,724.6 2038.9,733.3 2062.8,742.0 2086.7,750.8 2110.6,759.7 2134.4,768.7 2158.2,777.6 2182.0,786.6 2205.8,795.7 2229.6,804.7 2253.4,813.9 2277.1,823.1 2300.8,832.3 2324.5,841.6 2348.1,851.0 2371.7,860.5 2395.3,870.0 2418.8,879.7 2442.2,889.5 2465.6,899.3 2488.8,909.5 2511.8,919.9 2534.5,930.7 2556.8,942.2 2578.7,954.2 2600.2,966.9 2621.1,980.5 2641.3,994.8 2660.5,1010.1 2678.0,1026.5 2693.3,1044.4 2705.8,1063.8 2716.3,1084.8 2724.1,1107.7 2729.1,1131.8 2731.9,1156.7 2732.8,1182.0 2732.8,1207.6 2734.6,1233.2 2740.3,1258.1 2740.3,1258.1 2734.3,1233.2 2732.0,1207.6 2731.4,1181.9 2729.9,1156.7 2726.4,1132.0 2720.6,1108.3 2712.2,1086.1 2701.2,1066.1 2688.7,1047.7 2674.0,1030.4 2656.8,1014.4 2637.9,999.4 2617.9,985.2 2597.2,971.8 2575.9,959.1 2554.2,947.2 2532.0,935.8 2509.4,925.0 2486.5,914.6 2463.4,904.6 2440.1,894.7 2416.6,884.9 2393.1,875.3 2369.6,865.7 2346.0,856.3 2322.4,846.9 2298.7,837.6 2275.1,828.2 2251.4,818.9 2227.7,809.7 2204.0,800.5 2180.3,791.4 2156.5,782.3 2132.7,773.3 2108.9,764.3 2085.1,755.3 2061.3,746.4 2037.4,737.6 2013.5,728.8 1989.6,720.1 1965.7,711.5 1941.7,703.0 1917.7,694.6 1893.7,686.2 1869.6,677.9 1845.5,669.7 1821.4,661.6 1797.3,653.6 1773.1,645.7 1748.9,637.9 1724.7,630.1 1700.4,622.5 1676.1,615.0 1651.8,607.6 1627.4,600.2 1603.0,593.1 1578.5,586.0 1554.1,579.0 1529.6,572.2 1505.0,565.5 1480.5,559.0 1455.8,552.5 1431.2,546.2 1406.5,540.0 1381.8,534.0 1357.1,528.1 1332.3,522.3 1307.4,516.7 1282.6,511.3 1257.7,506.0 1232.8,500.9 1207.8,495.9 1182.8,491.0 1157.8,486.4 1132.7,482.0 1107.7,477.6 1082.5,473.5 1057.4,469.6 1032.2,465.9 1007.0,462.2 981.8,458.8 956.5,455.7 931.2,452.8 905.9,449.9 880.6,447.2 855.2,444.9 829.8,442.8 804.5,440.8 779.0,439.0 753.6,437.5 728.2,436.3 702.7,435.2 677.3,434.2 651.8,433.6 626.3,433.4 600.8,433.3 575.4,433.2 549.9,433.5 524.4,434.4 499.0,435.3 473.5,436.0 448.0,437.3 422.6,439.3 397.2,441.3 371.8,442.9 346.4,445.4 321.1,448.6 295.8,451.2 270.4,453.8Z" fill="#b1b2b4" fill-opacity="0.5" stroke="none"/><path d="M270.4,453.8 295.8,451.2 321.1,448.6 346.4,445.4 371.8,442.9 397.2,441.3 422.6,439.3 448.0,437.3 473.5,436.0 499.0,435.3 524.4,434.4 549.9,433.5 575.4,433.2 600.8,433.3 626.3,433.4 651.8,433.6 677.3,434.2 702.7,435.2 728.2,436.3 753.6,437.5 779.0,439.0 804.5,440.8 829.8,442.8 855.2,444.9 880.6,447.2 905.9,449.9 931.2,452.8 956.5,455.7 981.8,458.8 1007.0,462.2 1032.2,465.9 1057.4,469.6 1082.5,473.5 1107.7,477.6 1132.7,482.0 1157.8,486.4 1182.8,491.0 1207.8,495.9 1232.8,500.9 1257.7,506.0 1282.6,511.3 1307.4,516.7 1332.3,522.3 1357.1,528.1 1381.8,534.0 1406.5,540.0 1431.2,546.2 1455.8,552.5 1480.5,559.0 1505.0,565.5 1529.6,572.2 1554.1,579.0 1578.5,586.0 1603.0,593.1 1627.4,600.2 1651.8,607.6 1676.1,615.0 1700.4,622.5 1724.7,630.1 1748.9,637.9 1773.1,645.7 1797.3,653.6 1821.4,661.6 1845.5,669.7 1869.6,677.9 1893.7,686.2 1917.7,694.6 1941.7,703.0 1965.7,711.5 1989.6,720.1 2013.5,728.8 2037.4,737.6 2061.3,746.4 2085.1,755.3 2108.9,764.3 2132.7,773.3 2156.5,782.3 2180.3,791.4 2204.0,800.5 2227.7,809.7 2251.4,818.9 2275.1,828.2 2298.7,837.6 2322.4,846.9 2346.0,856.3 2369.6,865.7 2393.1,875.3 2416.6,884.9 2440.1,894.7 2463.4,904.6 2486.5,914.6 2509.4,925.0 2532.0,935.8 2554.2,947.2 2575.9,959.1 2597.2,971.8 2617.9,985.2 2637.9,999.4 2656.8,1014.4 2674.0,1030.4 2688.7,1047.7 2701.2,1066.1 2712.2,1086.1 2720.6,1108.3 2726.4,1132.0 2729.9,1156.7 2731.4,1181.9 2732.0,1207.6 2734.3,1233.2 2740.3,1258.1 2740.3,1258.1 2733.9,1233.3 2731.1,1207.6 2730.1,1181.9 2727.9,1156.7 2723.7,1132.2 2717.1,1108.9 2708.1,1087.4 2696.6,1068.4 2684.1,1051.0 2669.9,1034.3 2653.1,1018.7 2634.5,1003.9 2614.7,989.9 2594.2,976.6 2573.1,964.0 2551.5,952.2 2529.4,940.9 2507.0,930.2 2484.2,919.8 2461.1,909.8 2437.9,899.9 2414.5,890.2 2391.0,880.5 2367.5,871.0 2343.9,861.5 2320.3,852.2 2296.7,842.8 2273.1,833.4 2249.5,824.0 2225.9,814.7 2202.2,805.4 2178.5,796.2 2154.8,787.0 2131.0,777.8 2107.3,768.8 2083.5,759.7 2059.7,750.8 2035.9,741.9 2012.0,733.1 1988.2,724.3 1964.3,715.6 1940.3,707.0 1916.4,698.5 1892.4,690.0 1868.4,681.7 1844.3,673.4 1820.3,665.2 1796.2,657.1 1772.0,649.1 1747.9,641.2 1723.7,633.4 1699.4,625.7 1675.2,618.1 1650.9,610.6 1626.5,603.2 1602.2,596.0 1577.8,588.9 1553.3,581.8 1528.9,574.9 1504.4,568.1 1479.8,561.5 1455.2,554.9 1430.6,548.6 1406.0,542.4 1381.3,536.2 1356.6,530.2 1331.8,524.4 1307.0,518.8 1282.2,513.2 1257.3,507.8 1232.4,502.7 1207.5,497.6 1182.5,492.7 1157.5,488.0 1132.5,483.5 1107.4,479.1 1082.3,474.8 1057.2,470.9 1032.0,467.2 1006.8,463.4 981.6,459.9 956.4,456.7 931.1,453.8 905.8,450.8 880.5,448.1 855.2,445.7 829.8,443.6 804.4,441.5 779.0,439.6 753.6,438.1 728.1,436.9 702.7,435.7 677.3,434.7 651.8,434.0 626.3,433.9 600.8,433.7 575.4,433.5 549.9,433.8 524.4,434.6 499.0,435.6 473.5,436.2 448.0,437.5 422.6,439.6 397.2,441.5 371.8,443.0 346.4,445.5 321.1,448.9 295.8,451.4 270.4,453.8Z" fill="#b2b3b5" fill-opacity="0.5" stroke="none"/><path d="M270.4,453.8 295.8,451.4 321.1,448.9 346.4,445.5 371.8,443.0 397.2,441.5 422.6,439.6 448.0,437.5 473.5,436.2 499.0,435.6 524.4,434.6 549.9,433.8 575.4,433.5 600.8,433.7 626.3,433.9 651.8,434.0 677.3,434.7 702.7,435.7 728.1,436.9 753.6,438.1 779.0,439.6 804.4,441.5 829.8,443.6 855.2,445.7 880.5,448.1 905.8,450.8 931.1,453.8 956.4,456.7 981.6,459.9 1006.8,463.4 1032.0,467.2 1057.2,470.9 1082.3,474.8 1107.4,479.1 1132.5,483.5 1157.5,488.0 1182.5,492.7 1207.5,497.6 1232.4,502.7 1257.3,507.8 1282.2,513.2 1307.0,518.8 1331.8,524.4 1356.6,530.2 1381.3,536.2 1406.0,542.4 1430.6,548.6 1455.2,554.9 1479.8,561.5 1504.4,568.1 1528.9,574.9 1553.3,581.8 1577.8,588.9 1602.2,596.0 1626.5,603.2 1650.9,610.6 1675.2,618.1 1699.4,625.7 1723.7,633.4 1747.9,641.2 1772.0,649.1 1796.2,657.1 1820.3,665.2 1844.3,673.4 1868.4,681.7 1892.4,690.0 1916.4,698.5 1940.3,707.0 1964.3,715.6 1988.2,724.3 2012.0,733.1 2035.9,741.9 2059.7,750.8 2083.5,759.7 2107.3,768.8 2131.0,777.8 2154.8,787.0 2178.5,796.2 2202.2,805.4 2225.9,814.7 2249.5,824.0 2273.1,833.4 2296.7,842.8 2320.3,852.2 2343.9,861.5 2367.5,871.0 2391.0,880.5 2414.5,890.2 2437.9,899.9 2461.1,909.8 2484.2,919.8 2507.0,930.2 2529.4,940.9 2551.5,952.2 2573.1,964.0 2594.2,976.6 2614.7,989.9 2634.5,1003.9 2653.1,1018.7 2669.9,1034.3 2684.1,1051.0 2696.6,1068.4 2708.1,1087.4 2717.1,1108.9 2723.7,1132.2 2727.9,1156.7 2730.1,1181.9 2731.1,1207.6 2733.9,1233.3 2740.3,1258.1 2740.3,1258.1 2733.1,1233.4 2729.2,1207.5 2726.8,1181.7 2723.1,1156.7 2717.2,1132.7 2708.8,1110.4 2698.2,1090.5 2686.0,1073.7 2674.9,1057.7 2661.7,1042.2 2645.7,1027.3 2627.7,1013.0 2608.3,999.2 2588.2,986.2 2567.5,973.9 2546.2,962.2 2524.4,951.1 2502.2,940.4 2479.6,930.2 2456.7,920.2 2433.5,910.4 2410.1,900.6 2386.7,891.0 2363.2,881.5 2339.7,872.1 2316.2,862.7 2292.6,853.4 2269.0,844.1 2245.4,834.8 2221.7,825.6 2198.0,816.5 2174.3,807.3 2150.6,798.2 2127.0,788.9 2103.3,779.7 2079.7,770.4 2056.0,761.3 2032.2,752.2 2008.5,743.2 1984.7,734.2 1960.9,725.4 1937.1,716.6 1913.2,707.9 1889.3,699.2 1865.4,690.7 1841.5,682.3 1817.5,673.9 1793.5,665.6 1769.5,657.4 1745.4,649.4 1721.3,641.3 1697.1,633.4 1673.0,625.7 1648.7,618.0 1624.5,610.4 1600.2,603.0 1575.9,595.7 1551.6,588.4 1527.2,581.3 1502.7,574.4 1478.3,567.6 1453.8,560.8 1429.3,554.3 1404.7,547.9 1380.1,541.5 1355.4,535.4 1330.7,529.4 1306.0,523.6 1281.2,517.8 1256.4,512.3 1231.6,507.0 1206.7,501.7 1181.8,496.6 1156.9,491.8 1131.9,487.2 1106.9,482.5 1081.8,478.1 1056.7,474.0 1031.6,470.2 1006.5,466.2 981.3,462.6 956.1,459.2 930.8,456.3 905.6,453.1 880.3,450.2 855.0,447.7 829.6,445.6 804.3,443.2 778.9,441.2 753.5,439.5 728.1,438.4 702.7,437.0 677.2,435.8 651.8,435.0 626.3,434.9 600.8,434.6 575.4,434.2 549.9,434.4 524.4,435.4 499.0,436.3 473.5,436.6 448.1,437.8 422.7,440.1 397.3,442.0 371.8,443.2 346.4,445.7 321.2,449.5 295.8,451.8 270.4,453.8Z" fill="#b4b5b7" fill-opacity="0.5" stroke="none"/><path d="M270.4,453.8 295.8,451.8 321.2,449.5 346.4,445.7 371.8,443.2 397.3,442.0 422.7,440.1 448.1,437.8 473.5,436.6 499.0,436.3 524.4,435.4 549.9,434.4 575.4,434.2 600.8,434.6 626.3,434.9 651.8,435.0 677.2,435.8 702.7,437.0 728.1,438.4 753.5,439.5 778.9,441.2 804.3,443.2 829.6,445.6 855.0,447.7 880.3,450.2 905.6,453.1 930.8,456.3 956.1,459.2 981.3,462.6 1006.5,466.2 1031.6,470.2 1056.7,474.0 1081.8,478.1 1106.9,482.5 1131.9,487.2 1156.9,491.8 1181.8,496.6 1206.7,501.7 1231.6,507.0 1256.4,512.3 1281.2,517.8 1306.0,523.6 1330.7,529.4 1355.4,535.4 1380.1,541.5 1404.7,547.9 1429.3,554.3 1453.8,560.8 1478.3,567.6 1502.7,574.4 1527.2,581.3 1551.6,588.4 1575.9,595.7 1600.2,603.0 1624.5,610.4 1648.7,618.0 1673.0,625.7 1697.1,633.4 1721.3,641.3 1745.4,649.4 1769.5,657.4 1793.5,665.6 1817.5,673.9 1841.5,682.3 1865.4,690.7 1889.3,699.2 1913.2,707.9 1937.1,716.6 1960.9,725.4 1984.7,734.2 2008.5,743.2 2032.2,752.2 2056.0,761.3 2079.7,770.4 2103.3,779.7 2127.0,788.9 2150.6,798.2 2174.3,807.3 2198.0,816.5 2221.7,825.6 2245.4,834.8 2269.0,844.1 2292.6,853.4 2316.2,862.7 2339.7,872.1 2363.2,881.5 2386.7,891.0 2410.1,900.6 2433.5,910.4 2456.7,920.2 2479.6,930.2 2502.2,940.4 2524.4,951.1 2546.2,962.2 2567.5,973.9 2588.2,986.2 2608.3,999.2 2627.7,1013.0 2645.7,1027.3 2661.7,1042.2 2674.9,1057.7 2686.0,1073.7 2698.2,1090.5 2708.8,1110.4 2717.2,1132.7 2723.1,1156.7 2726.8,1181.7 2729.2,1207.5 2733.1,1233.4 2740.3,1258.1 2740.3,1258.1 2732.3,1233.4 2727.2,1207.5 2723.6,1181.6 2718.3,1156.6 2710.7,1133.2 2700.5,1111.8 2688.3,1093.7 2675.4,1079.0 2665.8,1064.3 2653.5,1050.0 2638.3,1035.8 2620.8,1022.0 2602.0,1008.6 2582.2,995.8 2561.9,983.7 2540.9,972.2 2519.4,961.2 2497.4,950.7 2475.0,940.5 2452.2,930.6 2429.1,920.8 2405.8,911.1 2382.4,901.5 2359.0,892.0 2335.5,882.6 2312.0,873.3 2288.5,864.0 2264.9,854.8 2241.3,845.6 2217.6,836.5 2193.9,827.5 2170.2,818.5 2146.5,809.4 2123.0,799.9 2099.4,790.5 2075.8,781.1 2052.2,771.8 2028.6,762.5 2004.9,753.4 1981.3,744.2 1957.6,735.1 1933.8,726.2 1910.0,717.3 1886.3,708.5 1862.5,699.7 1838.6,691.1 1814.7,682.6 1790.8,674.0 1766.9,665.7 1742.9,657.5 1718.9,649.2 1694.8,641.2 1670.7,633.2 1646.6,625.4 1622.5,617.6 1598.3,610.0 1574.0,602.6 1549.8,595.1 1525.5,587.8 1501.1,580.7 1476.8,573.7 1452.3,566.7 1427.9,560.0 1403.4,553.5 1378.8,546.9 1354.3,540.5 1329.6,534.4 1305.0,528.4 1280.3,522.5 1255.6,516.7 1230.8,511.3 1206.0,505.9 1181.1,500.6 1156.2,495.5 1131.3,490.8 1106.3,486.0 1081.3,481.4 1056.3,477.2 1031.2,473.2 1006.1,469.1 981.0,465.2 955.8,461.8 930.6,458.7 905.4,455.3 880.1,452.3 854.8,449.7 829.5,447.5 804.2,445.0 778.8,442.7 753.4,441.0 728.0,439.8 702.6,438.3 677.2,436.9 651.8,436.0 626.3,435.9 600.9,435.6 575.4,434.9 549.9,435.0 524.5,436.1 499.0,437.0 473.5,437.1 448.1,438.2 422.7,440.7 397.3,442.6 371.8,443.4 346.5,446.0 321.3,450.1 295.9,452.2 270.4,453.8Z" fill="#b5b6b8" fill-opacity="0.5" stroke="none"/><path d="M270.4,453.8 295.9,452.2 321.3,450.1 346.5,446.0 371.8,443.4 397.3,442.6 422.7,440.7 448.1,438.2 473.5,437.1 499.0,437.0 524.5,436.1 549.9,435.0 575.4,434.9 600.9,435.6 626.3,435.9 651.8,436.0 677.2,436.9 702.6,438.3 728.0,439.8 753.4,441.0 778.8,442.7 804.2,445.0 829.5,447.5 854.8,449.7 880.1,452.3 905.4,455.3 930.6,458.7 955.8,461.8 981.0,465.2 1006.1,469.1 1031.2,473.2 1056.3,477.2 1081.3,481.4 1106.3,486.0 1131.3,490.8 1156.2,495.5 1181.1,500.6 1206.0,505.9 1230.8,511.3 1255.6,516.7 1280.3,522.5 1305.0,528.4 1329.6,534.4 1354.3,540.5 1378.8,546.9 1403.4,553.5 1427.9,560.0 1452.3,566.7 1476.8,573.7 1501.1,580.7 1525.5,587.8 1549.8,595.1 1574.0,602.6 1598.3,610.0 1622.5,617.6 1646.6,625.4 1670.7,633.2 1694.8,641.2 1718.9,649.2 1742.9,657.5 1766.9,665.7 1790.8,674.0 1814.7,682.6 1838.6,691.1 1862.5,699.7 1886.3,708.5 1910.0,717.3 1933.8,726.2 1957.6,735.1 1981.3,744.2 2004.9,753.4 2028.6,762.5 2052.2,771.8 2075.8,781.1 2099.4,790.5 2123.0,799.9 2146.5,809.4 2170.2,818.5 2193.9,827.5 2217.6,836.5 2241.3,845.6 2264.9,854.8 2288.5,864.0 2312.0,873.3 2335.5,882.6 2359.0,892.0 2382.4,901.5 2405.8,911.1 2429.1,920.8 2452.2,930.6 2475.0,940.5 2497.4,950.7 2519.4,961.2 2540.9,972.2 2561.9,983.7 2582.2,995.8 2602.0,1008.6 2620.8,1022.0 2638.3,1035.8 2653.5,1050.0 2665.8,1064.3 2675.4,1079.0 2688.3,1093.7 2700.5,1111.8 2710.7,1133.2 2718.3,1156.6 2723.6,1181.6 2727.2,1207.5 2732.3,1233.4 2740.3,1258.1 2740.3,1258.1 2731.5,1233.5 2725.2,1207.4 2720.3,1181.4 2713.6,1156.6 2704.2,1133.6 2692.2,1113.3 2678.4,1096.8 2664.8,1084.3 2656.6,1071.0 2645.3,1057.8 2630.9,1044.4 2614.0,1031.1 2595.6,1018.0 2576.3,1005.4 2556.2,993.6 2535.6,982.2 2514.4,971.4 2492.6,961.0 2470.4,950.9 2447.7,941.0 2424.7,931.3 2401.5,921.6 2378.1,912.0 2354.8,902.5 2331.3,893.1 2307.9,883.8 2284.3,874.6 2260.7,865.5 2237.1,856.4 2213.5,847.4 2189.8,838.5 2166.0,829.7 2142.4,820.6 2118.9,810.9 2095.4,801.4 2072.0,791.8 2048.5,782.3 2024.9,772.8 2001.4,763.5 1977.8,754.2 1954.2,744.9 1930.6,735.8 1906.9,726.7 1883.2,717.7 1859.5,708.7 1835.7,700.0 1811.9,691.2 1788.1,682.5 1764.3,674.0 1740.4,665.6 1716.5,657.2 1692.5,648.9 1668.5,640.8 1644.5,632.8 1620.5,624.7 1596.3,617.0 1572.2,609.4 1548.0,601.7 1523.8,594.2 1499.5,586.9 1475.2,579.7 1450.9,572.6 1426.5,565.7 1402.0,559.0 1377.6,552.2 1353.1,545.7 1328.6,539.4 1304.0,533.3 1279.4,527.1 1254.7,521.2 1229.9,515.6 1205.2,510.0 1180.4,504.5 1155.6,499.3 1130.7,494.5 1105.8,489.5 1080.9,484.7 1055.9,480.3 1030.8,476.3 1005.8,471.9 980.7,467.9 955.5,464.3 930.3,461.2 905.2,457.6 879.9,454.4 854.7,451.6 829.4,449.4 804.1,446.7 778.7,444.3 753.4,442.4 728.0,441.2 702.6,439.6 677.2,438.0 651.8,437.0 626.3,436.9 600.9,436.5 575.4,435.6 549.9,435.6 524.5,436.8 499.1,437.7 473.6,437.5 448.1,438.5 422.8,441.2 397.4,443.1 371.8,443.6 346.5,446.2 321.3,450.7 295.9,452.6 270.4,453.8Z" fill="#b6b7b9" fill-opacity="0.5" stroke="none"/><path d="M79.0,613.0 94.8,620.2 110.7,627.3 126.6,634.3 142.5,641.3 158.4,648.2 174.4,655.1 190.4,661.8 206.4,668.5 222.5,675.1 238.6,681.7 254.7,688.1 270.9,694.6 287.1,700.9 303.3,707.2 319.5,713.4 335.8,719.5 352.0,725.6 368.3,731.6 384.7,737.6 401.0,743.5 417.4,749.3 433.8,755.1 450.2,760.8 466.6,766.4 483.1,772.0 499.5,777.5 516.0,783.0 532.5,788.4 549.1,793.8 565.6,799.1 582.2,804.4 598.7,809.6 615.3,814.8 631.9,819.9 648.6,825.0 665.2,830.0 681.9,834.9 698.5,839.9 715.2,844.8 731.9,849.6 748.6,854.4 765.3,859.1 782.0,863.8 798.8,868.5 815.5,873.1 832.3,877.7 849.0,882.3 865.8,886.8 882.6,891.3 899.4,895.7 916.2,900.2 933.0,904.5 949.9,908.9 966.7,913.2 983.5,917.5 1000.4,921.8 1017.2,926.0 1034.1,930.2 1051.0,934.4 1067.8,938.6 1084.7,942.7 1101.6,946.8 1118.5,950.9 1135.4,955.0 1152.3,959.0 1169.2,963.1 1186.1,967.1 1203.0,971.1 1219.9,975.0 1236.8,979.0 1253.7,983.0 1270.7,986.9 1287.6,990.8 1304.5,994.7 1321.5,998.7 1338.4,1002.6 1355.3,1006.4 1372.3,1010.3 1389.2,1014.2 1406.1,1018.1 1423.1,1021.9 1440.0,1025.8 1457.0,1029.7 1473.9,1033.5 1490.9,1037.4 1507.8,1041.2 1524.7,1045.1 1541.7,1049.0 1558.6,1052.8 1575.6,1056.7 1592.5,1060.6 1609.4,1064.5 1626.4,1068.4 1643.3,1072.3 1660.2,1076.2 1677.2,1080.1 1694.1,1084.0 1711.0,1088.0 1727.9,1091.9 1744.9,1095.9 1761.8,1099.9 1778.7,1103.9 1795.6,1107.9 1812.5,1111.9 1829.4,1116.0 1846.3,1120.1 1863.2,1124.2 1880.0,1128.3 1896.9,1132.5 1913.8,1136.6 1930.7,1140.8 1947.5,1145.0 1964.4,1149.3 1981.2,1153.6 1998.0,1157.9 2014.9,1162.2 2031.7,1166.5 2048.5,1170.8 2065.4,1175.2 2082.2,1179.5 2099.0,1183.9 2115.8,1188.2 2132.7,1192.5 2149.5,1196.9 2166.3,1201.2 2183.2,1205.5 2200.0,1209.7 2216.9,1214.0 2233.7,1218.2 2250.6,1222.4 2267.5,1226.5 2284.3,1230.7 2301.2,1234.7 2318.1,1238.8 2335.0,1242.8 2352.0,1246.7 2368.9,1250.6 2385.9,1254.4 2402.8,1258.1 2419.8,1261.8 2436.8,1265.5 2453.8,1269.0 2470.8,1272.5 2487.9,1275.9 2504.9,1279.2 2522.0,1282.5 2539.1,1285.6 2556.2,1288.7 2573.4,1291.4 2590.6,1293.5 2607.9,1294.7 2625.3,1294.6 2642.6,1292.9 2659.5,1289.0 2675.8,1283.0 2691.5,1275.5 2707.2,1268.0 2723.3,1261.7 2740.3,1258.1" fill="none" stroke="#9e3440" stroke-width="1.2"/><path d="M270.4,453.8 287.3,451.7 304.2,449.8 321.2,448.0 338.1,446.3 355.1,444.7 372.1,443.3 389.0,442.0 406.0,440.8 423.0,439.7 440.0,438.7 457.0,437.9 474.1,437.2 491.1,436.6 508.1,436.2 525.2,435.8 542.2,435.6 559.2,435.5 576.3,435.5 593.3,435.6 610.3,435.9 627.3,436.2 644.4,436.7 661.4,437.3 678.4,438.0 695.4,438.8 712.4,439.7 729.4,440.7 746.4,441.9 763.4,443.1 780.4,444.4 797.4,445.9 814.3,447.4 831.3,449.1 848.2,450.8 865.2,452.7 882.1,454.6 899.0,456.7 915.9,458.8 932.8,461.0 949.7,463.4 966.5,465.8 983.4,468.3 1000.2,470.9 1017.0,473.6 1033.8,476.4 1050.6,479.3 1067.4,482.3 1084.2,485.3 1100.9,488.5 1117.6,491.7 1134.3,495.0 1151.0,498.4 1167.7,501.8 1184.4,505.4 1201.0,509.0 1217.6,512.7 1234.3,516.5 1250.8,520.3 1267.4,524.2 1284.0,528.2 1300.5,532.3 1317.0,536.4 1333.6,540.6 1350.0,544.9 1366.5,549.2 1383.0,553.7 1399.4,558.1 1415.8,562.7 1432.2,567.3 1448.6,571.9 1465.0,576.7 1481.3,581.5 1497.6,586.3 1514.0,591.2 1530.2,596.2 1546.5,601.2 1562.8,606.3 1579.0,611.4 1595.3,616.6 1611.5,621.8 1627.7,627.1 1643.8,632.5 1660.0,637.9 1676.1,643.3 1692.2,648.8 1708.4,654.4 1724.4,659.9 1740.5,665.6 1756.6,671.2 1772.6,677.0 1788.7,682.7 1804.7,688.5 1820.7,694.4 1836.7,700.3 1852.6,706.2 1868.6,712.2 1884.5,718.2 1900.4,724.2 1916.4,730.3 1932.3,736.4 1948.1,742.6 1964.0,748.8 1979.9,755.0 1995.7,761.2 2011.5,767.5 2027.4,773.8 2043.2,780.2 2059.0,786.5 2074.8,792.9 2090.5,799.4 2106.3,805.8 2122.1,812.3 2137.8,818.7 2153.6,825.2 2169.3,831.8 2185.0,838.3 2200.8,844.8 2216.5,851.3 2232.2,857.9 2248.0,864.4 2263.7,871.0 2279.4,877.5 2295.1,884.1 2310.9,890.6 2326.6,897.2 2342.3,903.7 2358.1,910.2 2373.8,916.8 2389.5,923.4 2405.2,930.0 2420.8,936.9 2436.3,943.8 2451.7,951.1 2467.0,958.5 2482.2,966.3 2497.2,974.3 2512.0,982.8 2526.6,991.5 2541.0,1000.6 2555.3,1009.9 2569.4,1019.5 2583.3,1029.3 2597.2,1039.2 2610.9,1049.3 2624.6,1059.5 2638.1,1069.8 2651.6,1080.2 2664.8,1091.0 2677.3,1102.5 2688.6,1115.2 2698.5,1129.1 2706.7,1144.0 2713.3,1159.7 2718.3,1176.0 2722.3,1192.5 2725.8,1209.2 2729.6,1225.8 2734.2,1242.2 2740.3,1258.1" fill="none" stroke="#9e3440" stroke-width="1.2"/><path d="M242.6,534.5 258.9,536.6 275.2,538.8 291.4,541.0 307.7,543.2 323.9,545.5 340.2,547.8 356.4,550.2 372.7,552.6 388.9,555.0 405.1,557.5 421.3,560.0 437.6,562.6 453.8,565.2 470.0,567.8 486.2,570.5 502.3,573.2 518.5,576.0 534.7,578.8 550.9,581.6 567.0,584.4 583.2,587.3 599.3,590.3 615.5,593.2 631.6,596.2 647.8,599.3 663.9,602.3 680.0,605.4 696.1,608.6 712.2,611.8 728.3,615.0 744.4,618.2 760.5,621.5 776.6,624.8 792.6,628.1 808.7,631.5 824.8,634.9 840.8,638.3 856.9,641.8 872.9,645.3 888.9,648.8 905.0,652.4 921.0,655.9 937.0,659.6 953.0,663.2 969.0,666.9 985.0,670.6 1001.0,674.3 1016.9,678.1 1032.9,681.9 1048.9,685.7 1064.8,689.5 1080.8,693.4 1096.7,697.3 1112.7,701.2 1128.6,705.2 1144.5,709.2 1160.4,713.2 1176.4,717.2 1192.3,721.3 1208.2,725.3 1224.0,729.4 1239.9,733.6 1255.8,737.7 1271.7,741.9 1287.6,746.1 1303.4,750.3 1319.3,754.6 1335.1,758.9 1351.0,763.2 1366.8,767.5 1382.6,771.8 1398.4,776.2 1414.3,780.6 1430.1,785.0 1445.9,789.4 1461.7,793.9 1477.5,798.3 1493.3,802.8 1509.0,807.3 1524.8,811.9 1540.6,816.4 1556.4,821.0 1572.1,825.6 1587.9,830.2 1603.6,834.8 1619.4,839.5 1635.1,844.1 1650.8,848.8 1666.6,853.5 1682.3,858.2 1698.0,863.0 1713.7,867.7 1729.4,872.5 1745.1,877.3 1760.8,882.1 1776.5,886.9 1792.2,891.7 1807.9,896.6 1823.5,901.4 1839.2,906.3 1854.9,911.3 1870.5,916.2 1886.2,921.2 1901.8,926.1 1917.4,931.1 1933.1,936.2 1948.7,941.2 1964.3,946.3 1979.9,951.4 1995.5,956.6 2011.1,961.8 2026.6,966.9 2042.2,972.2 2057.7,977.4 2073.3,982.7 2088.8,988.1 2104.3,993.4 2119.8,998.8 2135.3,1004.2 2150.8,1009.7 2166.3,1015.2 2181.7,1020.7 2197.1,1026.3 2212.6,1031.9 2228.0,1037.6 2243.4,1043.3 2258.8,1049.0 2274.1,1054.8 2289.5,1060.6 2304.8,1066.4 2320.1,1072.3 2335.4,1078.3 2350.7,1084.3 2366.0,1090.3 2381.2,1096.4 2396.4,1102.5 2411.7,1108.7 2426.8,1114.9 2442.0,1121.2 2457.2,1127.5 2472.3,1133.9 2487.4,1140.3 2502.5,1146.8 2517.5,1153.3 2532.6,1159.9 2547.6,1166.5 2562.6,1173.2 2577.5,1180.0 2592.5,1186.8 2607.4,1193.6 2622.3,1200.6 2637.1,1207.5 2652.0,1214.6 2666.8,1221.7 2681.5,1228.8 2696.3,1236.0 2711.0,1243.3 2725.7,1250.6 2740.3,1258.1" fill="none" stroke="#9e3440" stroke-width="1.2"/><path d="M95.7,598.0 C94.4,591.0 89.1,568.3 87.8,555.7 C86.5,543.1 85.8,534.7 87.8,522.6 C89.8,510.5 94.3,495.0 99.7,482.9 C105.1,470.8 110.5,461.3 120.0,450.0 C129.5,438.7 142.4,425.5 156.7,415.0 C171.0,404.5 194.7,391.6 205.8,386.8 C217.0,382.0 218.2,384.3 223.6,386.0 C229.0,387.7 234.3,390.7 238.5,397.0 C242.7,403.3 246.1,412.6 249.0,424.0 C251.9,435.4 254.7,458.8 255.8,465.7" fill="none" stroke="#9e3440" stroke-width="1.2"/><path d="M158.0,415.8 C163.3,418.2 180.0,422.8 189.7,430.0 C199.4,437.2 209.9,449.2 216.1,459.1 C222.3,469.0 222.3,476.9 226.7,489.5 C231.1,502.1 239.9,527.0 242.6,534.5" fill="none" stroke="#9e3440" stroke-width="1.2"/><path d="M578.5,430.8 L433.5,558.5 L279.8,694.9 Q271,708 276,720 Q279,726 287.2,729" fill="none" stroke="#9e3440" stroke-width="1.2"/><path d="M1065.7,465.7 L1050.8,478.1 L883.5,646.7 L698,838.3 Q676,866 677.5,895 Q679,905 692,910.5" fill="none" stroke="#9e3440" stroke-width="1.2"/><path d="M2178.9,769.4 L2143,821.5 L2050,977.5 L1949.6,1142.1 Q1900,1220 1899,1250 Q1899,1259 1903,1263" fill="none" stroke="#9e3440" stroke-width="1.2"/><path d="M2673.4,1002.6 L2640,1072.6 L2591.3,1182 L2542.6,1287.8 L2497,1407.7" fill="none" stroke="#9e3440" stroke-width="1.2"/><path d="M78.5,612.6 L270.4,453.8 M176.4,531.9 L242.6,534.5" fill="none" stroke="#9e3440" stroke-width="1.2"/><ellipse cx="659.1" cy="447" rx="16.8" ry="7.6" fill="none" stroke="#2e2e2e" stroke-width="1.35"/><ellipse cx="713.6" cy="455.6" rx="17.2" ry="8.0" fill="none" stroke="#2e2e2e" stroke-width="1.35"/><path d="M675.9,449.0 L696.4,454.6" stroke="#2e2e2e" stroke-width="1.3"/><ellipse cx="552.5" cy="466.3" rx="16.8" ry="8.2" fill="none" stroke="#2e2e2e" stroke-width="1.35"/><ellipse cx="607" cy="474.7" rx="17.2" ry="8.5" fill="none" stroke="#2e2e2e" stroke-width="1.35"/><path d="M569.3,468.3 L589.8,473.7" stroke="#2e2e2e" stroke-width="1.3"/><ellipse cx="333" cy="663.9" rx="16.8" ry="9.3" fill="none" stroke="#2e2e2e" stroke-width="1.35"/><ellipse cx="388.3" cy="673.8" rx="17.2" ry="9.5" fill="none" stroke="#2e2e2e" stroke-width="1.35"/><path d="M349.8,665.9 L371.1,672.8" stroke="#2e2e2e" stroke-width="1.3"/><ellipse cx="369.8" cy="712.2" rx="16.8" ry="9.7" fill="none" stroke="#2e2e2e" stroke-width="1.35"/><ellipse cx="426.5" cy="723.4" rx="17.2" ry="9.7" fill="none" stroke="#2e2e2e" stroke-width="1.35"/><path d="M386.6,714.2 L409.3,722.4" stroke="#2e2e2e" stroke-width="1.3"/></g>
<defs>
<radialGradient id="bsph" cx="0.42" cy="0.3" r="0.7"><stop offset="0" stop-color="#e8ffff"/><stop offset="0.18" stop-color="#40d8ff"/><stop offset="0.6" stop-color="#1078f0"/><stop offset="1" stop-color="#0838c8"/></radialGradient>
<linearGradient id="lensV" x1="0" y1="0" x2="0" y2="1"><stop offset="0" stop-color="#a8e8ff"/><stop offset="0.35" stop-color="#4aa8e8"/><stop offset="1" stop-color="#1a5aa0"/></linearGradient>
<linearGradient id="lensM" x1="0" y1="0" x2="0" y2="1"><stop offset="0" stop-color="#3a88c8"/><stop offset="0.5" stop-color="#5ab0ee"/><stop offset="1" stop-color="#2a70b8"/></linearGradient>
<linearGradient id="lensH" x1="0" y1="0" x2="1" y2="0"><stop offset="0" stop-color="#c0f0ff"/><stop offset="0.45" stop-color="#4aa8e8"/><stop offset="1" stop-color="#1a60a8"/></linearGradient>
<linearGradient id="tri" x1="0" y1="0" x2="0" y2="1"><stop offset="0" stop-color="#1a5e9a"/><stop offset="1" stop-color="#0a4078"/></linearGradient>
<linearGradient id="fire" x1="0" y1="0" x2="0" y2="1"><stop offset="0" stop-color="#8a9a8a"/><stop offset="0.3" stop-color="#e84020"/><stop offset="0.55" stop-color="#f8a020"/><stop offset="0.8" stop-color="#fff8e0"/><stop offset="1" stop-color="#ffffff"/></linearGradient>
<linearGradient id="stripes" x1="0" y1="0" x2="0" y2="1">
<stop offset="0" stop-color="#888"/><stop offset="0.1" stop-color="#222"/><stop offset="0.18" stop-color="#ddd"/><stop offset="0.26" stop-color="#222"/><stop offset="0.34" stop-color="#eee"/><stop offset="0.42" stop-color="#222"/><stop offset="0.5" stop-color="#fff"/><stop offset="0.58" stop-color="#222"/><stop offset="0.66" stop-color="#ddd"/><stop offset="0.74" stop-color="#222"/><stop offset="0.82" stop-color="#ccc"/><stop offset="0.9" stop-color="#222"/><stop offset="1" stop-color="#777"/></linearGradient>
<linearGradient id="rainbow" x1="0" y1="0" x2="0" y2="1">
<stop offset="0" stop-color="#ff5080"/><stop offset="0.12" stop-color="#ff40a0"/><stop offset="0.22" stop-color="#4070ff"/><stop offset="0.33" stop-color="#30e0f0"/><stop offset="0.45" stop-color="#c8ff40"/><stop offset="0.55" stop-color="#f0ff60"/><stop offset="0.67" stop-color="#30e0e0"/><stop offset="0.78" stop-color="#4070ff"/><stop offset="0.88" stop-color="#ff40a0"/><stop offset="1" stop-color="#ff4040"/></linearGradient>
<radialGradient id="shade" cx="0.4" cy="0.35" r="0.7"><stop offset="0" stop-color="#fff" stop-opacity="0.35"/><stop offset="0.6" stop-color="#fff" stop-opacity="0"/><stop offset="1" stop-color="#000" stop-opacity="0.25"/></radialGradient>
</defs>
<!-- ===== Row 1 ===== -->
<g>
 <ellipse cx="32" cy="73" rx="11.6" ry="26.4" fill="#fff" stroke="#8a8a8a" stroke-width="1.3" stroke-dasharray="2.2,1"/>
 <ellipse cx="32" cy="64" rx="9" ry="8" fill="#ffd0d8" opacity="0.8"/>
 <path d="M31,62 L31,78 L29,80 L29,94 L43,94 L44,80 L41,76 L35,75 L35,62 Z" fill="#fff" stroke="#222" stroke-width="1.2"/>
 <path d="M35,70 L39,72 M25,77 L29,80" stroke="#222" stroke-width="1.2"/>
</g>
<g>
 <path d="M77,62 L83,58 L92,58 L95,62 L109,64 L112,70 L110,90 L95,84 L80,80 Z" fill="#e8e4c0" stroke="#8a8a70" stroke-width="1.4"/>
 <path d="M78,63 L98,67 L106,78 L107,90 L86,84 L80,80 Z" fill="#f8f2a0" stroke="#8a8a70" stroke-width="1.4"/>
</g>
<g>
 <path d="M144,55 L150,54 L170,64 L172,92 L174,94 L170,94 L145,81 Z" fill="#555" stroke="#333" stroke-width="1.2"/>
 <path d="M148,58 L168,67 L168,89 L148,79 Z" fill="url(#fire)"/>
</g>
<g>
 <path d="M230,61 L265,61 M257,54 L257,74" stroke="#666" stroke-width="1.3"/>
 <path d="M265,57 L265,74 M230,74 L265,74" stroke="#444" stroke-width="1.2" stroke-dasharray="1.2,2"/>
 <rect x="231" y="79" width="36" height="14" fill="#a8a8b8"/>
 <rect x="229.8" y="77" width="34.7" height="13.3" fill="#f8d030"/>
 <path d="M230,78 L264,78" stroke="#111" stroke-width="1.6" stroke-dasharray="1.6,1.8"/>
 <path d="M238,78 L238,81 M254,78 L254,81" stroke="#111" stroke-width="1.6"/>
 <path d="M236,84 L239,84 L239,88 M253,84 L256,84 L256,88 L253,88 Z" stroke="#a08030" stroke-width="1" fill="none"/>
</g>
<!-- Design icon -->
<g>
 <path d="M347,56 L363,89" stroke="#111" stroke-width="1.6"/>
 <circle cx="347" cy="56.5" r="4.8" fill="#1040ff" stroke="#111" stroke-width="1.3"/>
 <circle cx="355" cy="72.5" r="6.8" fill="#ff2020" stroke="#111" stroke-width="1.5"/>
 <circle cx="363" cy="89" r="5" fill="#10e040" stroke="#111" stroke-width="1.3"/>
</g>
<circle cx="515.5" cy="73.5" r="15.5" fill="url(#bsph)"/>
<!-- Plan icon -->
<g>
 <path d="M664,55 L692,55 L698,61 L698,92 L664,92 Z" fill="#fff" stroke="#333" stroke-width="1.4"/>
 <path d="M692,55 L692,61 L698,61" fill="#8ac" stroke="#333" stroke-width="1"/>
 <path d="M668,64 L690,64 M668,71 L686,71 M668,78 L692,78 M668,85 L680,85" stroke="#888" stroke-width="1.2" stroke-dasharray="1.5,1.5"/>
</g>
<!-- CNC icon -->
<g>
 <rect x="836" y="52" width="9" height="13" fill="#fff" stroke="#223" stroke-width="1.6"/>
 <path d="M826,64 L856,64 L856,82 Q856,92 846,92 L836,92 Q826,92 826,82 Z" fill="#dde" stroke="#223" stroke-width="1.6"/>
 <path d="M828,68 L854,68 M828,72 L854,72 M828,76 L854,76 M828,80 L854,80 M829,84 L853,84 M831,88 L851,88" stroke="#223" stroke-width="1.2" stroke-dasharray="1.3,1.3"/>
</g>
<!-- ===== Row 2 ===== -->
<g stroke="#5e6b72" fill="none">
 <circle cx="39.5" cy="183.3" r="9.2" stroke-width="3"/>
 <path d="M46,191 L56,204" stroke-width="5.5" stroke-linecap="round"/>
 <rect x="80.5" y="167" width="24.5" height="18" stroke-width="1.6" stroke="#6a7880"/>
 <circle cx="105" cy="187" r="9.2" stroke-width="3"/>
 <path d="M111.5,195 L122,208" stroke-width="5.5" stroke-linecap="round"/>
</g>
<g stroke="#555" fill="none" stroke-width="1.5" stroke-linecap="round">
 <path d="M161,203 Q168,192 170,180 Q176,172 184,170 L194,170 Q203,172 202,180 L190,194 Q199,192 203,197 L176,211"/>
 <path d="M177,179 L182,172 M183,180 L188,172 M189,181 L194,173 M195,182 L199,176" stroke-width="2.2" stroke="#333"/>
</g>
<g>
 <path d="M244,167 Q239,172 237.5,181" stroke="#4a4a4a" stroke-width="3.2" fill="none"/>
 <path d="M224,184.5 L255,181.5" stroke="#5a5a50" stroke-width="3.6"/>
 <path d="M249,168.5 L263.5,181 L258,182 L257.5,208 L252,206 L251.5,183 Z" fill="#3a90ec"/>
 <path d="M224.5,186 L252,201 L234,206 Z" fill="#3a90ec"/>
 <path d="M223.5,183.5 Q223,190 227,194" stroke="#10206a" stroke-width="2.8" fill="none"/>
 <path d="M241,205 L251.5,213" stroke="#3a3a3a" stroke-width="3.2"/>
 <path d="M262,185 Q268,191 267,198" stroke="#1a2a5a" stroke-width="3" fill="none"/>
 <path d="M252.5,183 L254,205" stroke="#fff" stroke-width="0.8" opacity="0.5"/>
</g>
<g>
 <path d="M303,169 L307,174 L343,185 L342,202 L312,210 L305,185 Z" fill="#fff820"/>
 <path d="M302,168 L310,176 L306,180 Z" fill="#555"/>
 <circle cx="328.2" cy="196" r="12.4" fill="url(#bsph)"/>
</g>
<path d="M374,188 Q378,176 400,176 Q421,176 428,187 Q421,199 400,199 Q378,199 374,188 Z" fill="url(#lensV)"/>
<path d="M436.5,189 Q438,177.5 462,177.5 Q486,177.5 488.5,189 Q486,201 462,201 Q438,201 436.5,189 Z" fill="url(#lensM)"/>
<path d="M498,185 Q525,187 552,182 Q545,194 525,194 Q506,194 498,185 Z" fill="url(#lensV)"/>
<path d="M562,199.5 Q578,195 586.7,177 Q596,195 612.7,199.5 Z" fill="url(#tri)"/>
<path d="M624,199.5 Q640,195 649,176.5 Q658,195 674.4,199.5 Z" fill="url(#tri)"/>
<path d="M685,181 Q700,178 736,193 Q730,198 718,197 Q695,193 685,181 Z" fill="url(#lensH)"/>
<path d="M747,193 Q760,183 800,178.5 Q795,192 773,195 Q752,197 747,193 Z" fill="url(#lensH)"/>
<path d="M809,202 L851.7,175 Q862,185 859,195 Q856,203 840,203.5 Z" fill="url(#lensM)"/>
<path d="M872,178 Q885,173 900,178 Q915,186 923,199 Q920,204 897,203 Q875,198 872,178 Z" fill="#3a8ed8"/>
<path d="M958.7,162.4 Q970,175 969.5,189 Q970,203 958.7,215.7 Q947,203 947.8,189 Q947,175 958.7,162.4 Z" fill="url(#lensH)"/>
<!-- flip icon -->
<g>
 <path d="M1020,186 A20,20 0 0 1 1058,182" fill="none" stroke="#3a8ed0" stroke-width="3"/>
 <path d="M1052,182 L1064,182 L1058,190 Z" fill="#3a8ed0"/>
 <path d="M1021,199 A20,20 0 0 0 1056,203" fill="none" stroke="#3a8ed0" stroke-width="3"/>
 <path d="M1012.4,199.6 Q1026,190 1038,176.5 Q1050,190 1062.8,199.6 Z" fill="#0e4e8a"/>
</g>
<g>
 <path d="M1072,188 Q1072,181 1090,180" fill="none" stroke="#f02020" stroke-width="3.2"/>
 <path d="M1108,180 Q1126,181 1126,188" fill="none" stroke="#f02020" stroke-width="3.2"/>
 <path d="M1099.2,161.6 Q1109,175 1109.5,189 Q1109,203 1099.2,216.2 Q1089,203 1089,189 Q1089,175 1099.2,161.6 Z" fill="url(#lensH)"/>
 <path d="M1072,188 Q1072,195 1099,195 Q1126,195 1126,188" fill="none" stroke="#f02020" stroke-width="3.2"/>
 <path d="M1110,180 L1117,177 L1115,184 Z" fill="#f02020"/>
</g>
<g>
 <path d="M1134,188 Q1134,181 1150,180" fill="none" stroke="#f02020" stroke-width="3.2"/>
 <path d="M1170,180 Q1188,181 1188,188" fill="none" stroke="#f02020" stroke-width="3.2"/>
 <path d="M1160.3,161.6 Q1170,175 1170.5,189 Q1170,203 1160.3,216.2 Q1150,203 1150,189 Q1150,175 1160.3,161.6 Z" fill="url(#lensH)"/>
 <path d="M1134,188 Q1134,195 1161,195 Q1188,195 1188,188" fill="none" stroke="#f02020" stroke-width="3.2"/>
 <path d="M1171,180 L1178,177 L1176,184 Z" fill="#f02020"/>
 <path d="M1144.5,190.5 L1154,200 L1149,200 L1149,215.5 L1140,215.5 L1140,200 L1135,200 Z" fill="#f8b020" stroke="#a07010" stroke-width="1"/>
</g>
<g fill="none" stroke-width="2">
 <circle cx="1238" cy="188" r="16.8" stroke="#111"/>
 <ellipse cx="1238" cy="179.5" rx="8.2" ry="5.6" stroke="#111"/>
 <path d="M1222.5,184 Q1238,198 1253.5,184" stroke="#111"/>
</g>
<g fill="none" stroke-width="2">
 <circle cx="1300" cy="188" r="16.8" stroke="#111"/>
 <ellipse cx="1300" cy="179.5" rx="8.2" ry="5.6" stroke="#f02020"/>
 <path d="M1284.5,184 Q1300,198 1315.5,184" stroke="#f02020"/>
</g>
<g fill="none" stroke="#111" stroke-width="1.8">
 <circle cx="1362" cy="188" r="17"/>
 <path d="M1347,180 L1377,180 L1362,204 Z M1347,196 L1377,196 L1362,172 Z"/>
 <ellipse cx="1362" cy="188" rx="17" ry="7"/>
</g>
<circle cx="1441" cy="189.5" r="19.2" fill="url(#bsph)"/>
<circle cx="1503" cy="189.5" r="19.2" fill="url(#bsph)"/>
<g>
 <circle cx="1564.2" cy="189.5" r="18.6" fill="url(#bsph)"/>
 <path d="M1550,197 Q1565,195 1578,199 L1590,200 L1588,205 L1560,206 Z" fill="#20c8f0"/>
 <path d="M1556,197 L1580,171 L1586,176 L1562,203 Z" fill="#3050d8" stroke="#000" stroke-width="1.6"/>
 <path d="M1568,186 L1582,174" stroke="#fff" stroke-width="1.3" stroke-dasharray="1.5,1.5"/>
 <path d="M1556,197 L1553,205 L1562,203 Z" fill="#f8c080" stroke="#000" stroke-width="1.2"/>
</g>
<circle cx="1643" cy="189.2" r="19.6" fill="url(#stripes)"/>
<circle cx="1643" cy="189.2" r="19.6" fill="url(#shade)"/>
<circle cx="1704.8" cy="188.8" r="19.5" fill="url(#rainbow)"/>
<circle cx="1704.8" cy="188.8" r="19.5" fill="url(#shade)" opacity="0.6"/>
<g>
 <path d="M1782.9,166 L1782.9,212" stroke="#222" stroke-width="1.5" stroke-dasharray="2.5,2"/>
 <path d="M1774,171 L1766,180 L1774,191 L1766,205" fill="none" stroke="#1a50f0" stroke-width="2.8" stroke-dasharray="2.5,2.5"/>
 <path d="M1803,171 Q1790,178 1792,184 Q1803,193 1802,198 Q1798,203 1792,207" fill="none" stroke="#1a50f0" stroke-width="2.6"/>
</g>
<rect x="1844" y="172" width="14" height="14" fill="#f21212"/>
<rect x="1862" y="172" width="14" height="14" fill="#ffd020"/>
<rect x="1844" y="190" width="14" height="13.5" fill="#a0d040"/>
<rect x="1862" y="190" width="14" height="13.5" fill="#70d0e0"/>
<!-- title icon -->
<circle cx="32" cy="130.5" r="13.2" fill="url(#bsph)"/>

</svg>
<div style="position:absolute;left:1040px;top:244px;width:287px;height:34px;border:2px solid #000;background:#fdfde6"></div><div class="t" style="left:1047px;top:253.9px;font-size:22px;line-height:22px;color:#3a3a34;letter-spacing:0.54px;">Flip the board upside down</div>
</body></html>
